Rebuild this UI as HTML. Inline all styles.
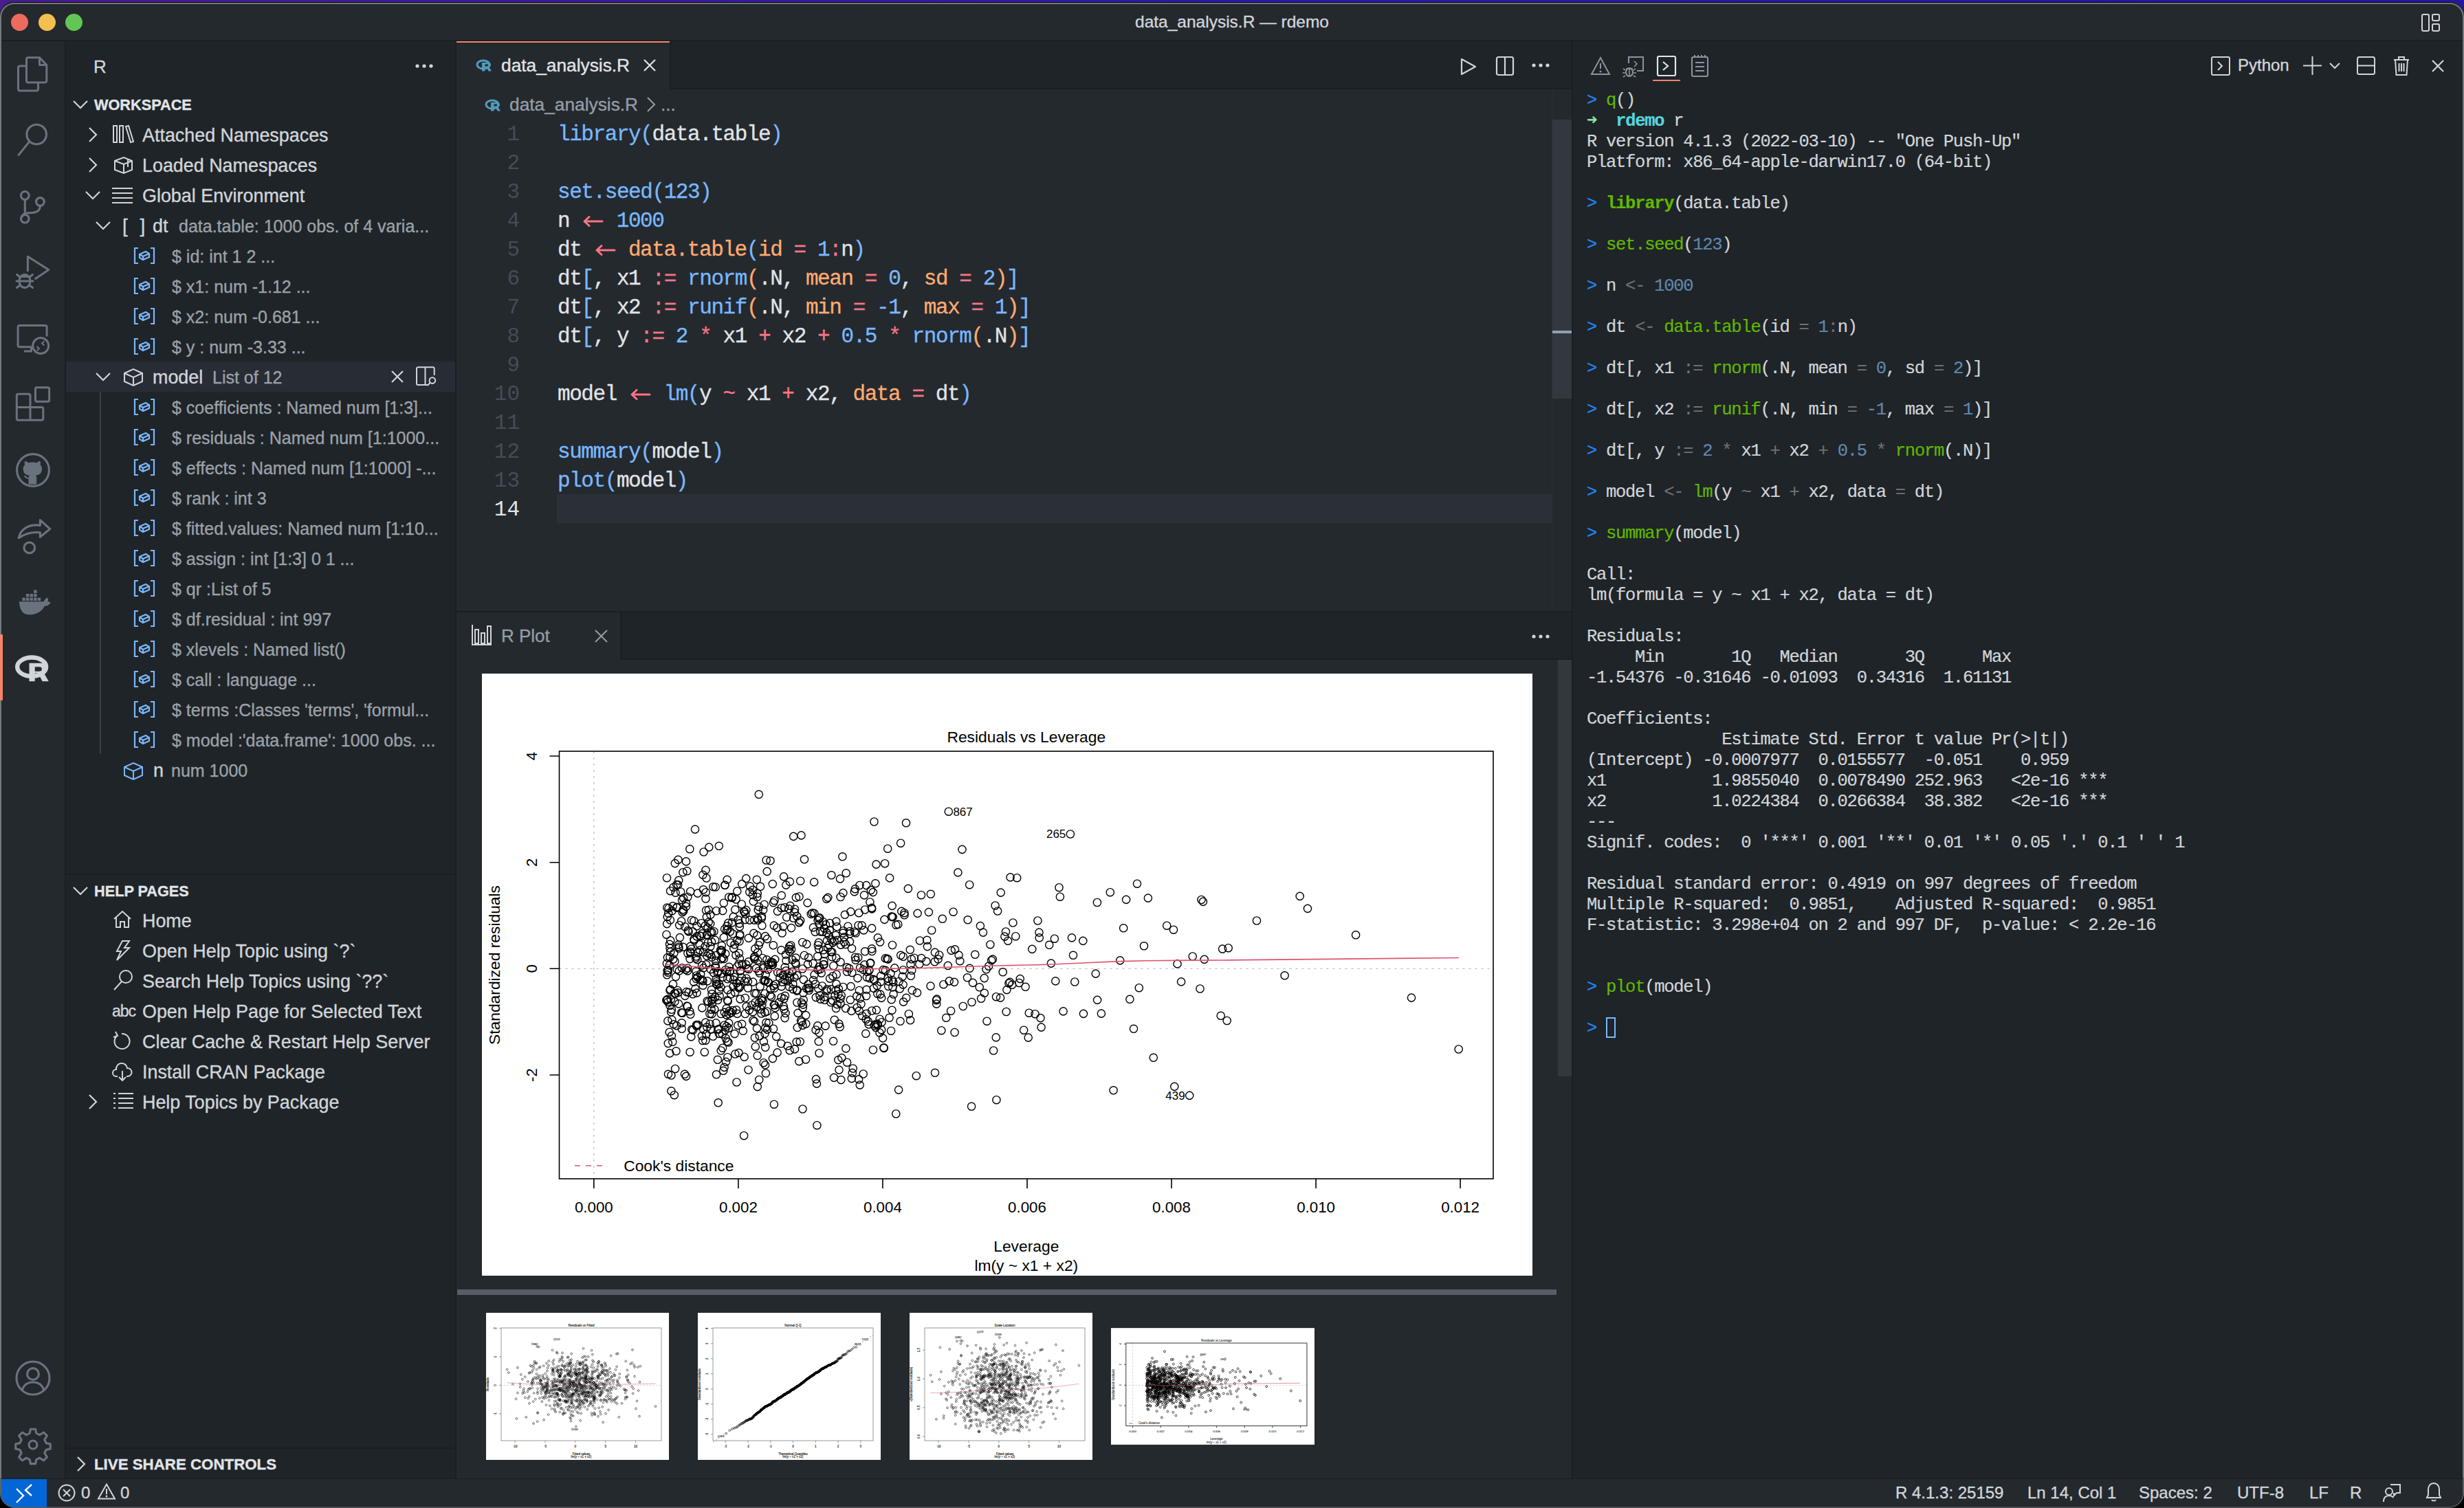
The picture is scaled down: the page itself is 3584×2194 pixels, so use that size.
<!DOCTYPE html>
<html><head><meta charset="utf-8">
<style>
html,body{margin:0;padding:0;width:3584px;height:2194px;overflow:hidden;background:#2e18ab;}
*{box-sizing:border-box;}
.a{position:absolute;-webkit-text-stroke:0.35px currentColor;}
body{font-family:"Liberation Sans",sans-serif;}
.mono{font-family:"Liberation Mono",monospace;}
#win{position:absolute;left:0;top:0;width:3584px;height:2194px;background:#24292e;}
.title{left:0;top:0;width:3584px;height:56px;background:#24292e;}
.ui{color:#d1d5da;font-size:26px;white-space:pre;}
.row{position:absolute;height:44px;line-height:44px;white-space:pre;font-size:26px;color:#d1d5da;}
.code{position:absolute;font-family:"Liberation Mono",monospace;font-size:31px;letter-spacing:-1.42px;-webkit-text-stroke:0.3px currentColor;white-space:pre;color:#e1e4e8;height:42px;line-height:42px;}
.ln{position:absolute;font-family:"Liberation Mono",monospace;font-size:31px;letter-spacing:0;color:#444d56;text-align:right;width:80px;height:42px;line-height:42px;}
.t{position:absolute;left:2308px;font-family:"Liberation Mono",monospace;font-size:25.5px;letter-spacing:-1.28px;-webkit-text-stroke:0.2px currentColor;white-space:pre;color:#d1d5da;height:30px;line-height:30px;}
.kf{color:#79b8ff}.ko{color:#f97583}.kv{color:#ffab70}
.tp{color:#2188ff}.tg{color:#5fb800}.tn{color:#5f87af}.to{color:#707070}
svg{position:absolute;overflow:visible;}
</style></head><body>
<div id="win">
<!-- title bar -->
<div class="a" style="left:0;top:0;width:3584px;height:58px;background:#24292e;"></div>
<div class="a" style="left:0;top:58px;width:3584px;height:2px;background:#1b1f23;"></div>
<div class="a" style="left:16px;top:20px;width:25px;height:25px;border-radius:50%;background:#ee6a5f;"></div>
<div class="a" style="left:56px;top:20px;width:25px;height:25px;border-radius:50%;background:#f5bf4f;"></div>
<div class="a" style="left:95px;top:20px;width:25px;height:25px;border-radius:50%;background:#62c655;"></div>
<div class="a ui" style="left:0;top:16px;width:3584px;text-align:center;font-size:24.5px;color:#d1d5da;line-height:32px;">data_analysis.R — rdemo</div>
<svg style="left:3522px;top:20px" width="28" height="26" viewBox="0 0 28 26"><g fill="none" stroke="#d1d5da" stroke-width="2"><rect x="1" y="1" width="10" height="24" rx="2"/><rect x="16" y="1" width="10" height="9" rx="2"/><rect x="16" y="15" width="10" height="10" rx="2"/></g></svg>

<!-- activity bar -->
<div class="a" style="left:0;top:60px;width:94px;height:2091px;background:#24292e;"></div>
<div class="a" style="left:94px;top:60px;width:2px;height:2091px;background:#1b1f23;"></div>
<div class="a" style="left:0;top:923px;width:4px;height:96px;background:#f9826c;"></div>
<!-- sidebar -->
<div class="a" style="left:96px;top:60px;width:566px;height:2091px;background:#1f2428;"></div>
<div class="a" style="left:662px;top:60px;width:2px;height:2091px;background:#1b1f23;"></div>
<!-- editor group 1 -->
<div class="a" style="left:664px;top:60px;width:1622px;height:70px;background:#1f2428;"></div>
<div class="a" style="left:664px;top:60px;width:310px;height:70px;background:#24292e;border-top:2px solid #f9826c;"></div>
<div class="a" style="left:664px;top:130px;width:1622px;height:760px;background:#24292e;"></div>
<div class="a" style="left:974px;top:60px;width:2px;height:70px;background:#1b1f23;"></div>
<div class="a" style="left:974px;top:128px;width:1312px;height:2px;background:#1b1f23;"></div>
<div class="a" style="left:664px;top:889px;width:1622px;height:2px;background:#1b1f23;"></div>
<!-- editor group 2 (plot) -->
<div class="a" style="left:664px;top:891px;width:1622px;height:68px;background:#1f2428;"></div>
<div class="a" style="left:664px;top:891px;width:238px;height:68px;background:#24292e;"></div>
<div class="a" style="left:664px;top:959px;width:1622px;height:1192px;background:#24292e;"></div>
<div class="a" style="left:902px;top:891px;width:2px;height:69px;background:#1b1f23;"></div>
<div class="a" style="left:902px;top:958px;width:1384px;height:2px;background:#1b1f23;"></div>
<!-- panel (terminal) -->
<div class="a" style="left:2286px;top:60px;width:2px;height:2091px;background:#1b1f23;"></div>
<div class="a" style="left:2288px;top:60px;width:1296px;height:2091px;background:#1f2428;"></div>
<!-- status bar -->
<div class="a" style="left:0;top:2151px;width:3584px;height:2px;background:#1b1f23;"></div>
<div class="a" style="left:0;top:2152px;width:3584px;height:42px;background:#24292e;"></div>
<div class="a" style="left:0;top:2152px;width:68px;height:42px;background:#0366d6;"></div>
<svg style="left:14px;top:74px" width="68" height="68" viewBox="0 0 68 68"><g fill="none" stroke="#6a737d" stroke-width="3" stroke-linejoin="round"><path d="M24.4,22 H15 a2.5,2.5 0 0 0 -2.5,2.5 V55.5 a2.5,2.5 0 0 0 2.5,2.5 H39 a2.5,2.5 0 0 0 2.5,-2.5 V46"/><path d="M27,9.8 H43.5 L53.8,20.5 V43.5 a2.5,2.5 0 0 1 -2.5,2.5 H27 a2.5,2.5 0 0 1 -2.5,-2.5 V12.3 a2.5,2.5 0 0 1 2.5,-2.5 z"/><path d="M43.5,9.8 V20.5 H53.8"/></g></svg>
<svg style="left:14px;top:168px" width="68" height="68" viewBox="0 0 68 68"><g transform="translate(34,34) scale(1.3) translate(-24,-24)"><g fill="none" stroke="#6a737d" stroke-width="2.4" stroke-linejoin="round" stroke-linecap="round"><circle cx="28" cy="19" r="11"/><path d="M20,27 L8,42"/></g></g></svg>
<svg style="left:14px;top:266px" width="68" height="68" viewBox="0 0 68 68"><g transform="translate(34,34) scale(1.3) translate(-24,-24)"><g fill="none" stroke="#6a737d" stroke-width="2.4" stroke-linejoin="round" stroke-linecap="round"><circle cx="15" cy="12" r="4.5"/><circle cx="15" cy="38" r="4.5"/><circle cx="32" cy="19" r="4.5"/><path d="M15,16.5 v17 M32,23.5 c0,7 -6,8 -11,8 c-5,0 -9,1 -9,4"/></g></g></svg>
<svg style="left:14px;top:360px" width="68" height="68" viewBox="0 0 68 68"><g fill="none" stroke="#6a737d" stroke-width="3" stroke-linejoin="round" stroke-linecap="round"><path d="M26.4,33.8 V13.3 L56.8,32.4 L37.5,45.5"/><ellipse cx="22" cy="49" rx="8" ry="9.5"/><path d="M10,49 H34 M14,42.5 H30 M10.5,39.5 L15,43 M33.5,39.5 L29,43 M10.5,58.5 L15,55 M33.5,58.5 L29,55"/></g></svg>
<svg style="left:14px;top:458px" width="68" height="68" viewBox="0 0 68 68"><g fill="none" stroke="#6a737d" stroke-width="3" stroke-linejoin="round"><path d="M32,46.7 H14.6 a2.5,2.5 0 0 1 -2.5,-2.5 V17.9 a2.5,2.5 0 0 1 2.5,-2.5 H51.6 a2.5,2.5 0 0 1 2.5,2.5 V31.5"/><path d="M21,53 H31.5 V47"/><circle cx="45.2" cy="45" r="11.5"/><path d="M39.5,46 l3.5,3 l-3.5,3 M50.5,38.5 l-3.5,3 l3.5,3" stroke-width="2.2"/></g></svg>
<svg style="left:14px;top:554px" width="68" height="68" viewBox="0 0 68 68"><g fill="none" stroke="#6a737d" stroke-width="3" stroke-linejoin="round"><path d="M30,38.4 V21.5 a2.2,2.2 0 0 0 -2.2,-2.2 H12.5 a2.2,2.2 0 0 0 -2.2,2.2 V55 a2.2,2.2 0 0 0 2.2,2.2 H46.6 a2.2,2.2 0 0 0 2.2,-2.2 V40.6 a2.2,2.2 0 0 0 -2.2,-2.2 H10.3 M30,38.4 V57.2"/><rect x="37.5" y="9.8" width="20.2" height="20.5" rx="2.2"/></g></svg>
<svg style="left:14px;top:650px" width="68" height="68" viewBox="0 0 68 68"><g transform="translate(34,34) scale(1.3) translate(-24,-24)"><g fill="none" stroke="#6a737d" stroke-width="2.4" stroke-linejoin="round" stroke-linecap="round"><circle cx="24" cy="24" r="18"/></g><path fill="#6a737d" d="M19,40 v-6 c-3,-1 -5,-2 -5,-4 c2,0 3,2 5,3 c0,-1 0,-2 1,-3 c-5,-1 -7,-3 -7,-8 c0,-2 1,-3 2,-4 c-1,-2 0,-4 0,-4 c2,0 3,1 4,2 c2,-1 7,-1 9,0 c1,-1 2,-2 4,-2 c0,0 1,2 0,4 c1,1 2,2 2,4 c0,5 -2,7 -7,8 c1,1 1,2 1,4 v6 z"/></g></svg>
<svg style="left:14px;top:746px" width="68" height="68" viewBox="0 0 68 68"><g transform="translate(34,34) scale(1.3) translate(-24,-24)"><g fill="none" stroke="#6a737d" stroke-width="2.4" stroke-linejoin="round" stroke-linecap="round"><path d="M8,26 c2,-10 12,-16 24,-14 v-6 l11,10 l-11,9 v-5 c-10,-1 -18,2 -24,6 z"/><circle cx="20" cy="37" r="6"/></g></g></svg>
<svg style="left:14px;top:842px" width="68" height="68" viewBox="0 0 68 68"><g transform="translate(34,31) scale(1.12) translate(-24,-24)"><g fill="#6a737d"><path d="M6,26 h32 c1,-3 3,-5 5,-5 c1,2 1,3 0,5 c2,0 3,1 4,1 c-2,4 -5,5 -8,5 c-4,8 -12,11 -20,11 c-8,0 -12,-5 -13,-17 z"/><rect x="10" y="21" width="4" height="4"/><rect x="15" y="21" width="4" height="4"/><rect x="20" y="21" width="4" height="4"/><rect x="25" y="21" width="4" height="4"/><rect x="30" y="21" width="4" height="4"/><rect x="15" y="16" width="4" height="4"/><rect x="20" y="16" width="4" height="4"/><rect x="25" y="16" width="4" height="4"/><rect x="25" y="11" width="4" height="4"/></g></g></svg>
<svg style="left:24px;top:952px" width="48" height="42" viewBox="0 0 52 46"><ellipse cx="24" cy="20" rx="23" ry="15" fill="none" stroke="#d1d5da" stroke-width="7"/><path fill="#d1d5da" d="M20,14 h18 c8,0 11,3 11,8 c0,4 -3,6 -6,7 l8,14 h-10 l-7,-13 h-5 v13 h-9 z M29,20 v7 h7 c3,0 4,-1 4,-3.5 c0,-2.5 -1,-3.5 -4,-3.5 z"/></svg>
<svg style="left:14px;top:1971px" width="68" height="68" viewBox="0 0 68 68"><g transform="translate(34,34) scale(1.2) translate(-24,-24)"><g fill="none" stroke="#6a737d" stroke-width="2.6" stroke-linejoin="round" stroke-linecap="round"><circle cx="24" cy="24" r="20"/><circle cx="24" cy="19" r="7"/><path d="M11,38 c2,-6 7,-9 13,-9 c6,0 11,3 13,9"/></g></g></svg>
<svg style="left:14px;top:2068px" width="68" height="68" viewBox="0 0 68 68"><g transform="translate(34,34) scale(1.2) translate(-24,-24)"><g fill="none" stroke="#6a737d" stroke-width="2.6" stroke-linejoin="round" stroke-linecap="round"><path d="M21,5 h6 l1,5 l4,2 l5,-3 l4,4 l-3,5 l2,4 l5,1 v6 l-5,1 l-2,4 l3,5 l-4,4 l-5,-3 l-4,2 l-1,5 h-6 l-1,-5 l-4,-2 l-5,3 l-4,-4 l3,-5 l-2,-4 l-5,-1 v-6 l5,-1 l2,-4 l-3,-5 l4,-4 l5,3 l4,-2 z"/><circle cx="24" cy="24" r="5"/></g></g></svg>
<div class="a" style="left:136px;top:75px;height:44px;line-height:44px;font-size:26px;font-weight:400;color:#d1d5da;white-space:pre;">R</div>
<svg style="left:604px;top:93px" width="26" height="6" viewBox="0 0 26 6"><g fill="#d1d5da"><circle cx="3" cy="3" r="2.6"/><circle cx="13" cy="3" r="2.6"/><circle cx="23" cy="3" r="2.6"/></g></svg>
<svg style="left:106px;top:145px" width="22" height="14" viewBox="0 0 22 14"><path d="M1,2 L11,12 L21,2" fill="none" stroke="#d1d5da" stroke-width="2.2"/></svg>
<div class="a" style="left:137px;top:131px;height:44px;line-height:44px;font-size:21.7px;font-weight:700;color:#d1d5da;white-space:pre;color:#e1e4e8">WORKSPACE</div>
<svg style="left:128px;top:185px" width="14" height="22" viewBox="0 0 14 22"><path d="M2,1 L12,11 L2,21" fill="none" stroke="#d1d5da" stroke-width="2.2"/></svg>
<svg style="left:164px;top:181px" width="30" height="30" viewBox="0 0 30 30"><g fill="none" stroke="#d1d5da" stroke-width="2"><rect x="1" y="2" width="5" height="24"/><rect x="10" y="2" width="5" height="24"/><path d="M19,3 l4,-1 l7,23 l-4,1 z"/></g></svg>
<div class="a" style="left:207px;top:175px;height:44px;line-height:44px;font-size:26.9px;font-weight:400;color:#d1d5da;white-space:pre;">Attached Namespaces</div>
<svg style="left:128px;top:229px" width="14" height="22" viewBox="0 0 14 22"><path d="M2,1 L12,11 L2,21" fill="none" stroke="#d1d5da" stroke-width="2.2"/></svg>
<svg style="left:165px;top:226px" width="29" height="28" viewBox="0 0 29 28"><g fill="none" stroke="#d1d5da" stroke-width="2"><path d="M2,8 L15,3 L27,8 V21 L15,26 L2,21 Z M2,8 L15,13 L27,8 M15,13 V26 M21,5.5 V11 l0,6"/></g></svg>
<div class="a" style="left:207px;top:219px;height:44px;line-height:44px;font-size:26.9px;font-weight:400;color:#d1d5da;white-space:pre;">Loaded Namespaces</div>
<svg style="left:124px;top:277px" width="22" height="14" viewBox="0 0 22 14"><path d="M1,2 L11,12 L21,2" fill="none" stroke="#d1d5da" stroke-width="2.2"/></svg>
<svg style="left:162px;top:272px" width="32" height="24" viewBox="0 0 32 24"><g fill="none" stroke="#d1d5da" stroke-width="2"><path d="M1,2 H31 M1,9 H31 M1,16 H31 M1,23 H31"/></g></svg>
<div class="a" style="left:207px;top:263px;height:44px;line-height:44px;font-size:26.9px;font-weight:400;color:#d1d5da;white-space:pre;">Global Environment</div>
<svg style="left:139px;top:321px" width="22" height="14" viewBox="0 0 22 14"><path d="M1,2 L11,12 L21,2" fill="none" stroke="#d1d5da" stroke-width="2.2"/></svg>
<div class="a" style="left:178px;top:307px;height:44px;line-height:44px;font-size:28px;font-weight:400;color:#d1d5da;white-space:pre;letter-spacing:5px">[ ]</div>
<div class="a" style="left:222px;top:307px;height:44px;line-height:44px;font-size:26.9px;font-weight:400;color:#d1d5da;white-space:pre;">dt</div>
<div class="a" style="left:260px;top:307px;height:44px;line-height:44px;font-size:25px;font-weight:400;color:#9ba1a8;white-space:pre;">data.table: 1000 obs. of 4 varia...</div>
<svg style="left:195px;top:360px" width="30" height="24" viewBox="0 0 30 24"><g fill="none" stroke="#79b8ff" stroke-width="2.2"><path d="M6,1 H1 V23 H6 M24,1 H29 V23 H24"/><path d="M8,10 l9,-4 l5,3 v5 l-9,4 l-5,-3 z M8,10 l5,3 l9,-4 M13,13 v5"/></g></svg>
<div class="a" style="left:250px;top:351px;height:44px;line-height:44px;font-size:25px;font-weight:400;color:#9ba1a8;white-space:pre;">$ id: int 1 2 ...</div>
<svg style="left:195px;top:404px" width="30" height="24" viewBox="0 0 30 24"><g fill="none" stroke="#79b8ff" stroke-width="2.2"><path d="M6,1 H1 V23 H6 M24,1 H29 V23 H24"/><path d="M8,10 l9,-4 l5,3 v5 l-9,4 l-5,-3 z M8,10 l5,3 l9,-4 M13,13 v5"/></g></svg>
<div class="a" style="left:250px;top:395px;height:44px;line-height:44px;font-size:25px;font-weight:400;color:#9ba1a8;white-space:pre;">$ x1: num -1.12 ...</div>
<svg style="left:195px;top:448px" width="30" height="24" viewBox="0 0 30 24"><g fill="none" stroke="#79b8ff" stroke-width="2.2"><path d="M6,1 H1 V23 H6 M24,1 H29 V23 H24"/><path d="M8,10 l9,-4 l5,3 v5 l-9,4 l-5,-3 z M8,10 l5,3 l9,-4 M13,13 v5"/></g></svg>
<div class="a" style="left:250px;top:439px;height:44px;line-height:44px;font-size:25px;font-weight:400;color:#9ba1a8;white-space:pre;">$ x2: num -0.681 ...</div>
<svg style="left:195px;top:492px" width="30" height="24" viewBox="0 0 30 24"><g fill="none" stroke="#79b8ff" stroke-width="2.2"><path d="M6,1 H1 V23 H6 M24,1 H29 V23 H24"/><path d="M8,10 l9,-4 l5,3 v5 l-9,4 l-5,-3 z M8,10 l5,3 l9,-4 M13,13 v5"/></g></svg>
<div class="a" style="left:250px;top:483px;height:44px;line-height:44px;font-size:25px;font-weight:400;color:#9ba1a8;white-space:pre;">$ y : num -3.33 ...</div>
<div class="a" style="left:96px;top:526px;width:566px;height:44px;background:#282c35;"></div>
<svg style="left:139px;top:541px" width="22" height="14" viewBox="0 0 22 14"><path d="M1,2 L11,12 L21,2" fill="none" stroke="#d1d5da" stroke-width="2.2"/></svg>
<svg style="left:179px;top:534px" width="30" height="30" viewBox="0 0 30 30"><g fill="none" stroke="#d1d5da" stroke-width="2"><path d="M2,9 L15,3 L28,9 V21 L15,27 L2,21 Z M2,9 L15,15 L28,9 M15,15 V27"/></g></svg>
<div class="a" style="left:222px;top:527px;height:44px;line-height:44px;font-size:26.9px;font-weight:400;color:#d1d5da;white-space:pre;">model</div>
<div class="a" style="left:309px;top:527px;height:44px;line-height:44px;font-size:25px;font-weight:400;color:#9ba1a8;white-space:pre;">List of 12</div>
<svg style="left:569px;top:539px" width="18" height="18" viewBox="0 0 18 18"><path d="M1,1 L17,17 M17,1 L1,17" stroke="#d1d5da" stroke-width="2.2"/></svg>
<svg style="left:605px;top:533px" width="30" height="30" viewBox="0 0 30 30"><g fill="none" stroke="#d1d5da" stroke-width="2"><path d="M17,26.9 H3 a2,2 0 0 1 -2,-2 V3.3 a2,2 0 0 1 2,-2 H24.7 a2,2 0 0 1 2,2 V13"/><path d="M13.5,1.3 V26.9"/><circle cx="23.9" cy="20.6" r="4.3"/><path d="M20.8,23.7 L16.5,28"/></g></svg>
<div class="a" style="left:145px;top:570px;width:2px;height:527px;background:#3b4048;"></div>
<svg style="left:195px;top:580px" width="30" height="24" viewBox="0 0 30 24"><g fill="none" stroke="#79b8ff" stroke-width="2.2"><path d="M6,1 H1 V23 H6 M24,1 H29 V23 H24"/><path d="M8,10 l9,-4 l5,3 v5 l-9,4 l-5,-3 z M8,10 l5,3 l9,-4 M13,13 v5"/></g></svg>
<div class="a" style="left:250px;top:571px;height:44px;line-height:44px;font-size:25px;font-weight:400;color:#9ba1a8;white-space:pre;">$ coefficients : Named num [1:3]...</div>
<svg style="left:195px;top:624px" width="30" height="24" viewBox="0 0 30 24"><g fill="none" stroke="#79b8ff" stroke-width="2.2"><path d="M6,1 H1 V23 H6 M24,1 H29 V23 H24"/><path d="M8,10 l9,-4 l5,3 v5 l-9,4 l-5,-3 z M8,10 l5,3 l9,-4 M13,13 v5"/></g></svg>
<div class="a" style="left:250px;top:615px;height:44px;line-height:44px;font-size:25px;font-weight:400;color:#9ba1a8;white-space:pre;">$ residuals : Named num [1:1000...</div>
<svg style="left:195px;top:668px" width="30" height="24" viewBox="0 0 30 24"><g fill="none" stroke="#79b8ff" stroke-width="2.2"><path d="M6,1 H1 V23 H6 M24,1 H29 V23 H24"/><path d="M8,10 l9,-4 l5,3 v5 l-9,4 l-5,-3 z M8,10 l5,3 l9,-4 M13,13 v5"/></g></svg>
<div class="a" style="left:250px;top:659px;height:44px;line-height:44px;font-size:25px;font-weight:400;color:#9ba1a8;white-space:pre;">$ effects : Named num [1:1000] -...</div>
<svg style="left:195px;top:712px" width="30" height="24" viewBox="0 0 30 24"><g fill="none" stroke="#79b8ff" stroke-width="2.2"><path d="M6,1 H1 V23 H6 M24,1 H29 V23 H24"/><path d="M8,10 l9,-4 l5,3 v5 l-9,4 l-5,-3 z M8,10 l5,3 l9,-4 M13,13 v5"/></g></svg>
<div class="a" style="left:250px;top:703px;height:44px;line-height:44px;font-size:25px;font-weight:400;color:#9ba1a8;white-space:pre;">$ rank : int 3</div>
<svg style="left:195px;top:756px" width="30" height="24" viewBox="0 0 30 24"><g fill="none" stroke="#79b8ff" stroke-width="2.2"><path d="M6,1 H1 V23 H6 M24,1 H29 V23 H24"/><path d="M8,10 l9,-4 l5,3 v5 l-9,4 l-5,-3 z M8,10 l5,3 l9,-4 M13,13 v5"/></g></svg>
<div class="a" style="left:250px;top:747px;height:44px;line-height:44px;font-size:25px;font-weight:400;color:#9ba1a8;white-space:pre;">$ fitted.values: Named num [1:10...</div>
<svg style="left:195px;top:800px" width="30" height="24" viewBox="0 0 30 24"><g fill="none" stroke="#79b8ff" stroke-width="2.2"><path d="M6,1 H1 V23 H6 M24,1 H29 V23 H24"/><path d="M8,10 l9,-4 l5,3 v5 l-9,4 l-5,-3 z M8,10 l5,3 l9,-4 M13,13 v5"/></g></svg>
<div class="a" style="left:250px;top:791px;height:44px;line-height:44px;font-size:25px;font-weight:400;color:#9ba1a8;white-space:pre;">$ assign : int [1:3] 0 1 ...</div>
<svg style="left:195px;top:844px" width="30" height="24" viewBox="0 0 30 24"><g fill="none" stroke="#79b8ff" stroke-width="2.2"><path d="M6,1 H1 V23 H6 M24,1 H29 V23 H24"/><path d="M8,10 l9,-4 l5,3 v5 l-9,4 l-5,-3 z M8,10 l5,3 l9,-4 M13,13 v5"/></g></svg>
<div class="a" style="left:250px;top:835px;height:44px;line-height:44px;font-size:25px;font-weight:400;color:#9ba1a8;white-space:pre;">$ qr :List of 5</div>
<svg style="left:195px;top:888px" width="30" height="24" viewBox="0 0 30 24"><g fill="none" stroke="#79b8ff" stroke-width="2.2"><path d="M6,1 H1 V23 H6 M24,1 H29 V23 H24"/><path d="M8,10 l9,-4 l5,3 v5 l-9,4 l-5,-3 z M8,10 l5,3 l9,-4 M13,13 v5"/></g></svg>
<div class="a" style="left:250px;top:879px;height:44px;line-height:44px;font-size:25px;font-weight:400;color:#9ba1a8;white-space:pre;">$ df.residual : int 997</div>
<svg style="left:195px;top:932px" width="30" height="24" viewBox="0 0 30 24"><g fill="none" stroke="#79b8ff" stroke-width="2.2"><path d="M6,1 H1 V23 H6 M24,1 H29 V23 H24"/><path d="M8,10 l9,-4 l5,3 v5 l-9,4 l-5,-3 z M8,10 l5,3 l9,-4 M13,13 v5"/></g></svg>
<div class="a" style="left:250px;top:923px;height:44px;line-height:44px;font-size:25px;font-weight:400;color:#9ba1a8;white-space:pre;">$ xlevels : Named list()</div>
<svg style="left:195px;top:976px" width="30" height="24" viewBox="0 0 30 24"><g fill="none" stroke="#79b8ff" stroke-width="2.2"><path d="M6,1 H1 V23 H6 M24,1 H29 V23 H24"/><path d="M8,10 l9,-4 l5,3 v5 l-9,4 l-5,-3 z M8,10 l5,3 l9,-4 M13,13 v5"/></g></svg>
<div class="a" style="left:250px;top:967px;height:44px;line-height:44px;font-size:25px;font-weight:400;color:#9ba1a8;white-space:pre;">$ call : language ...</div>
<svg style="left:195px;top:1020px" width="30" height="24" viewBox="0 0 30 24"><g fill="none" stroke="#79b8ff" stroke-width="2.2"><path d="M6,1 H1 V23 H6 M24,1 H29 V23 H24"/><path d="M8,10 l9,-4 l5,3 v5 l-9,4 l-5,-3 z M8,10 l5,3 l9,-4 M13,13 v5"/></g></svg>
<div class="a" style="left:250px;top:1011px;height:44px;line-height:44px;font-size:25px;font-weight:400;color:#9ba1a8;white-space:pre;">$ terms :Classes 'terms', 'formul...</div>
<svg style="left:195px;top:1064px" width="30" height="24" viewBox="0 0 30 24"><g fill="none" stroke="#79b8ff" stroke-width="2.2"><path d="M6,1 H1 V23 H6 M24,1 H29 V23 H24"/><path d="M8,10 l9,-4 l5,3 v5 l-9,4 l-5,-3 z M8,10 l5,3 l9,-4 M13,13 v5"/></g></svg>
<div class="a" style="left:250px;top:1055px;height:44px;line-height:44px;font-size:25px;font-weight:400;color:#9ba1a8;white-space:pre;">$ model :'data.frame': 1000 obs. ...</div>
<svg style="left:179px;top:1107px" width="30" height="30" viewBox="0 0 30 30"><g fill="none" stroke="#79b8ff" stroke-width="2"><path d="M2,9 L15,3 L28,9 V21 L15,27 L2,21 Z M2,9 L15,15 L28,9 M15,15 V27"/></g></svg>
<div class="a" style="left:223px;top:1099px;height:44px;line-height:44px;font-size:26.9px;font-weight:400;color:#d1d5da;white-space:pre;">n</div>
<div class="a" style="left:249px;top:1099px;height:44px;line-height:44px;font-size:25px;font-weight:400;color:#9ba1a8;white-space:pre;">num 1000</div>
<div class="a" style="left:96px;top:1271px;width:566px;height:2px;background:#1b1f23;"></div>
<svg style="left:106px;top:1289px" width="22" height="14" viewBox="0 0 22 14"><path d="M1,2 L11,12 L21,2" fill="none" stroke="#d1d5da" stroke-width="2.2"/></svg>
<div class="a" style="left:137px;top:1275px;height:44px;line-height:44px;font-size:21.7px;font-weight:700;color:#d1d5da;white-space:pre;color:#e1e4e8">HELP PAGES</div>
<div class="a" style="left:207px;top:1318px;height:44px;line-height:44px;font-size:26.9px;font-weight:400;color:#d1d5da;white-space:pre;">Home</div>
<div class="a" style="left:207px;top:1362px;height:44px;line-height:44px;font-size:26.9px;font-weight:400;color:#d1d5da;white-space:pre;">Open Help Topic using `?`</div>
<div class="a" style="left:207px;top:1406px;height:44px;line-height:44px;font-size:26.9px;font-weight:400;color:#d1d5da;white-space:pre;">Search Help Topics using `??`</div>
<div class="a" style="left:207px;top:1450px;height:44px;line-height:44px;font-size:26.9px;font-weight:400;color:#d1d5da;white-space:pre;">Open Help Page for Selected Text</div>
<div class="a" style="left:207px;top:1494px;height:44px;line-height:44px;font-size:26.9px;font-weight:400;color:#d1d5da;white-space:pre;">Clear Cache &amp; Restart Help Server</div>
<div class="a" style="left:207px;top:1538px;height:44px;line-height:44px;font-size:26.9px;font-weight:400;color:#d1d5da;white-space:pre;">Install CRAN Package</div>
<div class="a" style="left:207px;top:1582px;height:44px;line-height:44px;font-size:26.9px;font-weight:400;color:#d1d5da;white-space:pre;">Help Topics by Package</div>
<svg style="left:164px;top:1324px" width="28" height="28" viewBox="0 0 28 28"><g fill="none" stroke="#d1d5da" stroke-width="2"><path d="M2,13 L14,2 L26,13 M5,10 V25 H11 V17 H17 V25 H23 V10"/></g></svg>
<svg style="left:166px;top:1368px" width="26" height="30" viewBox="0 0 26 30"><g fill="none" stroke="#d1d5da" stroke-width="2"><path d="M12,1 H22 L15,11 H22 L4,29 L10,16 H4 Z"/></g></svg>
<svg style="left:164px;top:1410px" width="30" height="32" viewBox="0 0 30 32"><g fill="none" stroke="#d1d5da" stroke-width="2"><circle cx="19" cy="11" r="9"/><path d="M13,18 L2,30"/></g></svg>
<div class="a" style="left:163px;top:1449px;height:44px;line-height:44px;font-size:23px;color:#d1d5da;letter-spacing:-1px">abc</div>
<svg style="left:164px;top:1500px" width="30" height="30" viewBox="0 0 30 30"><g fill="none" stroke="#d1d5da" stroke-width="2"><path d="M6,7 A11,11 0 1 0 13,4"/><path d="M4,1 L7,7 L1,9"/></g></svg>
<svg style="left:163px;top:1545px" width="30" height="28" viewBox="0 0 30 28"><g fill="none" stroke="#d1d5da" stroke-width="2"><path d="M8,21 H6 A5,5 0 0 1 6,11 A8,8 0 0 1 22,9 A6,6 0 0 1 23,21 H21"/><path d="M15,13 V27 M10,22 L15,27 L20,22"/></g></svg>
<svg style="left:128px;top:1592px" width="14" height="22" viewBox="0 0 14 22"><path d="M2,1 L12,11 L2,21" fill="none" stroke="#d1d5da" stroke-width="2.2"/></svg>
<svg style="left:164px;top:1589px" width="30" height="28" viewBox="0 0 30 28"><g fill="none" stroke="#d1d5da" stroke-width="2"><path d="M8,2 H30 M8,9 H30 M8,16 H30 M8,23 H30 M1,2 H4 M1,9 H4 M1,16 H4 M1,23 H4"/></g></svg>
<div class="a" style="left:96px;top:2106px;width:566px;height:2px;background:#1b1f23;"></div>
<svg style="left:111px;top:2119px" width="14" height="22" viewBox="0 0 14 22"><path d="M2,1 L12,11 L2,21" fill="none" stroke="#d1d5da" stroke-width="2.2"/></svg>
<div class="a" style="left:137px;top:2109px;height:44px;line-height:44px;font-size:22.3px;font-weight:700;color:#d1d5da;white-space:pre;color:#e1e4e8">LIVE SHARE CONTROLS</div><svg style="left:693px;top:85.5px" width="24" height="19" viewBox="0 0 24 19"><ellipse cx="10" cy="8" rx="9" ry="6" fill="none" stroke="#519aba" stroke-width="3"/><path fill="#519aba" d="M8,5 h8 c3,0 5,1.5 5,3.5 c0,1.7 -1,2.6 -2.5,3 l3.5,6 h-4.5 l-3,-5.5 h-2 v5.5 h-4.5 z M12.5,7.5 v3 h3 c1.2,0 1.7,-0.5 1.7,-1.5 c0,-1 -0.5,-1.5 -1.7,-1.5 z"/></svg>
<div class="a" style="left:729px;top:73.0px;height:44px;line-height:44px;font-size:26.3px;font-weight:400;color:#e1e4e8;white-space:pre;">data_analysis.R</div>
<svg style="left:936px;top:86px" width="18" height="18" viewBox="0 0 18 18"><path d="M1,1 L17,17 M17,1 L1,17" stroke="#e1e4e8" stroke-width="2.2"/></svg>
<svg style="left:2124px;top:84px" width="24" height="26" viewBox="0 0 24 26"><path d="M2,2 L22,13 L2,24 Z" fill="none" stroke="#d1d5da" stroke-width="2.2" stroke-linejoin="round"/></svg>
<svg style="left:2176px;top:82px" width="26" height="28" viewBox="0 0 26 28"><g fill="none" stroke="#d1d5da" stroke-width="2.2"><rect x="1" y="1" width="24" height="26" rx="2.5"/><path d="M13,1 V27"/></g></svg>
<svg style="left:2228px;top:92px" width="26" height="6" viewBox="0 0 26 6"><g fill="#d1d5da"><circle cx="3" cy="3" r="2.6"/><circle cx="13" cy="3" r="2.6"/><circle cx="23" cy="3" r="2.6"/></g></svg>
<svg style="left:706px;top:143.5px" width="24" height="19" viewBox="0 0 24 19"><ellipse cx="10" cy="8" rx="9" ry="6" fill="none" stroke="#519aba" stroke-width="3"/><path fill="#519aba" d="M8,5 h8 c3,0 5,1.5 5,3.5 c0,1.7 -1,2.6 -2.5,3 l3.5,6 h-4.5 l-3,-5.5 h-2 v5.5 h-4.5 z M12.5,7.5 v3 h3 c1.2,0 1.7,-0.5 1.7,-1.5 c0,-1 -0.5,-1.5 -1.7,-1.5 z"/></svg>
<div class="a" style="left:741px;top:130.0px;height:44px;line-height:44px;font-size:26.3px;font-weight:400;color:#959da5;white-space:pre;">data_analysis.R</div>
<svg style="left:941px;top:141px" width="12" height="22" viewBox="0 0 12 22"><path d="M1,1 L11,11 L1,21" fill="none" stroke="#959da5" stroke-width="2"/></svg>
<div class="a" style="left:961px;top:130.0px;height:44px;line-height:44px;font-size:26px;font-weight:400;color:#959da5;white-space:pre;">...</div>
<div class="a" style="left:810px;top:719px;width:1448px;height:42px;background:#2b3036;"></div>
<div class="a" style="left:2257px;top:130px;width:1px;height:759px;background:#2b3036;"></div>
<div class="a" style="left:2258px;top:174px;width:28px;height:406px;background:#33383f;"></div>
<div class="a" style="left:2258px;top:481px;width:28px;height:4px;background:#8fa0b5;"></div>
<div class="ln" style="left:676px;top:175px;color:#444d56">1</div>
<div class="code" style="left:811px;top:175px"><span class="kf">library(</span>data.table<span class="kf">)</span></div>
<div class="ln" style="left:676px;top:217px;color:#444d56">2</div>
<div class="ln" style="left:676px;top:259px;color:#444d56">3</div>
<div class="code" style="left:811px;top:259px"><span class="kf">set.seed(123)</span></div>
<div class="ln" style="left:676px;top:301px;color:#444d56">4</div>
<div class="code" style="left:811px;top:301px">n <span style="display:inline-block;width:34.2px;height:20px;position:relative;vertical-align:middle"><svg style="left:3px;top:2px" width="30" height="16" viewBox="0 0 30 16"><path d="M9,1.5 L2,8 L9,14.5 M2.5,8 H28" fill="none" stroke="#f97583" stroke-width="3" stroke-linecap="round" stroke-linejoin="round"/></svg></span> <span class="kf">1000</span></div>
<div class="ln" style="left:676px;top:343px;color:#444d56">5</div>
<div class="code" style="left:811px;top:343px">dt <span style="display:inline-block;width:34.2px;height:20px;position:relative;vertical-align:middle"><svg style="left:3px;top:2px" width="30" height="16" viewBox="0 0 30 16"><path d="M9,1.5 L2,8 L9,14.5 M2.5,8 H28" fill="none" stroke="#f97583" stroke-width="3" stroke-linecap="round" stroke-linejoin="round"/></svg></span> <span class="kv">data.table</span><span class="kf">(</span><span class="kv">id</span> <span class="ko">=</span> <span class="kf">1</span><span class="ko">:</span>n<span class="kf">)</span></div>
<div class="ln" style="left:676px;top:385px;color:#444d56">6</div>
<div class="code" style="left:811px;top:385px">dt<span class="kf">[</span>, x1 <span class="ko">:=</span> <span class="kf">rnorm</span><span class="kv">(</span>.N, <span class="kv">mean</span> <span class="ko">=</span> <span class="kf">0</span>, <span class="kv">sd</span> <span class="ko">=</span> <span class="kf">2</span><span class="kv">)</span><span class="kf">]</span></div>
<div class="ln" style="left:676px;top:427px;color:#444d56">7</div>
<div class="code" style="left:811px;top:427px">dt<span class="kf">[</span>, x2 <span class="ko">:=</span> <span class="kf">runif</span><span class="kv">(</span>.N, <span class="kv">min</span> <span class="ko">=</span> <span class="kf">-1</span>, <span class="kv">max</span> <span class="ko">=</span> <span class="kf">1</span><span class="kv">)</span><span class="kf">]</span></div>
<div class="ln" style="left:676px;top:469px;color:#444d56">8</div>
<div class="code" style="left:811px;top:469px">dt<span class="kf">[</span>, y <span class="ko">:=</span> <span class="kf">2</span> <span class="ko">*</span> x1 <span class="ko">+</span> x2 <span class="ko">+</span> <span class="kf">0.5</span> <span class="ko">*</span> <span class="kf">rnorm</span><span class="kv">(</span>.N<span class="kv">)</span><span class="kf">]</span></div>
<div class="ln" style="left:676px;top:511px;color:#444d56">9</div>
<div class="ln" style="left:676px;top:553px;color:#444d56">10</div>
<div class="code" style="left:811px;top:553px">model <span style="display:inline-block;width:34.2px;height:20px;position:relative;vertical-align:middle"><svg style="left:3px;top:2px" width="30" height="16" viewBox="0 0 30 16"><path d="M9,1.5 L2,8 L9,14.5 M2.5,8 H28" fill="none" stroke="#f97583" stroke-width="3" stroke-linecap="round" stroke-linejoin="round"/></svg></span> <span class="kf">lm(</span>y <span class="ko">~</span> x1 <span class="ko">+</span> x2, <span class="kv">data</span> <span class="ko">=</span> dt<span class="kf">)</span></div>
<div class="ln" style="left:676px;top:595px;color:#444d56">11</div>
<div class="ln" style="left:676px;top:637px;color:#444d56">12</div>
<div class="code" style="left:811px;top:637px"><span class="kf">summary(</span>model<span class="kf">)</span></div>
<div class="ln" style="left:676px;top:679px;color:#444d56">13</div>
<div class="code" style="left:811px;top:679px"><span class="kf">plot(</span>model<span class="kf">)</span></div>
<div class="ln" style="left:676px;top:721px;color:#e1e4e8">14</div>
<svg style="left:686px;top:909px" width="30" height="30" viewBox="0 0 30 30"><g fill="none" stroke="#d1d5da" stroke-width="2"><path d="M1,0 V29 H29"/><rect x="5" y="7" width="5" height="20"/><rect x="14" y="12" width="5" height="15"/><rect x="23" y="2" width="5" height="25"/></g></svg>
<div class="a" style="left:729px;top:903.0px;height:44px;line-height:44px;font-size:26px;font-weight:400;color:#959da5;white-space:pre;">R Plot</div>
<svg style="left:865px;top:916px" width="19" height="19" viewBox="0 0 19 19"><path d="M1,1 L18,18 M18,1 L1,18" stroke="#959da5" stroke-width="2"/></svg>
<svg style="left:2228px;top:923px" width="26" height="6" viewBox="0 0 26 6"><g fill="#d1d5da"><circle cx="3" cy="3" r="2.6"/><circle cx="13" cy="3" r="2.6"/><circle cx="23" cy="3" r="2.6"/></g></svg><svg style="left:0;top:0" width="3584" height="2194" viewBox="0 0 3584 2194"><rect x="701" y="980" width="1528" height="876" fill="#fff"/><path d="M863.8,1093V1715M813.5,1409.3H2172" stroke="#bebebe" stroke-width="1.3" stroke-dasharray="3 6" fill="none"/><g fill="none" stroke="#000" stroke-width="1.4"><circle cx="1142.5" cy="1474" r="5.6"/><circle cx="1128.3" cy="1431.9" r="5.6"/><circle cx="1383.1" cy="1470.7" r="5.6"/><circle cx="969.4" cy="1359.7" r="5.6"/><circle cx="970.3" cy="1320.5" r="5.6"/><circle cx="1291.2" cy="1234.7" r="5.6"/><circle cx="993.6" cy="1377.9" r="5.6"/><circle cx="1376.3" cy="1480.8" r="5.6"/><circle cx="1315.4" cy="1328.2" r="5.6"/><circle cx="1083.8" cy="1338.1" r="5.6"/><circle cx="1270.5" cy="1424.9" r="5.6"/><circle cx="1048.7" cy="1528.5" r="5.6"/><circle cx="996.3" cy="1348.2" r="5.6"/><circle cx="984.5" cy="1320.7" r="5.6"/><circle cx="1308.8" cy="1438.5" r="5.6"/><circle cx="1430" cy="1356.6" r="5.6"/><circle cx="1071.5" cy="1430.4" r="5.6"/><circle cx="1461.4" cy="1362.6" r="5.6"/><circle cx="1057.2" cy="1414" r="5.6"/><circle cx="1292.2" cy="1435" r="5.6"/><circle cx="1410.4" cy="1408.8" r="5.6"/><circle cx="979" cy="1432" r="5.6"/><circle cx="1400.8" cy="1464" r="5.6"/><circle cx="1136.6" cy="1435.2" r="5.6"/><circle cx="1193.2" cy="1410" r="5.6"/><circle cx="1347.4" cy="1398.8" r="5.6"/><circle cx="1079.2" cy="1286.1" r="5.6"/><circle cx="978.3" cy="1515.8" r="5.6"/><circle cx="1118" cy="1429.5" r="5.6"/><circle cx="1193.3" cy="1355.4" r="5.6"/><circle cx="993.4" cy="1269.2" r="5.6"/><circle cx="987.3" cy="1377.6" r="5.6"/><circle cx="1060.4" cy="1406.8" r="5.6"/><circle cx="1146" cy="1427.4" r="5.6"/><circle cx="1236" cy="1370" r="5.6"/><circle cx="1084.2" cy="1329.9" r="5.6"/><circle cx="1014.7" cy="1421.9" r="5.6"/><circle cx="1222.5" cy="1399.8" r="5.6"/><circle cx="1244.6" cy="1396.8" r="5.6"/><circle cx="1062" cy="1355.3" r="5.6"/><circle cx="1027.1" cy="1324.5" r="5.6"/><circle cx="1102.1" cy="1385.9" r="5.6"/><circle cx="1148" cy="1420.5" r="5.6"/><circle cx="1540.5" cy="1291.2" r="5.6"/><circle cx="1329.9" cy="1393.7" r="5.6"/><circle cx="1320.9" cy="1292.9" r="5.6"/><circle cx="1113.6" cy="1418.1" r="5.6"/><circle cx="1101.3" cy="1360.9" r="5.6"/><circle cx="1285.5" cy="1524.2" r="5.6"/><circle cx="970.3" cy="1418.3" r="5.6"/><circle cx="984.9" cy="1410.4" r="5.6"/><circle cx="1167.8" cy="1466.2" r="5.6"/><circle cx="1221.7" cy="1494.1" r="5.6"/><circle cx="1311.3" cy="1325.9" r="5.6"/><circle cx="1197.2" cy="1341.2" r="5.6"/><circle cx="1388.6" cy="1502" r="5.6"/><circle cx="1268.4" cy="1384" r="5.6"/><circle cx="1101" cy="1496.1" r="5.6"/><circle cx="1056.8" cy="1493.2" r="5.6"/><circle cx="1009.8" cy="1368.1" r="5.6"/><circle cx="1166" cy="1458.8" r="5.6"/><circle cx="1154" cy="1335.8" r="5.6"/><circle cx="1000.2" cy="1408.5" r="5.6"/><circle cx="1230" cy="1374" r="5.6"/><circle cx="1222.3" cy="1453" r="5.6"/><circle cx="1273.9" cy="1495" r="5.6"/><circle cx="1027.9" cy="1334" r="5.6"/><circle cx="1033.7" cy="1388.6" r="5.6"/><circle cx="1183" cy="1426.1" r="5.6"/><circle cx="1629.2" cy="1397.4" r="5.6"/><circle cx="1162.5" cy="1304.5" r="5.6"/><circle cx="1775.7" cy="1477.8" r="5.6"/><circle cx="1085.8" cy="1464.3" r="5.6"/><circle cx="1035.8" cy="1460.5" r="5.6"/><circle cx="1058.3" cy="1538.2" r="5.6"/><circle cx="1162.3" cy="1341.9" r="5.6"/><circle cx="979.3" cy="1395.5" r="5.6"/><circle cx="1143.6" cy="1397.7" r="5.6"/><circle cx="1239.3" cy="1415.1" r="5.6"/><circle cx="1219.3" cy="1446.8" r="5.6"/><circle cx="1115.7" cy="1471.5" r="5.6"/><circle cx="1030.6" cy="1341.8" r="5.6"/><circle cx="1051.1" cy="1524.7" r="5.6"/><circle cx="1202.9" cy="1368.8" r="5.6"/><circle cx="976.1" cy="1472.3" r="5.6"/><circle cx="1004.1" cy="1386.5" r="5.6"/><circle cx="1108.3" cy="1461.8" r="5.6"/><circle cx="1282.1" cy="1451.9" r="5.6"/><circle cx="1022.4" cy="1272.8" r="5.6"/><circle cx="1151" cy="1350.1" r="5.6"/><circle cx="1223.3" cy="1571.1" r="5.6"/><circle cx="1048.9" cy="1395.4" r="5.6"/><circle cx="1176.9" cy="1440.8" r="5.6"/><circle cx="1282.1" cy="1498.2" r="5.6"/><circle cx="1210.2" cy="1385.1" r="5.6"/><circle cx="1085.3" cy="1403.4" r="5.6"/><circle cx="1718.1" cy="1428.4" r="5.6"/><circle cx="1225.4" cy="1246.3" r="5.6"/><circle cx="976.4" cy="1587.3" r="5.6"/><circle cx="1306.3" cy="1344.8" r="5.6"/><circle cx="1048.2" cy="1436.1" r="5.6"/><circle cx="1001.6" cy="1355.4" r="5.6"/><circle cx="982.6" cy="1445.5" r="5.6"/><circle cx="1252.5" cy="1460.8" r="5.6"/><circle cx="1113" cy="1549.4" r="5.6"/><circle cx="1029" cy="1427.4" r="5.6"/><circle cx="1165.5" cy="1215.4" r="5.6"/><circle cx="1370.8" cy="1336.8" r="5.6"/><circle cx="1164.2" cy="1281.7" r="5.6"/><circle cx="1192.3" cy="1335.4" r="5.6"/><circle cx="1069.3" cy="1323.4" r="5.6"/><circle cx="1066.8" cy="1333.9" r="5.6"/><circle cx="1348.9" cy="1377.1" r="5.6"/><circle cx="969.4" cy="1455.2" r="5.6"/><circle cx="996.4" cy="1448.9" r="5.6"/><circle cx="1074.6" cy="1531.8" r="5.6"/><circle cx="1055.5" cy="1411" r="5.6"/><circle cx="1286.5" cy="1337.9" r="5.6"/><circle cx="1108" cy="1333.4" r="5.6"/><circle cx="1235.1" cy="1408.8" r="5.6"/><circle cx="1199.3" cy="1454.8" r="5.6"/><circle cx="1103.8" cy="1155.8" r="5.6"/><circle cx="1058.7" cy="1351.9" r="5.6"/><circle cx="1072.3" cy="1296.6" r="5.6"/><circle cx="1482.4" cy="1430" r="5.6"/><circle cx="1287.9" cy="1411.8" r="5.6"/><circle cx="1124.8" cy="1375.3" r="5.6"/><circle cx="970" cy="1277.2" r="5.6"/><circle cx="1075" cy="1437.6" r="5.6"/><circle cx="1201" cy="1345.4" r="5.6"/><circle cx="1332.8" cy="1565.2" r="5.6"/><circle cx="1007.7" cy="1446.2" r="5.6"/><circle cx="1129.2" cy="1508.1" r="5.6"/><circle cx="1136.7" cy="1321" r="5.6"/><circle cx="1472.2" cy="1432.8" r="5.6"/><circle cx="1105.6" cy="1435.2" r="5.6"/><circle cx="1202.3" cy="1307.9" r="5.6"/><circle cx="1141.3" cy="1320.2" r="5.6"/><circle cx="1601.9" cy="1474.6" r="5.6"/><circle cx="1197.6" cy="1382.2" r="5.6"/><circle cx="1068.5" cy="1504.1" r="5.6"/><circle cx="1100" cy="1445.6" r="5.6"/><circle cx="1260.1" cy="1288.1" r="5.6"/><circle cx="1455.7" cy="1298.6" r="5.6"/><circle cx="1386.6" cy="1326.7" r="5.6"/><circle cx="1193.5" cy="1453.7" r="5.6"/><circle cx="1255.7" cy="1562.5" r="5.6"/><circle cx="1033.6" cy="1497.7" r="5.6"/><circle cx="1451.1" cy="1325.5" r="5.6"/><circle cx="1208.7" cy="1439.4" r="5.6"/><circle cx="1071.5" cy="1574.5" r="5.6"/><circle cx="1291.6" cy="1423.2" r="5.6"/><circle cx="1026.7" cy="1298.2" r="5.6"/><circle cx="1215.5" cy="1360.8" r="5.6"/><circle cx="991.2" cy="1473.4" r="5.6"/><circle cx="1024.8" cy="1530.7" r="5.6"/><circle cx="1003.2" cy="1471.3" r="5.6"/><circle cx="1117" cy="1410.5" r="5.6"/><circle cx="1159.2" cy="1333" r="5.6"/><circle cx="995.9" cy="1562.8" r="5.6"/><circle cx="1350.9" cy="1327.1" r="5.6"/><circle cx="1255.8" cy="1410.9" r="5.6"/><circle cx="1167.3" cy="1371" r="5.6"/><circle cx="2121.7" cy="1526.5" r="5.6"/><circle cx="1000.1" cy="1464.2" r="5.6"/><circle cx="1280.4" cy="1446.6" r="5.6"/><circle cx="1268" cy="1320.9" r="5.6"/><circle cx="1297.4" cy="1333.9" r="5.6"/><circle cx="1068.5" cy="1374.3" r="5.6"/><circle cx="987.2" cy="1280.9" r="5.6"/><circle cx="1120.3" cy="1448.3" r="5.6"/><circle cx="972.2" cy="1328.9" r="5.6"/><circle cx="1089" cy="1410" r="5.6"/><circle cx="1455.1" cy="1451.6" r="5.6"/><circle cx="1162.3" cy="1342.2" r="5.6"/><circle cx="1340" cy="1302.2" r="5.6"/><circle cx="1005.9" cy="1338.7" r="5.6"/><circle cx="1122" cy="1450.3" r="5.6"/><circle cx="1249.9" cy="1441" r="5.6"/><circle cx="1101.3" cy="1305" r="5.6"/><circle cx="1366.2" cy="1389.5" r="5.6"/><circle cx="1164.1" cy="1339.3" r="5.6"/><circle cx="1275.7" cy="1434" r="5.6"/><circle cx="1052.8" cy="1313.7" r="5.6"/><circle cx="1035.2" cy="1475.4" r="5.6"/><circle cx="1244.6" cy="1357.5" r="5.6"/><circle cx="1238.5" cy="1470.9" r="5.6"/><circle cx="1044.7" cy="1604.3" r="5.6"/><circle cx="1097.9" cy="1509.8" r="5.6"/><circle cx="1074.8" cy="1402.5" r="5.6"/><circle cx="1009.3" cy="1340" r="5.6"/><circle cx="1110.7" cy="1546.2" r="5.6"/><circle cx="1005.3" cy="1508.4" r="5.6"/><circle cx="1294.1" cy="1277.4" r="5.6"/><circle cx="1318.2" cy="1451.8" r="5.6"/><circle cx="1477.3" cy="1362.2" r="5.6"/><circle cx="1046.7" cy="1449.2" r="5.6"/><circle cx="1153.3" cy="1439.1" r="5.6"/><circle cx="1021.1" cy="1404.4" r="5.6"/><circle cx="1284.5" cy="1411.1" r="5.6"/><circle cx="1593.7" cy="1416.6" r="5.6"/><circle cx="1202.3" cy="1441.7" r="5.6"/><circle cx="1082.1" cy="1652.2" r="5.6"/><circle cx="1287.1" cy="1256.2" r="5.6"/><circle cx="1115.7" cy="1267.9" r="5.6"/><circle cx="1007.9" cy="1498.7" r="5.6"/><circle cx="1247.5" cy="1423.1" r="5.6"/><circle cx="1064.6" cy="1305.2" r="5.6"/><circle cx="1258.1" cy="1323.5" r="5.6"/><circle cx="1026.5" cy="1307.5" r="5.6"/><circle cx="984.2" cy="1492.2" r="5.6"/><circle cx="1011" cy="1206.6" r="5.6"/><circle cx="1273.6" cy="1490.4" r="5.6"/><circle cx="1183" cy="1349.4" r="5.6"/><circle cx="1079.8" cy="1402.9" r="5.6"/><circle cx="1467.4" cy="1430.6" r="5.6"/><circle cx="1190.3" cy="1438.2" r="5.6"/><circle cx="1053.7" cy="1491.5" r="5.6"/><circle cx="1143.3" cy="1287.6" r="5.6"/><circle cx="1191.4" cy="1406.6" r="5.6"/><circle cx="1070.4" cy="1389.8" r="5.6"/><circle cx="1028.3" cy="1390.8" r="5.6"/><circle cx="1226.4" cy="1436" r="5.6"/><circle cx="1271.7" cy="1492.1" r="5.6"/><circle cx="1287.8" cy="1394.4" r="5.6"/><circle cx="1249.1" cy="1570.4" r="5.6"/><circle cx="1145.6" cy="1521.8" r="5.6"/><circle cx="1059.8" cy="1495.9" r="5.6"/><circle cx="1200.6" cy="1492.6" r="5.6"/><circle cx="1198.7" cy="1403.2" r="5.6"/><circle cx="1469.6" cy="1276.4" r="5.6"/><circle cx="1130.6" cy="1531.4" r="5.6"/><circle cx="974" cy="1373.9" r="5.6"/><circle cx="1059.3" cy="1342.9" r="5.6"/><circle cx="1041.5" cy="1488.4" r="5.6"/><circle cx="1159.5" cy="1419.1" r="5.6"/><circle cx="1217.3" cy="1348.3" r="5.6"/><circle cx="1066.9" cy="1425.6" r="5.6"/><circle cx="1260.8" cy="1421.7" r="5.6"/><circle cx="1313.7" cy="1391.8" r="5.6"/><circle cx="1104.9" cy="1415.8" r="5.6"/><circle cx="1028.8" cy="1456.3" r="5.6"/><circle cx="1434.6" cy="1410.3" r="5.6"/><circle cx="1393.4" cy="1269.4" r="5.6"/><circle cx="1191.6" cy="1344.2" r="5.6"/><circle cx="1505.6" cy="1475.2" r="5.6"/><circle cx="976.9" cy="1507" r="5.6"/><circle cx="1276.3" cy="1445.7" r="5.6"/><circle cx="1064.7" cy="1306.3" r="5.6"/><circle cx="1048" cy="1382.5" r="5.6"/><circle cx="1297.5" cy="1469.7" r="5.6"/><circle cx="1303.4" cy="1345.7" r="5.6"/><circle cx="983" cy="1421.1" r="5.6"/><circle cx="1054.7" cy="1498.8" r="5.6"/><circle cx="1276.9" cy="1364.4" r="5.6"/><circle cx="1054.3" cy="1287.8" r="5.6"/><circle cx="1105.4" cy="1370.9" r="5.6"/><circle cx="1041.7" cy="1390.1" r="5.6"/><circle cx="1208.4" cy="1458.3" r="5.6"/><circle cx="1526.2" cy="1374.8" r="5.6"/><circle cx="1045.7" cy="1497.1" r="5.6"/><circle cx="1162.3" cy="1544.1" r="5.6"/><circle cx="970.6" cy="1412.1" r="5.6"/><circle cx="1324.5" cy="1403.3" r="5.6"/><circle cx="1556.9" cy="1213.5" r="5.6"/><circle cx="1514.6" cy="1494.6" r="5.6"/><circle cx="1109.1" cy="1394" r="5.6"/><circle cx="1511.5" cy="1356.6" r="5.6"/><circle cx="1131" cy="1325.9" r="5.6"/><circle cx="1040.7" cy="1407.9" r="5.6"/><circle cx="1125.8" cy="1462" r="5.6"/><circle cx="1110.6" cy="1408.7" r="5.6"/><circle cx="1114.6" cy="1251.5" r="5.6"/><circle cx="1440.4" cy="1374.2" r="5.6"/><circle cx="1238.8" cy="1569.1" r="5.6"/><circle cx="1257" cy="1302.4" r="5.6"/><circle cx="1213.5" cy="1369" r="5.6"/><circle cx="971.8" cy="1411.2" r="5.6"/><circle cx="992" cy="1408.2" r="5.6"/><circle cx="1216.7" cy="1417.7" r="5.6"/><circle cx="1291.7" cy="1395.6" r="5.6"/><circle cx="1214.6" cy="1448.3" r="5.6"/><circle cx="1004.3" cy="1384.7" r="5.6"/><circle cx="977.4" cy="1483.7" r="5.6"/><circle cx="970.9" cy="1393.1" r="5.6"/><circle cx="1103.8" cy="1319.2" r="5.6"/><circle cx="975.2" cy="1368.4" r="5.6"/><circle cx="1447.6" cy="1317.5" r="5.6"/><circle cx="991.7" cy="1496.8" r="5.6"/><circle cx="973.8" cy="1404.4" r="5.6"/><circle cx="1206.7" cy="1353.4" r="5.6"/><circle cx="1276.9" cy="1491.3" r="5.6"/><circle cx="1222" cy="1278.6" r="5.6"/><circle cx="1013" cy="1492.7" r="5.6"/><circle cx="1561" cy="1389.8" r="5.6"/><circle cx="1052.9" cy="1395.1" r="5.6"/><circle cx="1394.6" cy="1389.6" r="5.6"/><circle cx="1353.5" cy="1434.6" r="5.6"/><circle cx="986.7" cy="1374.6" r="5.6"/><circle cx="1282.5" cy="1487.2" r="5.6"/><circle cx="1026.3" cy="1513.7" r="5.6"/><circle cx="1230.1" cy="1467" r="5.6"/><circle cx="1194.7" cy="1415.7" r="5.6"/><circle cx="1111.7" cy="1316" r="5.6"/><circle cx="1054.5" cy="1287.9" r="5.6"/><circle cx="1098.3" cy="1380.4" r="5.6"/><circle cx="1418.3" cy="1388.8" r="5.6"/><circle cx="1009.2" cy="1428.6" r="5.6"/><circle cx="1337.3" cy="1402.7" r="5.6"/><circle cx="1448.8" cy="1509.4" r="5.6"/><circle cx="1147.3" cy="1380.8" r="5.6"/><circle cx="1334" cy="1444.4" r="5.6"/><circle cx="1310.2" cy="1389.8" r="5.6"/><circle cx="1034.9" cy="1440.1" r="5.6"/><circle cx="999.2" cy="1463.6" r="5.6"/><circle cx="1141.5" cy="1425.5" r="5.6"/><circle cx="1148.2" cy="1435.9" r="5.6"/><circle cx="1179.7" cy="1329.9" r="5.6"/><circle cx="1383.7" cy="1382.9" r="5.6"/><circle cx="1062.8" cy="1371.6" r="5.6"/><circle cx="1020.9" cy="1507.1" r="5.6"/><circle cx="1123.8" cy="1286.1" r="5.6"/><circle cx="1182.7" cy="1401.8" r="5.6"/><circle cx="1060.3" cy="1475" r="5.6"/><circle cx="1000.4" cy="1387.1" r="5.6"/><circle cx="1107.9" cy="1335.7" r="5.6"/><circle cx="971.8" cy="1518" r="5.6"/><circle cx="1230.7" cy="1270.3" r="5.6"/><circle cx="1232" cy="1413.8" r="5.6"/><circle cx="972.6" cy="1321.4" r="5.6"/><circle cx="1364.5" cy="1395.5" r="5.6"/><circle cx="1219.9" cy="1438.8" r="5.6"/><circle cx="1052.2" cy="1557.8" r="5.6"/><circle cx="1263.6" cy="1490.4" r="5.6"/><circle cx="1076.5" cy="1412.7" r="5.6"/><circle cx="1634.2" cy="1350.3" r="5.6"/><circle cx="1360" cy="1560.8" r="5.6"/><circle cx="1222.6" cy="1305" r="5.6"/><circle cx="1269.9" cy="1298.1" r="5.6"/><circle cx="1191.5" cy="1502.6" r="5.6"/><circle cx="1035" cy="1370.3" r="5.6"/><circle cx="1213.8" cy="1483.8" r="5.6"/><circle cx="1458.7" cy="1414.3" r="5.6"/><circle cx="1189.6" cy="1338.8" r="5.6"/><circle cx="1102.6" cy="1338.8" r="5.6"/><circle cx="1513.5" cy="1481.1" r="5.6"/><circle cx="975.1" cy="1439.6" r="5.6"/><circle cx="1026.3" cy="1487.6" r="5.6"/><circle cx="1074.9" cy="1386.7" r="5.6"/><circle cx="974.2" cy="1532.4" r="5.6"/><circle cx="1167.5" cy="1613.5" r="5.6"/><circle cx="1541.9" cy="1304.7" r="5.6"/><circle cx="1045.8" cy="1230.8" r="5.6"/><circle cx="1035.5" cy="1446.1" r="5.6"/><circle cx="1057.2" cy="1353.4" r="5.6"/><circle cx="1212.3" cy="1405.2" r="5.6"/><circle cx="1250.5" cy="1288" r="5.6"/><circle cx="1052.8" cy="1363.9" r="5.6"/><circle cx="1712.5" cy="1402.4" r="5.6"/><circle cx="1677.8" cy="1538.8" r="5.6"/><circle cx="977.5" cy="1325.3" r="5.6"/><circle cx="1066.6" cy="1435.3" r="5.6"/><circle cx="1059.5" cy="1516.5" r="5.6"/><circle cx="1265" cy="1423.2" r="5.6"/><circle cx="1038.1" cy="1415.3" r="5.6"/><circle cx="1041.9" cy="1325.2" r="5.6"/><circle cx="1023.3" cy="1498" r="5.6"/><circle cx="1104.3" cy="1458.6" r="5.6"/><circle cx="1106" cy="1289.8" r="5.6"/><circle cx="1000.3" cy="1305" r="5.6"/><circle cx="1747.5" cy="1309" r="5.6"/><circle cx="1273.4" cy="1285.3" r="5.6"/><circle cx="1097" cy="1393.2" r="5.6"/><circle cx="1040.2" cy="1451" r="5.6"/><circle cx="1013.5" cy="1362.4" r="5.6"/><circle cx="1083.1" cy="1326.8" r="5.6"/><circle cx="1310.1" cy="1226.7" r="5.6"/><circle cx="972" cy="1562.8" r="5.6"/><circle cx="1258.1" cy="1384.3" r="5.6"/><circle cx="1575.3" cy="1368.9" r="5.6"/><circle cx="987.9" cy="1412.5" r="5.6"/><circle cx="1270" cy="1527.5" r="5.6"/><circle cx="1256.3" cy="1353.4" r="5.6"/><circle cx="1107.4" cy="1474.5" r="5.6"/><circle cx="1280.1" cy="1370.6" r="5.6"/><circle cx="1334.6" cy="1328.9" r="5.6"/><circle cx="994.1" cy="1306.6" r="5.6"/><circle cx="1224.4" cy="1539.1" r="5.6"/><circle cx="1102.7" cy="1323.9" r="5.6"/><circle cx="1034.7" cy="1468.7" r="5.6"/><circle cx="1022.2" cy="1514" r="5.6"/><circle cx="1749.9" cy="1311.9" r="5.6"/><circle cx="1125" cy="1313.2" r="5.6"/><circle cx="1045.9" cy="1431.9" r="5.6"/><circle cx="1236.3" cy="1355" r="5.6"/><circle cx="1496.8" cy="1473.7" r="5.6"/><circle cx="1134.3" cy="1422.6" r="5.6"/><circle cx="1044.5" cy="1413" r="5.6"/><circle cx="1173" cy="1438.1" r="5.6"/><circle cx="1185.7" cy="1355.9" r="5.6"/><circle cx="1037.4" cy="1290.3" r="5.6"/><circle cx="1136.5" cy="1451.2" r="5.6"/><circle cx="1103.7" cy="1412.7" r="5.6"/><circle cx="1184.2" cy="1283.4" r="5.6"/><circle cx="1125.2" cy="1434.2" r="5.6"/><circle cx="1303.3" cy="1620.5" r="5.6"/><circle cx="1072.2" cy="1368.4" r="5.6"/><circle cx="1056.6" cy="1476.6" r="5.6"/><circle cx="1073.3" cy="1491.9" r="5.6"/><circle cx="975.1" cy="1296.2" r="5.6"/><circle cx="1154.2" cy="1216.9" r="5.6"/><circle cx="1013.2" cy="1491" r="5.6"/><circle cx="1156" cy="1322.7" r="5.6"/><circle cx="1261.3" cy="1413.7" r="5.6"/><circle cx="1157.7" cy="1402.5" r="5.6"/><circle cx="1902" cy="1321.9" r="5.6"/><circle cx="1012.6" cy="1391.5" r="5.6"/><circle cx="992.7" cy="1473.7" r="5.6"/><circle cx="1013.5" cy="1444.6" r="5.6"/><circle cx="1033.5" cy="1356.6" r="5.6"/><circle cx="1307.1" cy="1585.6" r="5.6"/><circle cx="1110.1" cy="1324" r="5.6"/><circle cx="1003.6" cy="1530.7" r="5.6"/><circle cx="1156.9" cy="1400.8" r="5.6"/><circle cx="1042" cy="1428.2" r="5.6"/><circle cx="992.1" cy="1309.5" r="5.6"/><circle cx="1778.1" cy="1380.6" r="5.6"/><circle cx="1117.5" cy="1403.6" r="5.6"/><circle cx="1253.6" cy="1346.4" r="5.6"/><circle cx="1279.6" cy="1482.7" r="5.6"/><circle cx="1083.1" cy="1427.6" r="5.6"/><circle cx="997.9" cy="1314.1" r="5.6"/><circle cx="1268.1" cy="1350.6" r="5.6"/><circle cx="1158.7" cy="1515.9" r="5.6"/><circle cx="1196.9" cy="1355.8" r="5.6"/><circle cx="1098.8" cy="1522.7" r="5.6"/><circle cx="1199.4" cy="1450.4" r="5.6"/><circle cx="1126.4" cy="1310.2" r="5.6"/><circle cx="1730.2" cy="1593.9" r="5.6"/><circle cx="1232.1" cy="1545.7" r="5.6"/><circle cx="1174.6" cy="1313.6" r="5.6"/><circle cx="1071.1" cy="1469.4" r="5.6"/><circle cx="1157.9" cy="1305.9" r="5.6"/><circle cx="1211.4" cy="1420.2" r="5.6"/><circle cx="1298" cy="1375" r="5.6"/><circle cx="1108.4" cy="1346.8" r="5.6"/><circle cx="1058.7" cy="1456.7" r="5.6"/><circle cx="1297.9" cy="1426" r="5.6"/><circle cx="1449" cy="1450.2" r="5.6"/><circle cx="1271.5" cy="1195.5" r="5.6"/><circle cx="1290.4" cy="1394.9" r="5.6"/><circle cx="1116.1" cy="1366.1" r="5.6"/><circle cx="1153.3" cy="1431.5" r="5.6"/><circle cx="1111" cy="1426.9" r="5.6"/><circle cx="1226.4" cy="1299.1" r="5.6"/><circle cx="2053" cy="1451.6" r="5.6"/><circle cx="1124" cy="1403.6" r="5.6"/><circle cx="1067.3" cy="1380" r="5.6"/><circle cx="998.4" cy="1443.1" r="5.6"/><circle cx="981.8" cy="1256.1" r="5.6"/><circle cx="1163.7" cy="1515.5" r="5.6"/><circle cx="998" cy="1253.4" r="5.6"/><circle cx="1270.9" cy="1437.9" r="5.6"/><circle cx="1094.9" cy="1302.1" r="5.6"/><circle cx="1104.2" cy="1571" r="5.6"/><circle cx="1155.7" cy="1327.3" r="5.6"/><circle cx="1296.8" cy="1333.5" r="5.6"/><circle cx="1489.2" cy="1498.7" r="5.6"/><circle cx="976.9" cy="1468.8" r="5.6"/><circle cx="1359.9" cy="1385.6" r="5.6"/><circle cx="1669.9" cy="1306.6" r="5.6"/><circle cx="1106.8" cy="1468.5" r="5.6"/><circle cx="1175.7" cy="1432" r="5.6"/><circle cx="986.1" cy="1287.3" r="5.6"/><circle cx="1006.3" cy="1497.7" r="5.6"/><circle cx="970.8" cy="1333.9" r="5.6"/><circle cx="1348.4" cy="1367.8" r="5.6"/><circle cx="1113.2" cy="1495.4" r="5.6"/><circle cx="1127" cy="1462.5" r="5.6"/><circle cx="1013.6" cy="1347.4" r="5.6"/><circle cx="1055.2" cy="1387.6" r="5.6"/><circle cx="1023.1" cy="1294.3" r="5.6"/><circle cx="1250.9" cy="1452.6" r="5.6"/><circle cx="1043.9" cy="1541.8" r="5.6"/><circle cx="1237.4" cy="1326.4" r="5.6"/><circle cx="1186.8" cy="1451.1" r="5.6"/><circle cx="1157.6" cy="1393.6" r="5.6"/><circle cx="1027.5" cy="1277.5" r="5.6"/><circle cx="1324.9" cy="1419.8" r="5.6"/><circle cx="1040.7" cy="1290.5" r="5.6"/><circle cx="1044.2" cy="1497.7" r="5.6"/><circle cx="1249.3" cy="1328.2" r="5.6"/><circle cx="1148.6" cy="1384.4" r="5.6"/><circle cx="1321.9" cy="1475.2" r="5.6"/><circle cx="1110.9" cy="1515.4" r="5.6"/><circle cx="1326.3" cy="1411.8" r="5.6"/><circle cx="1189.3" cy="1391.3" r="5.6"/><circle cx="1023" cy="1385.2" r="5.6"/><circle cx="1009.4" cy="1366.4" r="5.6"/><circle cx="1159.7" cy="1440.4" r="5.6"/><circle cx="1168.7" cy="1454.7" r="5.6"/><circle cx="1115.4" cy="1396.3" r="5.6"/><circle cx="1141.9" cy="1448.8" r="5.6"/><circle cx="1070.6" cy="1308.5" r="5.6"/><circle cx="1257.4" cy="1403.6" r="5.6"/><circle cx="971.6" cy="1457.8" r="5.6"/><circle cx="1088.5" cy="1556.5" r="5.6"/><circle cx="1546.6" cy="1471.4" r="5.6"/><circle cx="1170" cy="1250.3" r="5.6"/><circle cx="970.9" cy="1453.9" r="5.6"/><circle cx="1112.4" cy="1473" r="5.6"/><circle cx="1038.5" cy="1355.2" r="5.6"/><circle cx="1217.8" cy="1367.8" r="5.6"/><circle cx="1057.5" cy="1347.3" r="5.6"/><circle cx="1076.2" cy="1435.5" r="5.6"/><circle cx="1051.2" cy="1325.1" r="5.6"/><circle cx="973.7" cy="1501.7" r="5.6"/><circle cx="1000.1" cy="1412.6" r="5.6"/><circle cx="1089.8" cy="1469.6" r="5.6"/><circle cx="1007.5" cy="1355.3" r="5.6"/><circle cx="1152.4" cy="1396.5" r="5.6"/><circle cx="993.7" cy="1323.4" r="5.6"/><circle cx="1120.5" cy="1252.3" r="5.6"/><circle cx="1102.3" cy="1397.1" r="5.6"/><circle cx="1112.7" cy="1445.5" r="5.6"/><circle cx="1260.4" cy="1474.8" r="5.6"/><circle cx="1148.9" cy="1423.4" r="5.6"/><circle cx="1189.8" cy="1411.1" r="5.6"/><circle cx="986.4" cy="1250.9" r="5.6"/><circle cx="1259.3" cy="1503.8" r="5.6"/><circle cx="1159.8" cy="1495" r="5.6"/><circle cx="1001.7" cy="1443.9" r="5.6"/><circle cx="1227.8" cy="1370.6" r="5.6"/><circle cx="970.2" cy="1344.1" r="5.6"/><circle cx="1576" cy="1474.9" r="5.6"/><circle cx="1244" cy="1392.7" r="5.6"/><circle cx="1110.1" cy="1407.2" r="5.6"/><circle cx="1078.8" cy="1315.5" r="5.6"/><circle cx="1184.4" cy="1328.9" r="5.6"/><circle cx="1175.5" cy="1437.5" r="5.6"/><circle cx="1099.9" cy="1409" r="5.6"/><circle cx="1137.6" cy="1357.5" r="5.6"/><circle cx="1082.6" cy="1537.7" r="5.6"/><circle cx="1215.7" cy="1440.9" r="5.6"/><circle cx="1076.2" cy="1361.2" r="5.6"/><circle cx="1246.3" cy="1449.3" r="5.6"/><circle cx="1139" cy="1418.6" r="5.6"/><circle cx="1264.3" cy="1411.2" r="5.6"/><circle cx="1596.1" cy="1454.9" r="5.6"/><circle cx="1114.5" cy="1487.8" r="5.6"/><circle cx="1051.4" cy="1421.7" r="5.6"/><circle cx="1177.4" cy="1437.7" r="5.6"/><circle cx="1097.1" cy="1338.6" r="5.6"/><circle cx="984.1" cy="1287.1" r="5.6"/><circle cx="1378.8" cy="1404.9" r="5.6"/><circle cx="1208.3" cy="1384.9" r="5.6"/><circle cx="971.5" cy="1414.7" r="5.6"/><circle cx="1113.1" cy="1362.1" r="5.6"/><circle cx="974.5" cy="1392.7" r="5.6"/><circle cx="1097.7" cy="1391.6" r="5.6"/><circle cx="1085.4" cy="1324.1" r="5.6"/><circle cx="1166.2" cy="1486.9" r="5.6"/><circle cx="1101.7" cy="1299.9" r="5.6"/><circle cx="1206.1" cy="1374.5" r="5.6"/><circle cx="1123.8" cy="1400.2" r="5.6"/><circle cx="1107.2" cy="1455.2" r="5.6"/><circle cx="1295.5" cy="1416.2" r="5.6"/><circle cx="1049.8" cy="1375.8" r="5.6"/><circle cx="1187" cy="1570.1" r="5.6"/><circle cx="1098.6" cy="1458.5" r="5.6"/><circle cx="1065.8" cy="1358.5" r="5.6"/><circle cx="1203" cy="1439.3" r="5.6"/><circle cx="1048.6" cy="1475" r="5.6"/><circle cx="981.4" cy="1457.4" r="5.6"/><circle cx="1169.9" cy="1390" r="5.6"/><circle cx="1445.1" cy="1528.5" r="5.6"/><circle cx="1298.8" cy="1334.1" r="5.6"/><circle cx="1188" cy="1576.6" r="5.6"/><circle cx="1236.8" cy="1454.7" r="5.6"/><circle cx="1053.9" cy="1472.9" r="5.6"/><circle cx="1055.8" cy="1510.6" r="5.6"/><circle cx="1167.5" cy="1491.7" r="5.6"/><circle cx="1396.3" cy="1398.2" r="5.6"/><circle cx="1152.3" cy="1413.8" r="5.6"/><circle cx="1087.9" cy="1437.5" r="5.6"/><circle cx="980.8" cy="1593.2" r="5.6"/><circle cx="1212.1" cy="1514.8" r="5.6"/><circle cx="1168.9" cy="1425.4" r="5.6"/><circle cx="1004.3" cy="1475.8" r="5.6"/><circle cx="1172.2" cy="1477.1" r="5.6"/><circle cx="1828" cy="1339.5" r="5.6"/><circle cx="1097.6" cy="1395.4" r="5.6"/><circle cx="1060.1" cy="1488.4" r="5.6"/><circle cx="1168.4" cy="1444.6" r="5.6"/><circle cx="1112.7" cy="1427.1" r="5.6"/><circle cx="1268.1" cy="1470.5" r="5.6"/><circle cx="971.4" cy="1485.4" r="5.6"/><circle cx="1483.8" cy="1424.1" r="5.6"/><circle cx="1233.4" cy="1347.7" r="5.6"/><circle cx="1389" cy="1381.4" r="5.6"/><circle cx="1184.6" cy="1418.1" r="5.6"/><circle cx="987.4" cy="1379.7" r="5.6"/><circle cx="988.2" cy="1346" r="5.6"/><circle cx="1415" cy="1429.9" r="5.6"/><circle cx="1209.4" cy="1367.1" r="5.6"/><circle cx="1115.9" cy="1497.9" r="5.6"/><circle cx="1043" cy="1432.8" r="5.6"/><circle cx="1299.6" cy="1446.5" r="5.6"/><circle cx="1014.3" cy="1396.3" r="5.6"/><circle cx="1049.3" cy="1385.1" r="5.6"/><circle cx="1061.6" cy="1422.4" r="5.6"/><circle cx="1160.6" cy="1473.9" r="5.6"/><circle cx="1463.7" cy="1472" r="5.6"/><circle cx="980.3" cy="1386.7" r="5.6"/><circle cx="1090.3" cy="1297.8" r="5.6"/><circle cx="1784.7" cy="1485" r="5.6"/><circle cx="1120.7" cy="1439.2" r="5.6"/><circle cx="1030.6" cy="1386.9" r="5.6"/><circle cx="1133.1" cy="1458.4" r="5.6"/><circle cx="1443.9" cy="1395.6" r="5.6"/><circle cx="1407" cy="1422.3" r="5.6"/><circle cx="1127.6" cy="1466.4" r="5.6"/><circle cx="1090.4" cy="1338.6" r="5.6"/><circle cx="1020.2" cy="1343.2" r="5.6"/><circle cx="1144.2" cy="1334.5" r="5.6"/><circle cx="1060.3" cy="1305.2" r="5.6"/><circle cx="1063.2" cy="1446.3" r="5.6"/><circle cx="1223.7" cy="1448.3" r="5.6"/><circle cx="1216.3" cy="1393.7" r="5.6"/><circle cx="1697.2" cy="1346.7" r="5.6"/><circle cx="1058.5" cy="1440.2" r="5.6"/><circle cx="1427.1" cy="1452.8" r="5.6"/><circle cx="1076.7" cy="1453.6" r="5.6"/><circle cx="979.5" cy="1291" r="5.6"/><circle cx="1413.1" cy="1609.8" r="5.6"/><circle cx="1563.3" cy="1428.5" r="5.6"/><circle cx="1167.3" cy="1409.5" r="5.6"/><circle cx="1118.3" cy="1488.2" r="5.6"/><circle cx="1033.3" cy="1377" r="5.6"/><circle cx="998" cy="1565.9" r="5.6"/><circle cx="1102" cy="1336.3" r="5.6"/><circle cx="1219.3" cy="1542.1" r="5.6"/><circle cx="1250.7" cy="1578.6" r="5.6"/><circle cx="1139.7" cy="1464.1" r="5.6"/><circle cx="1265.8" cy="1401.6" r="5.6"/><circle cx="1159.4" cy="1458.5" r="5.6"/><circle cx="1362.2" cy="1460.6" r="5.6"/><circle cx="1050" cy="1382.8" r="5.6"/><circle cx="1032.6" cy="1489.7" r="5.6"/><circle cx="1301.3" cy="1408.4" r="5.6"/><circle cx="1501.3" cy="1380.9" r="5.6"/><circle cx="1148.9" cy="1282.8" r="5.6"/><circle cx="1190.8" cy="1371.4" r="5.6"/><circle cx="1479.2" cy="1277.2" r="5.6"/><circle cx="1075.5" cy="1369.5" r="5.6"/><circle cx="1061.2" cy="1414" r="5.6"/><circle cx="1101.8" cy="1581.1" r="5.6"/><circle cx="1050.8" cy="1504.6" r="5.6"/><circle cx="1292.2" cy="1427.6" r="5.6"/><circle cx="1000.7" cy="1353.7" r="5.6"/><circle cx="1138" cy="1428.7" r="5.6"/><circle cx="1236" cy="1358.5" r="5.6"/><circle cx="1435.5" cy="1485.7" r="5.6"/><circle cx="1095.2" cy="1428.6" r="5.6"/><circle cx="1528.9" cy="1401.6" r="5.6"/><circle cx="1011.3" cy="1438.6" r="5.6"/><circle cx="981.5" cy="1398.8" r="5.6"/><circle cx="974.4" cy="1463" r="5.6"/><circle cx="1004.2" cy="1376.9" r="5.6"/><circle cx="1251.1" cy="1408.3" r="5.6"/><circle cx="1264.2" cy="1412" r="5.6"/><circle cx="1113.9" cy="1561.5" r="5.6"/><circle cx="1093.5" cy="1462.5" r="5.6"/><circle cx="1156" cy="1526.4" r="5.6"/><circle cx="1191.6" cy="1532.2" r="5.6"/><circle cx="1643.4" cy="1453.8" r="5.6"/><circle cx="1113.4" cy="1426.4" r="5.6"/><circle cx="1325.9" cy="1395.4" r="5.6"/><circle cx="1082" cy="1326" r="5.6"/><circle cx="1025.6" cy="1377" r="5.6"/><circle cx="992.6" cy="1327.3" r="5.6"/><circle cx="1097.7" cy="1445.1" r="5.6"/><circle cx="1260.5" cy="1439.8" r="5.6"/><circle cx="1315.5" cy="1331.3" r="5.6"/><circle cx="1143.3" cy="1412.3" r="5.6"/><circle cx="1056" cy="1544.9" r="5.6"/><circle cx="1072.4" cy="1474.9" r="5.6"/><circle cx="1228.9" cy="1330.8" r="5.6"/><circle cx="1210.9" cy="1455.7" r="5.6"/><circle cx="1751.7" cy="1395.9" r="5.6"/><circle cx="1072" cy="1406.5" r="5.6"/><circle cx="1159.1" cy="1441.6" r="5.6"/><circle cx="1299.2" cy="1428.7" r="5.6"/><circle cx="1048.4" cy="1382.6" r="5.6"/><circle cx="1266.2" cy="1400.9" r="5.6"/><circle cx="1890.7" cy="1303.9" r="5.6"/><circle cx="1085.6" cy="1423.5" r="5.6"/><circle cx="1095.3" cy="1484.5" r="5.6"/><circle cx="1003.5" cy="1395.1" r="5.6"/><circle cx="1559" cy="1364.4" r="5.6"/><circle cx="1031.3" cy="1232.6" r="5.6"/><circle cx="1296.7" cy="1454.3" r="5.6"/><circle cx="1237.6" cy="1435.1" r="5.6"/><circle cx="991.1" cy="1340.2" r="5.6"/><circle cx="1265.4" cy="1312.5" r="5.6"/><circle cx="1217.8" cy="1461.3" r="5.6"/><circle cx="1096.3" cy="1357.8" r="5.6"/><circle cx="1222.6" cy="1460.3" r="5.6"/><circle cx="1097.1" cy="1486.1" r="5.6"/><circle cx="1035.4" cy="1356.2" r="5.6"/><circle cx="1359.6" cy="1399.3" r="5.6"/><circle cx="974.5" cy="1379.6" r="5.6"/><circle cx="970.1" cy="1455.3" r="5.6"/><circle cx="999.3" cy="1267.3" r="5.6"/><circle cx="1425.9" cy="1347.1" r="5.6"/><circle cx="1298.4" cy="1436.4" r="5.6"/><circle cx="1139.2" cy="1348.1" r="5.6"/><circle cx="1027.4" cy="1504.6" r="5.6"/><circle cx="1013" cy="1419.5" r="5.6"/><circle cx="990.1" cy="1297.5" r="5.6"/><circle cx="1372.4" cy="1432.2" r="5.6"/><circle cx="1473.4" cy="1342.5" r="5.6"/><circle cx="1012.7" cy="1424" r="5.6"/><circle cx="1449.4" cy="1600.2" r="5.6"/><circle cx="1141.6" cy="1481.1" r="5.6"/><circle cx="1176.1" cy="1393.4" r="5.6"/><circle cx="1095" cy="1294.8" r="5.6"/><circle cx="1108.4" cy="1452.7" r="5.6"/><circle cx="1199.3" cy="1388.1" r="5.6"/><circle cx="1254.1" cy="1478" r="5.6"/><circle cx="1293.6" cy="1480.8" r="5.6"/><circle cx="1140.5" cy="1468.3" r="5.6"/><circle cx="1595.9" cy="1313" r="5.6"/><circle cx="1181.7" cy="1328.3" r="5.6"/><circle cx="1088.9" cy="1364.9" r="5.6"/><circle cx="997.9" cy="1318.9" r="5.6"/><circle cx="1046.1" cy="1441" r="5.6"/><circle cx="1054.1" cy="1351.7" r="5.6"/><circle cx="1012.1" cy="1394.4" r="5.6"/><circle cx="1220.4" cy="1489.6" r="5.6"/><circle cx="1065.9" cy="1470" r="5.6"/><circle cx="1198.5" cy="1398.5" r="5.6"/><circle cx="1786.7" cy="1379.2" r="5.6"/><circle cx="1307.6" cy="1428" r="5.6"/><circle cx="1172.3" cy="1489.5" r="5.6"/><circle cx="1619.6" cy="1586.3" r="5.6"/><circle cx="1972.1" cy="1360.3" r="5.6"/><circle cx="1186.1" cy="1431.8" r="5.6"/><circle cx="1707" cy="1352.7" r="5.6"/><circle cx="983.5" cy="1529.3" r="5.6"/><circle cx="1279.5" cy="1502.5" r="5.6"/><circle cx="1148" cy="1415.8" r="5.6"/><circle cx="1190.8" cy="1515.3" r="5.6"/><circle cx="976.4" cy="1564.5" r="5.6"/><circle cx="1025.8" cy="1346.9" r="5.6"/><circle cx="974.9" cy="1338.5" r="5.6"/><circle cx="1259.7" cy="1483" r="5.6"/><circle cx="1195.9" cy="1434.5" r="5.6"/><circle cx="1495.7" cy="1509.6" r="5.6"/><circle cx="975.2" cy="1384.9" r="5.6"/><circle cx="1033.8" cy="1410.3" r="5.6"/><circle cx="1063.9" cy="1473.3" r="5.6"/><circle cx="1039.2" cy="1468.4" r="5.6"/><circle cx="1296.1" cy="1499.7" r="5.6"/><circle cx="1017.7" cy="1374.4" r="5.6"/><circle cx="1076.2" cy="1359.2" r="5.6"/><circle cx="1189.9" cy="1375.2" r="5.6"/><circle cx="1032.4" cy="1475" r="5.6"/><circle cx="1053.5" cy="1552.9" r="5.6"/><circle cx="1205.7" cy="1361.1" r="5.6"/><circle cx="1535.3" cy="1427.4" r="5.6"/><circle cx="1012.5" cy="1413.3" r="5.6"/><circle cx="994.2" cy="1325.5" r="5.6"/><circle cx="1262.9" cy="1486.3" r="5.6"/><circle cx="978.7" cy="1318.3" r="5.6"/><circle cx="1491.6" cy="1435.8" r="5.6"/><circle cx="1056.8" cy="1467.2" r="5.6"/><circle cx="1207.1" cy="1423.6" r="5.6"/><circle cx="1173.3" cy="1373.6" r="5.6"/><circle cx="1021.1" cy="1425.4" r="5.6"/><circle cx="1083.9" cy="1475" r="5.6"/><circle cx="1117" cy="1428.9" r="5.6"/><circle cx="1125.9" cy="1606.7" r="5.6"/><circle cx="1413.5" cy="1458" r="5.6"/><circle cx="1323.8" cy="1381.8" r="5.6"/><circle cx="1018.4" cy="1425.8" r="5.6"/><circle cx="1226.8" cy="1354.2" r="5.6"/><circle cx="1664" cy="1376.3" r="5.6"/><circle cx="1466.1" cy="1368.9" r="5.6"/><circle cx="1227.9" cy="1363.4" r="5.6"/><circle cx="1172" cy="1541.5" r="5.6"/><circle cx="1062.1" cy="1412.8" r="5.6"/><circle cx="1085.3" cy="1278.1" r="5.6"/><circle cx="981.1" cy="1445.2" r="5.6"/><circle cx="1148.3" cy="1377" r="5.6"/><circle cx="1050.8" cy="1393.5" r="5.6"/><circle cx="988.9" cy="1364.1" r="5.6"/><circle cx="1022.5" cy="1433.7" r="5.6"/><circle cx="1030.4" cy="1457.6" r="5.6"/><circle cx="1197.8" cy="1403.4" r="5.6"/><circle cx="1142.9" cy="1388.7" r="5.6"/><circle cx="1022.4" cy="1427.2" r="5.6"/><circle cx="1122.1" cy="1401.1" r="5.6"/><circle cx="1337.9" cy="1368.5" r="5.6"/><circle cx="1060.8" cy="1470.9" r="5.6"/><circle cx="984.7" cy="1319.7" r="5.6"/><circle cx="1003.3" cy="1235.3" r="5.6"/><circle cx="1654" cy="1285.7" r="5.6"/><circle cx="986" cy="1444.3" r="5.6"/><circle cx="1220.5" cy="1556.6" r="5.6"/><circle cx="1868.6" cy="1419.3" r="5.6"/><circle cx="1248.6" cy="1346.2" r="5.6"/><circle cx="1029.7" cy="1349.9" r="5.6"/><circle cx="1104.8" cy="1507.3" r="5.6"/><circle cx="1186.6" cy="1498.5" r="5.6"/><circle cx="1210.2" cy="1392.3" r="5.6"/><circle cx="1226.1" cy="1357.6" r="5.6"/><circle cx="1407.7" cy="1338.3" r="5.6"/><circle cx="1075.8" cy="1348.4" r="5.6"/><circle cx="1189.3" cy="1492.4" r="5.6"/><circle cx="1136.2" cy="1518.3" r="5.6"/><circle cx="1042" cy="1563.3" r="5.6"/><circle cx="1029.9" cy="1371.4" r="5.6"/><circle cx="1207.1" cy="1343.1" r="5.6"/><circle cx="1151.1" cy="1381.3" r="5.6"/><circle cx="1028.3" cy="1494.3" r="5.6"/><circle cx="1091.1" cy="1289.6" r="5.6"/><circle cx="1431.9" cy="1444.8" r="5.6"/><circle cx="1140.1" cy="1275.4" r="5.6"/><circle cx="1211.2" cy="1371.5" r="5.6"/><circle cx="1095.9" cy="1311.5" r="5.6"/><circle cx="1015.1" cy="1386.4" r="5.6"/><circle cx="1077.4" cy="1412.1" r="5.6"/><circle cx="1324.1" cy="1484.3" r="5.6"/><circle cx="975.8" cy="1453.7" r="5.6"/><circle cx="997.5" cy="1410.7" r="5.6"/><circle cx="1442.1" cy="1397.3" r="5.6"/><circle cx="1043.8" cy="1415.6" r="5.6"/><circle cx="1041.6" cy="1424.7" r="5.6"/><circle cx="1127.2" cy="1395.9" r="5.6"/><circle cx="1036.6" cy="1453.5" r="5.6"/><circle cx="1745.5" cy="1438.5" r="5.6"/><circle cx="1148.7" cy="1528.3" r="5.6"/><circle cx="1033.2" cy="1343.9" r="5.6"/><circle cx="1027.2" cy="1403.4" r="5.6"/><circle cx="1019.1" cy="1417.3" r="5.6"/><circle cx="1095" cy="1472.2" r="5.6"/><circle cx="1155.4" cy="1422.3" r="5.6"/><circle cx="1309.5" cy="1485.8" r="5.6"/><circle cx="1079.1" cy="1489.8" r="5.6"/><circle cx="1239.8" cy="1560.9" r="5.6"/><circle cx="1033.5" cy="1330.8" r="5.6"/><circle cx="1075.9" cy="1394.6" r="5.6"/><circle cx="1369.3" cy="1499.2" r="5.6"/><circle cx="1638.1" cy="1308.9" r="5.6"/><circle cx="1019.7" cy="1362.2" r="5.6"/><circle cx="1202.4" cy="1357.1" r="5.6"/><circle cx="1216.5" cy="1431.6" r="5.6"/><circle cx="985.5" cy="1441" r="5.6"/><circle cx="1313.7" cy="1411.2" r="5.6"/><circle cx="1150.2" cy="1375.2" r="5.6"/><circle cx="1075.6" cy="1343.6" r="5.6"/><circle cx="1410.2" cy="1287.2" r="5.6"/><circle cx="1083.9" cy="1452" r="5.6"/><circle cx="1015.1" cy="1491.1" r="5.6"/><circle cx="1734.7" cy="1391.5" r="5.6"/><circle cx="1379.8" cy="1180.7" r="5.6"/><circle cx="1326.8" cy="1440.9" r="5.6"/><circle cx="1297.7" cy="1317.9" r="5.6"/><circle cx="1281.2" cy="1419.9" r="5.6"/><circle cx="1140.4" cy="1453.1" r="5.6"/><circle cx="1168.1" cy="1461.6" r="5.6"/><circle cx="1380.7" cy="1427.4" r="5.6"/><circle cx="1209.4" cy="1273.3" r="5.6"/><circle cx="1268" cy="1380.4" r="5.6"/><circle cx="1511.8" cy="1364.4" r="5.6"/><circle cx="1073.7" cy="1338.3" r="5.6"/><circle cx="1399.5" cy="1235.9" r="5.6"/><circle cx="1216.3" cy="1340.6" r="5.6"/><circle cx="1230.4" cy="1525.4" r="5.6"/><circle cx="991.6" cy="1488.3" r="5.6"/><circle cx="1123.9" cy="1540.1" r="5.6"/><circle cx="1188.4" cy="1637.2" r="5.6"/><circle cx="1136.8" cy="1302.8" r="5.6"/><circle cx="1069.1" cy="1443.9" r="5.6"/><circle cx="1204.1" cy="1379" r="5.6"/><circle cx="1147.5" cy="1322.4" r="5.6"/><circle cx="1260" cy="1449" r="5.6"/><circle cx="1058.3" cy="1424.3" r="5.6"/><circle cx="1136.4" cy="1382.3" r="5.6"/><circle cx="1248.1" cy="1393.2" r="5.6"/><circle cx="1249.7" cy="1470.8" r="5.6"/><circle cx="1355.2" cy="1353.5" r="5.6"/><circle cx="1463" cy="1355.5" r="5.6"/><circle cx="1272.1" cy="1426.4" r="5.6"/><circle cx="1037.1" cy="1507.8" r="5.6"/><circle cx="1028.1" cy="1359.8" r="5.6"/><circle cx="1014.8" cy="1299.6" r="5.6"/><circle cx="982.6" cy="1298.8" r="5.6"/><circle cx="1191.1" cy="1336.4" r="5.6"/><circle cx="1362" cy="1455.2" r="5.6"/><circle cx="1044.1" cy="1455" r="5.6"/><circle cx="1035.1" cy="1455.6" r="5.6"/><circle cx="1313.6" cy="1432.6" r="5.6"/><circle cx="1198.9" cy="1350.6" r="5.6"/><circle cx="1035.2" cy="1392.8" r="5.6"/><circle cx="1240.7" cy="1554.5" r="5.6"/><circle cx="982.1" cy="1555" r="5.6"/><circle cx="1023.1" cy="1408.3" r="5.6"/><circle cx="1041.2" cy="1397.9" r="5.6"/><circle cx="1708.3" cy="1580.9" r="5.6"/><circle cx="1126.8" cy="1478.4" r="5.6"/><circle cx="1086.7" cy="1408.7" r="5.6"/><circle cx="1353.8" cy="1300.8" r="5.6"/><circle cx="1213.1" cy="1567.9" r="5.6"/><circle cx="1112.5" cy="1503.9" r="5.6"/><circle cx="1276.1" cy="1489.6" r="5.6"/><circle cx="1438.1" cy="1405.7" r="5.6"/><circle cx="1017.9" cy="1382.5" r="5.6"/><circle cx="1280.9" cy="1428.6" r="5.6"/><circle cx="1101.7" cy="1535.8" r="5.6"/><circle cx="987" cy="1460.4" r="5.6"/><circle cx="1058.2" cy="1455.3" r="5.6"/><circle cx="1068.2" cy="1421.6" r="5.6"/><circle cx="1057.6" cy="1279.9" r="5.6"/><circle cx="1362.6" cy="1453.6" r="5.6"/><circle cx="1040.7" cy="1405.3" r="5.6"/><circle cx="1216.1" cy="1467" r="5.6"/><circle cx="1649" cy="1496.8" r="5.6"/><circle cx="1021.2" cy="1358.4" r="5.6"/><circle cx="979.9" cy="1490.4" r="5.6"/><circle cx="1318" cy="1197.3" r="5.6"/><circle cx="969.9" cy="1401.7" r="5.6"/><circle cx="1175.1" cy="1402.6" r="5.6"/><circle cx="1049.4" cy="1416.3" r="5.6"/><circle cx="1026.5" cy="1265.9" r="5.6"/><circle cx="1028.5" cy="1360.6" r="5.6"/><circle cx="1041.9" cy="1431.4" r="5.6"/><circle cx="1080.8" cy="1499.8" r="5.6"/><circle cx="1165.1" cy="1485" r="5.6"/><circle cx="1100.6" cy="1465.4" r="5.6"/><circle cx="1149.3" cy="1317.8" r="5.6"/><circle cx="1468.9" cy="1428.9" r="5.6"/><circle cx="1274.9" cy="1469.6" r="5.6"/><circle cx="1125.8" cy="1346.6" r="5.6"/><circle cx="1204.3" cy="1305.9" r="5.6"/><circle cx="1021.3" cy="1466.4" r="5.6"/><circle cx="1424.7" cy="1436.3" r="5.6"/><circle cx="1239" cy="1380" r="5.6"/><circle cx="1131.2" cy="1414.9" r="5.6"/><circle cx="1223" cy="1374.6" r="5.6"/><circle cx="1100.8" cy="1279.8" r="5.6"/><circle cx="1135.3" cy="1415.8" r="5.6"/><circle cx="1087.9" cy="1428.1" r="5.6"/><circle cx="1040.2" cy="1367.9" r="5.6"/><circle cx="1431.7" cy="1423.1" r="5.6"/><circle cx="1243.1" cy="1355.5" r="5.6"/><circle cx="1075.9" cy="1427.4" r="5.6"/><circle cx="1191" cy="1380.5" r="5.6"/><circle cx="1285.7" cy="1525" r="5.6"/><circle cx="1231.8" cy="1407.4" r="5.6"/><circle cx="1656.8" cy="1437.2" r="5.6"/><circle cx="1045.8" cy="1503.9" r="5.6"/><circle cx="974.5" cy="1441" r="5.6"/><circle cx="1005.7" cy="1380.7" r="5.6"/><circle cx="1088.7" cy="1399.4" r="5.6"/><circle cx="1533.9" cy="1365.7" r="5.6"/><circle cx="1509.4" cy="1339.5" r="5.6"/><circle cx="1064.8" cy="1342.4" r="5.6"/><circle cx="1073.6" cy="1435.7" r="5.6"/><circle cx="1057.7" cy="1515.3" r="5.6"/><circle cx="1464.4" cy="1440.1" r="5.6"/><circle cx="1268.2" cy="1322.4" r="5.6"/><circle cx="1312.7" cy="1420.8" r="5.6"/><circle cx="1069.4" cy="1533.5" r="5.6"/><circle cx="1103.6" cy="1375.2" r="5.6"/><circle cx="1340.2" cy="1394.1" r="5.6"/><circle cx="1126.2" cy="1437.8" r="5.6"/><circle cx="1121.5" cy="1399.4" r="5.6"/><circle cx="1242.8" cy="1297.4" r="5.6"/><circle cx="1614.8" cy="1298.2" r="5.6"/><circle cx="1192.5" cy="1448.3" r="5.6"/><circle cx="1141.8" cy="1407.2" r="5.6"/><circle cx="1113.2" cy="1523.8" r="5.6"/><circle cx="1314.1" cy="1457.6" r="5.6"/><circle cx="1274.5" cy="1257.6" r="5.6"/><circle cx="1266.8" cy="1295.1" r="5.6"/><circle cx="1078.7" cy="1422.3" r="5.6"/><circle cx="1246.6" cy="1466" r="5.6"/><circle cx="1284.1" cy="1510.4" r="5.6"/><circle cx="1023.6" cy="1239.5" r="5.6"/><circle cx="1122.5" cy="1404" r="5.6"/><circle cx="1109.5" cy="1456.1" r="5.6"/><circle cx="1030.8" cy="1323.8" r="5.6"/><circle cx="1125" cy="1496.7" r="5.6"/><circle cx="1130.5" cy="1349.9" r="5.6"/><circle cx="1243.8" cy="1293.4" r="5.6"/><circle cx="1388" cy="1428.9" r="5.6"/><circle cx="1004.2" cy="1297" r="5.6"/><circle cx="1017.8" cy="1361.2" r="5.6"/></g><path d="M969.4,1403.1 L970.6,1403.2 L971.8,1403.3 L974.4,1403.5 L975.2,1403.6 L977.5,1403.8 L980.8,1404 L983,1404.2 L986,1404.5 L987.9,1404.6 L992,1405 L994.2,1405.1 L998,1405.4 L1000.4,1405.6 L1004.1,1405.9 L1006.3,1406.1 L1011,1406.4 L1013.2,1406.6 L1015.1,1406.7 L1020.9,1407.1 L1022.5,1407.3 L1025.8,1407.5 L1027.4,1407.6 L1029,1407.7 L1032.4,1407.9 L1033.8,1408 L1035.5,1408.1 L1040.2,1408.4 L1041.7,1408.6 L1044.1,1408.7 L1046.1,1408.8 L1049.3,1409.1 L1051.4,1409.2 L1054.1,1409.4 L1056.6,1409.5 L1058.2,1409.6 L1059.8,1409.7 L1062,1409.9 L1065.8,1410.2 L1068.5,1410.4 L1071.5,1410.6 L1074.6,1410.8 L1075.9,1410.9 L1078.8,1411.2 L1083.1,1411.5 L1085.4,1411.7 L1088.9,1411.9 L1095,1412.3 L1097.1,1412.3 L1099.9,1412.3 L1101.7,1412.2 L1103.7,1412.2 L1105.6,1412.2 L1108.4,1412.2 L1110.9,1412.1 L1113.1,1412.1 L1115.4,1412.1 L1118,1412 L1122.5,1411.9 L1125.2,1411.9 L1127.2,1411.8 L1133.1,1411.7 L1136.8,1411.6 L1140.5,1411.5 L1143.3,1411.4 L1148,1411.3 L1149.3,1411.2 L1154,1411.1 L1157.7,1411.1 L1159.8,1411 L1164.2,1411 L1167.5,1411.1 L1172,1411.1 L1175.7,1411.1 L1183,1411.2 L1187,1411.3 L1190.3,1411.3 L1191.6,1411.3 L1196.9,1411.3 L1199.3,1411.3 L1203,1411.2 L1208.3,1411.2 L1211.2,1411.1 L1215.5,1411 L1217.8,1411 L1222,1410.9 L1224.4,1410.8 L1228.9,1410.7 L1233.4,1410.6 L1238.5,1410.4 L1243.8,1410.3 L1248.6,1410.1 L1251.1,1410.1 L1257.4,1409.9 L1260.5,1409.8 L1265.4,1409.7 L1268.2,1409.6 L1272.1,1409.6 L1276.3,1409.5 L1281.2,1409.4 L1286.5,1409.3 L1292.2,1409.2 L1297.4,1409.1 L1299.6,1409.1 L1309.5,1409 L1314.1,1409 L1324.1,1408.9 L1334,1408.7 L1348.9,1408.3 L1362,1407.9 L1376.3,1407.4 L1388.6,1407 L1407.7,1406.3 L1425.9,1405.7 L1440.4,1405.3 L1451.1,1405 L1466.1,1404.6 L1482.4,1404.3 L1509.4,1403.7 L1535.3,1402.8 L1575.3,1401 L1629.2,1398.6 L1669.9,1397.7 L1734.7,1397.1 L1786.7,1396.9 L2121.7,1393.5" fill="none" stroke="#df536b" stroke-width="1.6" opacity="1"/><rect x="813.5" y="1093" width="1358.5" height="622" fill="none" stroke="#000" stroke-width="1.6"/><path d="M863.8,1715V1729M1073.9,1715V1729M1283.9,1715V1729M1494,1715V1729M1704,1715V1729M1914.1,1715V1729M2124.1,1715V1729M813.5,1564H799.5M813.5,1409.3H799.5M813.5,1254.7H799.5M813.5,1100H799.5" stroke="#000" stroke-width="1.6"/><text x="863.8" y="1764" font-family="Liberation Sans" fill="#000" font-size="22.3" text-anchor="middle">0.000</text><text x="1073.9" y="1764" font-family="Liberation Sans" fill="#000" font-size="22.3" text-anchor="middle">0.002</text><text x="1283.9" y="1764" font-family="Liberation Sans" fill="#000" font-size="22.3" text-anchor="middle">0.004</text><text x="1494" y="1764" font-family="Liberation Sans" fill="#000" font-size="22.3" text-anchor="middle">0.006</text><text x="1704" y="1764" font-family="Liberation Sans" fill="#000" font-size="22.3" text-anchor="middle">0.008</text><text x="1914.1" y="1764" font-family="Liberation Sans" fill="#000" font-size="22.3" text-anchor="middle">0.010</text><text x="2124.1" y="1764" font-family="Liberation Sans" fill="#000" font-size="22.3" text-anchor="middle">0.012</text><text transform="translate(781,1564) rotate(-90)" font-family="Liberation Sans" fill="#000" font-size="22.3" text-anchor="middle">-2</text><text transform="translate(781,1409.3) rotate(-90)" font-family="Liberation Sans" fill="#000" font-size="22.3" text-anchor="middle">0</text><text transform="translate(781,1254.7) rotate(-90)" font-family="Liberation Sans" fill="#000" font-size="22.3" text-anchor="middle">2</text><text transform="translate(781,1100) rotate(-90)" font-family="Liberation Sans" fill="#000" font-size="22.3" text-anchor="middle">4</text><text x="1492.8" y="1080" font-family="Liberation Sans" fill="#000" font-size="22.8" text-anchor="middle">Residuals vs Leverage</text><text x="1492.8" y="1820.5" font-family="Liberation Sans" fill="#000" font-size="22.8" text-anchor="middle">Leverage</text><text x="1492.8" y="1848.5" font-family="Liberation Sans" fill="#000" font-size="22.8" text-anchor="middle">lm(y ~ x1 + x2)</text><text transform="translate(726.5,1404) rotate(-90)" font-family="Liberation Sans" fill="#000" font-size="22.8" text-anchor="middle">Standardized residuals</text><text x="1723.6" y="1599.8" font-family="Liberation Sans" fill="#000" font-size="17" text-anchor="end">439</text><text x="1386.4" y="1186.6" font-family="Liberation Sans" fill="#000" font-size="17">867</text><text x="1550.3" y="1219.4" font-family="Liberation Sans" fill="#000" font-size="17" text-anchor="end">265</text><path d="M835.9,1696H884.1" stroke="#df536b" stroke-width="1.6" stroke-dasharray="8 8"/><text x="907.2" y="1704" font-family="Liberation Sans" fill="#000" font-size="22.8">Cook's distance</text></svg>
<svg style="left:1616px;top:1932px" width="296" height="170" viewBox="701 980 1528 876"><rect x="701" y="980" width="1528" height="876" fill="#fff"/><path d="M863.8,1093V1715M813.5,1409.3H2172" stroke="#bebebe" stroke-width="4" stroke-dasharray="10 14" fill="none"/><g fill="none" stroke="#000" stroke-width="3.6"><circle cx="1142.5" cy="1474" r="7.5"/><circle cx="1128.3" cy="1431.9" r="7.5"/><circle cx="1383.1" cy="1470.7" r="7.5"/><circle cx="969.4" cy="1359.7" r="7.5"/><circle cx="970.3" cy="1320.5" r="7.5"/><circle cx="1291.2" cy="1234.7" r="7.5"/><circle cx="993.6" cy="1377.9" r="7.5"/><circle cx="1376.3" cy="1480.8" r="7.5"/><circle cx="1315.4" cy="1328.2" r="7.5"/><circle cx="1083.8" cy="1338.1" r="7.5"/><circle cx="1270.5" cy="1424.9" r="7.5"/><circle cx="1048.7" cy="1528.5" r="7.5"/><circle cx="996.3" cy="1348.2" r="7.5"/><circle cx="984.5" cy="1320.7" r="7.5"/><circle cx="1308.8" cy="1438.5" r="7.5"/><circle cx="1430" cy="1356.6" r="7.5"/><circle cx="1071.5" cy="1430.4" r="7.5"/><circle cx="1461.4" cy="1362.6" r="7.5"/><circle cx="1057.2" cy="1414" r="7.5"/><circle cx="1292.2" cy="1435" r="7.5"/><circle cx="1410.4" cy="1408.8" r="7.5"/><circle cx="979" cy="1432" r="7.5"/><circle cx="1400.8" cy="1464" r="7.5"/><circle cx="1136.6" cy="1435.2" r="7.5"/><circle cx="1193.2" cy="1410" r="7.5"/><circle cx="1347.4" cy="1398.8" r="7.5"/><circle cx="1079.2" cy="1286.1" r="7.5"/><circle cx="978.3" cy="1515.8" r="7.5"/><circle cx="1118" cy="1429.5" r="7.5"/><circle cx="1193.3" cy="1355.4" r="7.5"/><circle cx="993.4" cy="1269.2" r="7.5"/><circle cx="987.3" cy="1377.6" r="7.5"/><circle cx="1060.4" cy="1406.8" r="7.5"/><circle cx="1146" cy="1427.4" r="7.5"/><circle cx="1236" cy="1370" r="7.5"/><circle cx="1084.2" cy="1329.9" r="7.5"/><circle cx="1014.7" cy="1421.9" r="7.5"/><circle cx="1222.5" cy="1399.8" r="7.5"/><circle cx="1244.6" cy="1396.8" r="7.5"/><circle cx="1062" cy="1355.3" r="7.5"/><circle cx="1027.1" cy="1324.5" r="7.5"/><circle cx="1102.1" cy="1385.9" r="7.5"/><circle cx="1148" cy="1420.5" r="7.5"/><circle cx="1540.5" cy="1291.2" r="7.5"/><circle cx="1329.9" cy="1393.7" r="7.5"/><circle cx="1320.9" cy="1292.9" r="7.5"/><circle cx="1113.6" cy="1418.1" r="7.5"/><circle cx="1101.3" cy="1360.9" r="7.5"/><circle cx="1285.5" cy="1524.2" r="7.5"/><circle cx="970.3" cy="1418.3" r="7.5"/><circle cx="984.9" cy="1410.4" r="7.5"/><circle cx="1167.8" cy="1466.2" r="7.5"/><circle cx="1221.7" cy="1494.1" r="7.5"/><circle cx="1311.3" cy="1325.9" r="7.5"/><circle cx="1197.2" cy="1341.2" r="7.5"/><circle cx="1388.6" cy="1502" r="7.5"/><circle cx="1268.4" cy="1384" r="7.5"/><circle cx="1101" cy="1496.1" r="7.5"/><circle cx="1056.8" cy="1493.2" r="7.5"/><circle cx="1009.8" cy="1368.1" r="7.5"/><circle cx="1166" cy="1458.8" r="7.5"/><circle cx="1154" cy="1335.8" r="7.5"/><circle cx="1000.2" cy="1408.5" r="7.5"/><circle cx="1230" cy="1374" r="7.5"/><circle cx="1222.3" cy="1453" r="7.5"/><circle cx="1273.9" cy="1495" r="7.5"/><circle cx="1027.9" cy="1334" r="7.5"/><circle cx="1033.7" cy="1388.6" r="7.5"/><circle cx="1183" cy="1426.1" r="7.5"/><circle cx="1629.2" cy="1397.4" r="7.5"/><circle cx="1162.5" cy="1304.5" r="7.5"/><circle cx="1775.7" cy="1477.8" r="7.5"/><circle cx="1085.8" cy="1464.3" r="7.5"/><circle cx="1035.8" cy="1460.5" r="7.5"/><circle cx="1058.3" cy="1538.2" r="7.5"/><circle cx="1162.3" cy="1341.9" r="7.5"/><circle cx="979.3" cy="1395.5" r="7.5"/><circle cx="1143.6" cy="1397.7" r="7.5"/><circle cx="1239.3" cy="1415.1" r="7.5"/><circle cx="1219.3" cy="1446.8" r="7.5"/><circle cx="1115.7" cy="1471.5" r="7.5"/><circle cx="1030.6" cy="1341.8" r="7.5"/><circle cx="1051.1" cy="1524.7" r="7.5"/><circle cx="1202.9" cy="1368.8" r="7.5"/><circle cx="976.1" cy="1472.3" r="7.5"/><circle cx="1004.1" cy="1386.5" r="7.5"/><circle cx="1108.3" cy="1461.8" r="7.5"/><circle cx="1282.1" cy="1451.9" r="7.5"/><circle cx="1022.4" cy="1272.8" r="7.5"/><circle cx="1151" cy="1350.1" r="7.5"/><circle cx="1223.3" cy="1571.1" r="7.5"/><circle cx="1048.9" cy="1395.4" r="7.5"/><circle cx="1176.9" cy="1440.8" r="7.5"/><circle cx="1282.1" cy="1498.2" r="7.5"/><circle cx="1210.2" cy="1385.1" r="7.5"/><circle cx="1085.3" cy="1403.4" r="7.5"/><circle cx="1718.1" cy="1428.4" r="7.5"/><circle cx="1225.4" cy="1246.3" r="7.5"/><circle cx="976.4" cy="1587.3" r="7.5"/><circle cx="1306.3" cy="1344.8" r="7.5"/><circle cx="1048.2" cy="1436.1" r="7.5"/><circle cx="1001.6" cy="1355.4" r="7.5"/><circle cx="982.6" cy="1445.5" r="7.5"/><circle cx="1252.5" cy="1460.8" r="7.5"/><circle cx="1113" cy="1549.4" r="7.5"/><circle cx="1029" cy="1427.4" r="7.5"/><circle cx="1165.5" cy="1215.4" r="7.5"/><circle cx="1370.8" cy="1336.8" r="7.5"/><circle cx="1164.2" cy="1281.7" r="7.5"/><circle cx="1192.3" cy="1335.4" r="7.5"/><circle cx="1069.3" cy="1323.4" r="7.5"/><circle cx="1066.8" cy="1333.9" r="7.5"/><circle cx="1348.9" cy="1377.1" r="7.5"/><circle cx="969.4" cy="1455.2" r="7.5"/><circle cx="996.4" cy="1448.9" r="7.5"/><circle cx="1074.6" cy="1531.8" r="7.5"/><circle cx="1055.5" cy="1411" r="7.5"/><circle cx="1286.5" cy="1337.9" r="7.5"/><circle cx="1108" cy="1333.4" r="7.5"/><circle cx="1235.1" cy="1408.8" r="7.5"/><circle cx="1199.3" cy="1454.8" r="7.5"/><circle cx="1103.8" cy="1155.8" r="7.5"/><circle cx="1058.7" cy="1351.9" r="7.5"/><circle cx="1072.3" cy="1296.6" r="7.5"/><circle cx="1482.4" cy="1430" r="7.5"/><circle cx="1287.9" cy="1411.8" r="7.5"/><circle cx="1124.8" cy="1375.3" r="7.5"/><circle cx="970" cy="1277.2" r="7.5"/><circle cx="1075" cy="1437.6" r="7.5"/><circle cx="1201" cy="1345.4" r="7.5"/><circle cx="1332.8" cy="1565.2" r="7.5"/><circle cx="1007.7" cy="1446.2" r="7.5"/><circle cx="1129.2" cy="1508.1" r="7.5"/><circle cx="1136.7" cy="1321" r="7.5"/><circle cx="1472.2" cy="1432.8" r="7.5"/><circle cx="1105.6" cy="1435.2" r="7.5"/><circle cx="1202.3" cy="1307.9" r="7.5"/><circle cx="1141.3" cy="1320.2" r="7.5"/><circle cx="1601.9" cy="1474.6" r="7.5"/><circle cx="1197.6" cy="1382.2" r="7.5"/><circle cx="1068.5" cy="1504.1" r="7.5"/><circle cx="1100" cy="1445.6" r="7.5"/><circle cx="1260.1" cy="1288.1" r="7.5"/><circle cx="1455.7" cy="1298.6" r="7.5"/><circle cx="1386.6" cy="1326.7" r="7.5"/><circle cx="1193.5" cy="1453.7" r="7.5"/><circle cx="1255.7" cy="1562.5" r="7.5"/><circle cx="1033.6" cy="1497.7" r="7.5"/><circle cx="1451.1" cy="1325.5" r="7.5"/><circle cx="1208.7" cy="1439.4" r="7.5"/><circle cx="1071.5" cy="1574.5" r="7.5"/><circle cx="1291.6" cy="1423.2" r="7.5"/><circle cx="1026.7" cy="1298.2" r="7.5"/><circle cx="1215.5" cy="1360.8" r="7.5"/><circle cx="991.2" cy="1473.4" r="7.5"/><circle cx="1024.8" cy="1530.7" r="7.5"/><circle cx="1003.2" cy="1471.3" r="7.5"/><circle cx="1117" cy="1410.5" r="7.5"/><circle cx="1159.2" cy="1333" r="7.5"/><circle cx="995.9" cy="1562.8" r="7.5"/><circle cx="1350.9" cy="1327.1" r="7.5"/><circle cx="1255.8" cy="1410.9" r="7.5"/><circle cx="1167.3" cy="1371" r="7.5"/><circle cx="2121.7" cy="1526.5" r="7.5"/><circle cx="1000.1" cy="1464.2" r="7.5"/><circle cx="1280.4" cy="1446.6" r="7.5"/><circle cx="1268" cy="1320.9" r="7.5"/><circle cx="1297.4" cy="1333.9" r="7.5"/><circle cx="1068.5" cy="1374.3" r="7.5"/><circle cx="987.2" cy="1280.9" r="7.5"/><circle cx="1120.3" cy="1448.3" r="7.5"/><circle cx="972.2" cy="1328.9" r="7.5"/><circle cx="1089" cy="1410" r="7.5"/><circle cx="1455.1" cy="1451.6" r="7.5"/><circle cx="1162.3" cy="1342.2" r="7.5"/><circle cx="1340" cy="1302.2" r="7.5"/><circle cx="1005.9" cy="1338.7" r="7.5"/><circle cx="1122" cy="1450.3" r="7.5"/><circle cx="1249.9" cy="1441" r="7.5"/><circle cx="1101.3" cy="1305" r="7.5"/><circle cx="1366.2" cy="1389.5" r="7.5"/><circle cx="1164.1" cy="1339.3" r="7.5"/><circle cx="1275.7" cy="1434" r="7.5"/><circle cx="1052.8" cy="1313.7" r="7.5"/><circle cx="1035.2" cy="1475.4" r="7.5"/><circle cx="1244.6" cy="1357.5" r="7.5"/><circle cx="1238.5" cy="1470.9" r="7.5"/><circle cx="1044.7" cy="1604.3" r="7.5"/><circle cx="1097.9" cy="1509.8" r="7.5"/><circle cx="1074.8" cy="1402.5" r="7.5"/><circle cx="1009.3" cy="1340" r="7.5"/><circle cx="1110.7" cy="1546.2" r="7.5"/><circle cx="1005.3" cy="1508.4" r="7.5"/><circle cx="1294.1" cy="1277.4" r="7.5"/><circle cx="1318.2" cy="1451.8" r="7.5"/><circle cx="1477.3" cy="1362.2" r="7.5"/><circle cx="1046.7" cy="1449.2" r="7.5"/><circle cx="1153.3" cy="1439.1" r="7.5"/><circle cx="1021.1" cy="1404.4" r="7.5"/><circle cx="1284.5" cy="1411.1" r="7.5"/><circle cx="1593.7" cy="1416.6" r="7.5"/><circle cx="1202.3" cy="1441.7" r="7.5"/><circle cx="1082.1" cy="1652.2" r="7.5"/><circle cx="1287.1" cy="1256.2" r="7.5"/><circle cx="1115.7" cy="1267.9" r="7.5"/><circle cx="1007.9" cy="1498.7" r="7.5"/><circle cx="1247.5" cy="1423.1" r="7.5"/><circle cx="1064.6" cy="1305.2" r="7.5"/><circle cx="1258.1" cy="1323.5" r="7.5"/><circle cx="1026.5" cy="1307.5" r="7.5"/><circle cx="984.2" cy="1492.2" r="7.5"/><circle cx="1011" cy="1206.6" r="7.5"/><circle cx="1273.6" cy="1490.4" r="7.5"/><circle cx="1183" cy="1349.4" r="7.5"/><circle cx="1079.8" cy="1402.9" r="7.5"/><circle cx="1467.4" cy="1430.6" r="7.5"/><circle cx="1190.3" cy="1438.2" r="7.5"/><circle cx="1053.7" cy="1491.5" r="7.5"/><circle cx="1143.3" cy="1287.6" r="7.5"/><circle cx="1191.4" cy="1406.6" r="7.5"/><circle cx="1070.4" cy="1389.8" r="7.5"/><circle cx="1028.3" cy="1390.8" r="7.5"/><circle cx="1226.4" cy="1436" r="7.5"/><circle cx="1271.7" cy="1492.1" r="7.5"/><circle cx="1287.8" cy="1394.4" r="7.5"/><circle cx="1249.1" cy="1570.4" r="7.5"/><circle cx="1145.6" cy="1521.8" r="7.5"/><circle cx="1059.8" cy="1495.9" r="7.5"/><circle cx="1200.6" cy="1492.6" r="7.5"/><circle cx="1198.7" cy="1403.2" r="7.5"/><circle cx="1469.6" cy="1276.4" r="7.5"/><circle cx="1130.6" cy="1531.4" r="7.5"/><circle cx="974" cy="1373.9" r="7.5"/><circle cx="1059.3" cy="1342.9" r="7.5"/><circle cx="1041.5" cy="1488.4" r="7.5"/><circle cx="1159.5" cy="1419.1" r="7.5"/><circle cx="1217.3" cy="1348.3" r="7.5"/><circle cx="1066.9" cy="1425.6" r="7.5"/><circle cx="1260.8" cy="1421.7" r="7.5"/><circle cx="1313.7" cy="1391.8" r="7.5"/><circle cx="1104.9" cy="1415.8" r="7.5"/><circle cx="1028.8" cy="1456.3" r="7.5"/><circle cx="1434.6" cy="1410.3" r="7.5"/><circle cx="1393.4" cy="1269.4" r="7.5"/><circle cx="1191.6" cy="1344.2" r="7.5"/><circle cx="1505.6" cy="1475.2" r="7.5"/><circle cx="976.9" cy="1507" r="7.5"/><circle cx="1276.3" cy="1445.7" r="7.5"/><circle cx="1064.7" cy="1306.3" r="7.5"/><circle cx="1048" cy="1382.5" r="7.5"/><circle cx="1297.5" cy="1469.7" r="7.5"/><circle cx="1303.4" cy="1345.7" r="7.5"/><circle cx="983" cy="1421.1" r="7.5"/><circle cx="1054.7" cy="1498.8" r="7.5"/><circle cx="1276.9" cy="1364.4" r="7.5"/><circle cx="1054.3" cy="1287.8" r="7.5"/><circle cx="1105.4" cy="1370.9" r="7.5"/><circle cx="1041.7" cy="1390.1" r="7.5"/><circle cx="1208.4" cy="1458.3" r="7.5"/><circle cx="1526.2" cy="1374.8" r="7.5"/><circle cx="1045.7" cy="1497.1" r="7.5"/><circle cx="1162.3" cy="1544.1" r="7.5"/><circle cx="970.6" cy="1412.1" r="7.5"/><circle cx="1324.5" cy="1403.3" r="7.5"/><circle cx="1556.9" cy="1213.5" r="7.5"/><circle cx="1514.6" cy="1494.6" r="7.5"/><circle cx="1109.1" cy="1394" r="7.5"/><circle cx="1511.5" cy="1356.6" r="7.5"/><circle cx="1131" cy="1325.9" r="7.5"/><circle cx="1040.7" cy="1407.9" r="7.5"/><circle cx="1125.8" cy="1462" r="7.5"/><circle cx="1110.6" cy="1408.7" r="7.5"/><circle cx="1114.6" cy="1251.5" r="7.5"/><circle cx="1440.4" cy="1374.2" r="7.5"/><circle cx="1238.8" cy="1569.1" r="7.5"/><circle cx="1257" cy="1302.4" r="7.5"/><circle cx="1213.5" cy="1369" r="7.5"/><circle cx="971.8" cy="1411.2" r="7.5"/><circle cx="992" cy="1408.2" r="7.5"/><circle cx="1216.7" cy="1417.7" r="7.5"/><circle cx="1291.7" cy="1395.6" r="7.5"/><circle cx="1214.6" cy="1448.3" r="7.5"/><circle cx="1004.3" cy="1384.7" r="7.5"/><circle cx="977.4" cy="1483.7" r="7.5"/><circle cx="970.9" cy="1393.1" r="7.5"/><circle cx="1103.8" cy="1319.2" r="7.5"/><circle cx="975.2" cy="1368.4" r="7.5"/><circle cx="1447.6" cy="1317.5" r="7.5"/><circle cx="991.7" cy="1496.8" r="7.5"/><circle cx="973.8" cy="1404.4" r="7.5"/><circle cx="1206.7" cy="1353.4" r="7.5"/><circle cx="1276.9" cy="1491.3" r="7.5"/><circle cx="1222" cy="1278.6" r="7.5"/><circle cx="1013" cy="1492.7" r="7.5"/><circle cx="1561" cy="1389.8" r="7.5"/><circle cx="1052.9" cy="1395.1" r="7.5"/><circle cx="1394.6" cy="1389.6" r="7.5"/><circle cx="1353.5" cy="1434.6" r="7.5"/><circle cx="986.7" cy="1374.6" r="7.5"/><circle cx="1282.5" cy="1487.2" r="7.5"/><circle cx="1026.3" cy="1513.7" r="7.5"/><circle cx="1230.1" cy="1467" r="7.5"/><circle cx="1194.7" cy="1415.7" r="7.5"/><circle cx="1111.7" cy="1316" r="7.5"/><circle cx="1054.5" cy="1287.9" r="7.5"/><circle cx="1098.3" cy="1380.4" r="7.5"/><circle cx="1418.3" cy="1388.8" r="7.5"/><circle cx="1009.2" cy="1428.6" r="7.5"/><circle cx="1337.3" cy="1402.7" r="7.5"/><circle cx="1448.8" cy="1509.4" r="7.5"/><circle cx="1147.3" cy="1380.8" r="7.5"/><circle cx="1334" cy="1444.4" r="7.5"/><circle cx="1310.2" cy="1389.8" r="7.5"/><circle cx="1034.9" cy="1440.1" r="7.5"/><circle cx="999.2" cy="1463.6" r="7.5"/><circle cx="1141.5" cy="1425.5" r="7.5"/><circle cx="1148.2" cy="1435.9" r="7.5"/><circle cx="1179.7" cy="1329.9" r="7.5"/><circle cx="1383.7" cy="1382.9" r="7.5"/><circle cx="1062.8" cy="1371.6" r="7.5"/><circle cx="1020.9" cy="1507.1" r="7.5"/><circle cx="1123.8" cy="1286.1" r="7.5"/><circle cx="1182.7" cy="1401.8" r="7.5"/><circle cx="1060.3" cy="1475" r="7.5"/><circle cx="1000.4" cy="1387.1" r="7.5"/><circle cx="1107.9" cy="1335.7" r="7.5"/><circle cx="971.8" cy="1518" r="7.5"/><circle cx="1230.7" cy="1270.3" r="7.5"/><circle cx="1232" cy="1413.8" r="7.5"/><circle cx="972.6" cy="1321.4" r="7.5"/><circle cx="1364.5" cy="1395.5" r="7.5"/><circle cx="1219.9" cy="1438.8" r="7.5"/><circle cx="1052.2" cy="1557.8" r="7.5"/><circle cx="1263.6" cy="1490.4" r="7.5"/><circle cx="1076.5" cy="1412.7" r="7.5"/><circle cx="1634.2" cy="1350.3" r="7.5"/><circle cx="1360" cy="1560.8" r="7.5"/><circle cx="1222.6" cy="1305" r="7.5"/><circle cx="1269.9" cy="1298.1" r="7.5"/><circle cx="1191.5" cy="1502.6" r="7.5"/><circle cx="1035" cy="1370.3" r="7.5"/><circle cx="1213.8" cy="1483.8" r="7.5"/><circle cx="1458.7" cy="1414.3" r="7.5"/><circle cx="1189.6" cy="1338.8" r="7.5"/><circle cx="1102.6" cy="1338.8" r="7.5"/><circle cx="1513.5" cy="1481.1" r="7.5"/><circle cx="975.1" cy="1439.6" r="7.5"/><circle cx="1026.3" cy="1487.6" r="7.5"/><circle cx="1074.9" cy="1386.7" r="7.5"/><circle cx="974.2" cy="1532.4" r="7.5"/><circle cx="1167.5" cy="1613.5" r="7.5"/><circle cx="1541.9" cy="1304.7" r="7.5"/><circle cx="1045.8" cy="1230.8" r="7.5"/><circle cx="1035.5" cy="1446.1" r="7.5"/><circle cx="1057.2" cy="1353.4" r="7.5"/><circle cx="1212.3" cy="1405.2" r="7.5"/><circle cx="1250.5" cy="1288" r="7.5"/><circle cx="1052.8" cy="1363.9" r="7.5"/><circle cx="1712.5" cy="1402.4" r="7.5"/><circle cx="1677.8" cy="1538.8" r="7.5"/><circle cx="977.5" cy="1325.3" r="7.5"/><circle cx="1066.6" cy="1435.3" r="7.5"/><circle cx="1059.5" cy="1516.5" r="7.5"/><circle cx="1265" cy="1423.2" r="7.5"/><circle cx="1038.1" cy="1415.3" r="7.5"/><circle cx="1041.9" cy="1325.2" r="7.5"/><circle cx="1023.3" cy="1498" r="7.5"/><circle cx="1104.3" cy="1458.6" r="7.5"/><circle cx="1106" cy="1289.8" r="7.5"/><circle cx="1000.3" cy="1305" r="7.5"/><circle cx="1747.5" cy="1309" r="7.5"/><circle cx="1273.4" cy="1285.3" r="7.5"/><circle cx="1097" cy="1393.2" r="7.5"/><circle cx="1040.2" cy="1451" r="7.5"/><circle cx="1013.5" cy="1362.4" r="7.5"/><circle cx="1083.1" cy="1326.8" r="7.5"/><circle cx="1310.1" cy="1226.7" r="7.5"/><circle cx="972" cy="1562.8" r="7.5"/><circle cx="1258.1" cy="1384.3" r="7.5"/><circle cx="1575.3" cy="1368.9" r="7.5"/><circle cx="987.9" cy="1412.5" r="7.5"/><circle cx="1270" cy="1527.5" r="7.5"/><circle cx="1256.3" cy="1353.4" r="7.5"/><circle cx="1107.4" cy="1474.5" r="7.5"/><circle cx="1280.1" cy="1370.6" r="7.5"/><circle cx="1334.6" cy="1328.9" r="7.5"/><circle cx="994.1" cy="1306.6" r="7.5"/><circle cx="1224.4" cy="1539.1" r="7.5"/><circle cx="1102.7" cy="1323.9" r="7.5"/><circle cx="1034.7" cy="1468.7" r="7.5"/><circle cx="1022.2" cy="1514" r="7.5"/><circle cx="1749.9" cy="1311.9" r="7.5"/><circle cx="1125" cy="1313.2" r="7.5"/><circle cx="1045.9" cy="1431.9" r="7.5"/><circle cx="1236.3" cy="1355" r="7.5"/><circle cx="1496.8" cy="1473.7" r="7.5"/><circle cx="1134.3" cy="1422.6" r="7.5"/><circle cx="1044.5" cy="1413" r="7.5"/><circle cx="1173" cy="1438.1" r="7.5"/><circle cx="1185.7" cy="1355.9" r="7.5"/><circle cx="1037.4" cy="1290.3" r="7.5"/><circle cx="1136.5" cy="1451.2" r="7.5"/><circle cx="1103.7" cy="1412.7" r="7.5"/><circle cx="1184.2" cy="1283.4" r="7.5"/><circle cx="1125.2" cy="1434.2" r="7.5"/><circle cx="1303.3" cy="1620.5" r="7.5"/><circle cx="1072.2" cy="1368.4" r="7.5"/><circle cx="1056.6" cy="1476.6" r="7.5"/><circle cx="1073.3" cy="1491.9" r="7.5"/><circle cx="975.1" cy="1296.2" r="7.5"/><circle cx="1154.2" cy="1216.9" r="7.5"/><circle cx="1013.2" cy="1491" r="7.5"/><circle cx="1156" cy="1322.7" r="7.5"/><circle cx="1261.3" cy="1413.7" r="7.5"/><circle cx="1157.7" cy="1402.5" r="7.5"/><circle cx="1902" cy="1321.9" r="7.5"/><circle cx="1012.6" cy="1391.5" r="7.5"/><circle cx="992.7" cy="1473.7" r="7.5"/><circle cx="1013.5" cy="1444.6" r="7.5"/><circle cx="1033.5" cy="1356.6" r="7.5"/><circle cx="1307.1" cy="1585.6" r="7.5"/><circle cx="1110.1" cy="1324" r="7.5"/><circle cx="1003.6" cy="1530.7" r="7.5"/><circle cx="1156.9" cy="1400.8" r="7.5"/><circle cx="1042" cy="1428.2" r="7.5"/><circle cx="992.1" cy="1309.5" r="7.5"/><circle cx="1778.1" cy="1380.6" r="7.5"/><circle cx="1117.5" cy="1403.6" r="7.5"/><circle cx="1253.6" cy="1346.4" r="7.5"/><circle cx="1279.6" cy="1482.7" r="7.5"/><circle cx="1083.1" cy="1427.6" r="7.5"/><circle cx="997.9" cy="1314.1" r="7.5"/><circle cx="1268.1" cy="1350.6" r="7.5"/><circle cx="1158.7" cy="1515.9" r="7.5"/><circle cx="1196.9" cy="1355.8" r="7.5"/><circle cx="1098.8" cy="1522.7" r="7.5"/><circle cx="1199.4" cy="1450.4" r="7.5"/><circle cx="1126.4" cy="1310.2" r="7.5"/><circle cx="1730.2" cy="1593.9" r="7.5"/><circle cx="1232.1" cy="1545.7" r="7.5"/><circle cx="1174.6" cy="1313.6" r="7.5"/><circle cx="1071.1" cy="1469.4" r="7.5"/><circle cx="1157.9" cy="1305.9" r="7.5"/><circle cx="1211.4" cy="1420.2" r="7.5"/><circle cx="1298" cy="1375" r="7.5"/><circle cx="1108.4" cy="1346.8" r="7.5"/><circle cx="1058.7" cy="1456.7" r="7.5"/><circle cx="1297.9" cy="1426" r="7.5"/><circle cx="1449" cy="1450.2" r="7.5"/><circle cx="1271.5" cy="1195.5" r="7.5"/><circle cx="1290.4" cy="1394.9" r="7.5"/><circle cx="1116.1" cy="1366.1" r="7.5"/><circle cx="1153.3" cy="1431.5" r="7.5"/><circle cx="1111" cy="1426.9" r="7.5"/><circle cx="1226.4" cy="1299.1" r="7.5"/><circle cx="2053" cy="1451.6" r="7.5"/><circle cx="1124" cy="1403.6" r="7.5"/><circle cx="1067.3" cy="1380" r="7.5"/><circle cx="998.4" cy="1443.1" r="7.5"/><circle cx="981.8" cy="1256.1" r="7.5"/><circle cx="1163.7" cy="1515.5" r="7.5"/><circle cx="998" cy="1253.4" r="7.5"/><circle cx="1270.9" cy="1437.9" r="7.5"/><circle cx="1094.9" cy="1302.1" r="7.5"/><circle cx="1104.2" cy="1571" r="7.5"/><circle cx="1155.7" cy="1327.3" r="7.5"/><circle cx="1296.8" cy="1333.5" r="7.5"/><circle cx="1489.2" cy="1498.7" r="7.5"/><circle cx="976.9" cy="1468.8" r="7.5"/><circle cx="1359.9" cy="1385.6" r="7.5"/><circle cx="1669.9" cy="1306.6" r="7.5"/><circle cx="1106.8" cy="1468.5" r="7.5"/><circle cx="1175.7" cy="1432" r="7.5"/><circle cx="986.1" cy="1287.3" r="7.5"/><circle cx="1006.3" cy="1497.7" r="7.5"/><circle cx="970.8" cy="1333.9" r="7.5"/><circle cx="1348.4" cy="1367.8" r="7.5"/><circle cx="1113.2" cy="1495.4" r="7.5"/><circle cx="1127" cy="1462.5" r="7.5"/><circle cx="1013.6" cy="1347.4" r="7.5"/><circle cx="1055.2" cy="1387.6" r="7.5"/><circle cx="1023.1" cy="1294.3" r="7.5"/><circle cx="1250.9" cy="1452.6" r="7.5"/><circle cx="1043.9" cy="1541.8" r="7.5"/><circle cx="1237.4" cy="1326.4" r="7.5"/><circle cx="1186.8" cy="1451.1" r="7.5"/><circle cx="1157.6" cy="1393.6" r="7.5"/><circle cx="1027.5" cy="1277.5" r="7.5"/><circle cx="1324.9" cy="1419.8" r="7.5"/><circle cx="1040.7" cy="1290.5" r="7.5"/><circle cx="1044.2" cy="1497.7" r="7.5"/><circle cx="1249.3" cy="1328.2" r="7.5"/><circle cx="1148.6" cy="1384.4" r="7.5"/><circle cx="1321.9" cy="1475.2" r="7.5"/><circle cx="1110.9" cy="1515.4" r="7.5"/><circle cx="1326.3" cy="1411.8" r="7.5"/><circle cx="1189.3" cy="1391.3" r="7.5"/><circle cx="1023" cy="1385.2" r="7.5"/><circle cx="1009.4" cy="1366.4" r="7.5"/><circle cx="1159.7" cy="1440.4" r="7.5"/><circle cx="1168.7" cy="1454.7" r="7.5"/><circle cx="1115.4" cy="1396.3" r="7.5"/><circle cx="1141.9" cy="1448.8" r="7.5"/><circle cx="1070.6" cy="1308.5" r="7.5"/><circle cx="1257.4" cy="1403.6" r="7.5"/><circle cx="971.6" cy="1457.8" r="7.5"/><circle cx="1088.5" cy="1556.5" r="7.5"/><circle cx="1546.6" cy="1471.4" r="7.5"/><circle cx="1170" cy="1250.3" r="7.5"/><circle cx="970.9" cy="1453.9" r="7.5"/><circle cx="1112.4" cy="1473" r="7.5"/><circle cx="1038.5" cy="1355.2" r="7.5"/><circle cx="1217.8" cy="1367.8" r="7.5"/><circle cx="1057.5" cy="1347.3" r="7.5"/><circle cx="1076.2" cy="1435.5" r="7.5"/><circle cx="1051.2" cy="1325.1" r="7.5"/><circle cx="973.7" cy="1501.7" r="7.5"/><circle cx="1000.1" cy="1412.6" r="7.5"/><circle cx="1089.8" cy="1469.6" r="7.5"/><circle cx="1007.5" cy="1355.3" r="7.5"/><circle cx="1152.4" cy="1396.5" r="7.5"/><circle cx="993.7" cy="1323.4" r="7.5"/><circle cx="1120.5" cy="1252.3" r="7.5"/><circle cx="1102.3" cy="1397.1" r="7.5"/><circle cx="1112.7" cy="1445.5" r="7.5"/><circle cx="1260.4" cy="1474.8" r="7.5"/><circle cx="1148.9" cy="1423.4" r="7.5"/><circle cx="1189.8" cy="1411.1" r="7.5"/><circle cx="986.4" cy="1250.9" r="7.5"/><circle cx="1259.3" cy="1503.8" r="7.5"/><circle cx="1159.8" cy="1495" r="7.5"/><circle cx="1001.7" cy="1443.9" r="7.5"/><circle cx="1227.8" cy="1370.6" r="7.5"/><circle cx="970.2" cy="1344.1" r="7.5"/><circle cx="1576" cy="1474.9" r="7.5"/><circle cx="1244" cy="1392.7" r="7.5"/><circle cx="1110.1" cy="1407.2" r="7.5"/><circle cx="1078.8" cy="1315.5" r="7.5"/><circle cx="1184.4" cy="1328.9" r="7.5"/><circle cx="1175.5" cy="1437.5" r="7.5"/><circle cx="1099.9" cy="1409" r="7.5"/><circle cx="1137.6" cy="1357.5" r="7.5"/><circle cx="1082.6" cy="1537.7" r="7.5"/><circle cx="1215.7" cy="1440.9" r="7.5"/><circle cx="1076.2" cy="1361.2" r="7.5"/><circle cx="1246.3" cy="1449.3" r="7.5"/><circle cx="1139" cy="1418.6" r="7.5"/><circle cx="1264.3" cy="1411.2" r="7.5"/><circle cx="1596.1" cy="1454.9" r="7.5"/><circle cx="1114.5" cy="1487.8" r="7.5"/><circle cx="1051.4" cy="1421.7" r="7.5"/><circle cx="1177.4" cy="1437.7" r="7.5"/><circle cx="1097.1" cy="1338.6" r="7.5"/><circle cx="984.1" cy="1287.1" r="7.5"/><circle cx="1378.8" cy="1404.9" r="7.5"/><circle cx="1208.3" cy="1384.9" r="7.5"/><circle cx="971.5" cy="1414.7" r="7.5"/><circle cx="1113.1" cy="1362.1" r="7.5"/><circle cx="974.5" cy="1392.7" r="7.5"/><circle cx="1097.7" cy="1391.6" r="7.5"/><circle cx="1085.4" cy="1324.1" r="7.5"/><circle cx="1166.2" cy="1486.9" r="7.5"/><circle cx="1101.7" cy="1299.9" r="7.5"/><circle cx="1206.1" cy="1374.5" r="7.5"/><circle cx="1123.8" cy="1400.2" r="7.5"/><circle cx="1107.2" cy="1455.2" r="7.5"/><circle cx="1295.5" cy="1416.2" r="7.5"/><circle cx="1049.8" cy="1375.8" r="7.5"/><circle cx="1187" cy="1570.1" r="7.5"/><circle cx="1098.6" cy="1458.5" r="7.5"/><circle cx="1065.8" cy="1358.5" r="7.5"/><circle cx="1203" cy="1439.3" r="7.5"/><circle cx="1048.6" cy="1475" r="7.5"/><circle cx="981.4" cy="1457.4" r="7.5"/><circle cx="1169.9" cy="1390" r="7.5"/><circle cx="1445.1" cy="1528.5" r="7.5"/><circle cx="1298.8" cy="1334.1" r="7.5"/><circle cx="1188" cy="1576.6" r="7.5"/><circle cx="1236.8" cy="1454.7" r="7.5"/><circle cx="1053.9" cy="1472.9" r="7.5"/><circle cx="1055.8" cy="1510.6" r="7.5"/><circle cx="1167.5" cy="1491.7" r="7.5"/><circle cx="1396.3" cy="1398.2" r="7.5"/><circle cx="1152.3" cy="1413.8" r="7.5"/><circle cx="1087.9" cy="1437.5" r="7.5"/><circle cx="980.8" cy="1593.2" r="7.5"/><circle cx="1212.1" cy="1514.8" r="7.5"/><circle cx="1168.9" cy="1425.4" r="7.5"/><circle cx="1004.3" cy="1475.8" r="7.5"/><circle cx="1172.2" cy="1477.1" r="7.5"/><circle cx="1828" cy="1339.5" r="7.5"/><circle cx="1097.6" cy="1395.4" r="7.5"/><circle cx="1060.1" cy="1488.4" r="7.5"/><circle cx="1168.4" cy="1444.6" r="7.5"/><circle cx="1112.7" cy="1427.1" r="7.5"/><circle cx="1268.1" cy="1470.5" r="7.5"/><circle cx="971.4" cy="1485.4" r="7.5"/><circle cx="1483.8" cy="1424.1" r="7.5"/><circle cx="1233.4" cy="1347.7" r="7.5"/><circle cx="1389" cy="1381.4" r="7.5"/><circle cx="1184.6" cy="1418.1" r="7.5"/><circle cx="987.4" cy="1379.7" r="7.5"/><circle cx="988.2" cy="1346" r="7.5"/><circle cx="1415" cy="1429.9" r="7.5"/><circle cx="1209.4" cy="1367.1" r="7.5"/><circle cx="1115.9" cy="1497.9" r="7.5"/><circle cx="1043" cy="1432.8" r="7.5"/><circle cx="1299.6" cy="1446.5" r="7.5"/><circle cx="1014.3" cy="1396.3" r="7.5"/><circle cx="1049.3" cy="1385.1" r="7.5"/><circle cx="1061.6" cy="1422.4" r="7.5"/><circle cx="1160.6" cy="1473.9" r="7.5"/><circle cx="1463.7" cy="1472" r="7.5"/><circle cx="980.3" cy="1386.7" r="7.5"/><circle cx="1090.3" cy="1297.8" r="7.5"/><circle cx="1784.7" cy="1485" r="7.5"/><circle cx="1120.7" cy="1439.2" r="7.5"/><circle cx="1030.6" cy="1386.9" r="7.5"/><circle cx="1133.1" cy="1458.4" r="7.5"/><circle cx="1443.9" cy="1395.6" r="7.5"/><circle cx="1407" cy="1422.3" r="7.5"/><circle cx="1127.6" cy="1466.4" r="7.5"/><circle cx="1090.4" cy="1338.6" r="7.5"/><circle cx="1020.2" cy="1343.2" r="7.5"/><circle cx="1144.2" cy="1334.5" r="7.5"/><circle cx="1060.3" cy="1305.2" r="7.5"/><circle cx="1063.2" cy="1446.3" r="7.5"/><circle cx="1223.7" cy="1448.3" r="7.5"/><circle cx="1216.3" cy="1393.7" r="7.5"/><circle cx="1697.2" cy="1346.7" r="7.5"/><circle cx="1058.5" cy="1440.2" r="7.5"/><circle cx="1427.1" cy="1452.8" r="7.5"/><circle cx="1076.7" cy="1453.6" r="7.5"/><circle cx="979.5" cy="1291" r="7.5"/><circle cx="1413.1" cy="1609.8" r="7.5"/><circle cx="1563.3" cy="1428.5" r="7.5"/><circle cx="1167.3" cy="1409.5" r="7.5"/><circle cx="1118.3" cy="1488.2" r="7.5"/><circle cx="1033.3" cy="1377" r="7.5"/><circle cx="998" cy="1565.9" r="7.5"/><circle cx="1102" cy="1336.3" r="7.5"/><circle cx="1219.3" cy="1542.1" r="7.5"/><circle cx="1250.7" cy="1578.6" r="7.5"/><circle cx="1139.7" cy="1464.1" r="7.5"/><circle cx="1265.8" cy="1401.6" r="7.5"/><circle cx="1159.4" cy="1458.5" r="7.5"/><circle cx="1362.2" cy="1460.6" r="7.5"/><circle cx="1050" cy="1382.8" r="7.5"/><circle cx="1032.6" cy="1489.7" r="7.5"/><circle cx="1301.3" cy="1408.4" r="7.5"/><circle cx="1501.3" cy="1380.9" r="7.5"/><circle cx="1148.9" cy="1282.8" r="7.5"/><circle cx="1190.8" cy="1371.4" r="7.5"/><circle cx="1479.2" cy="1277.2" r="7.5"/><circle cx="1075.5" cy="1369.5" r="7.5"/><circle cx="1061.2" cy="1414" r="7.5"/><circle cx="1101.8" cy="1581.1" r="7.5"/><circle cx="1050.8" cy="1504.6" r="7.5"/><circle cx="1292.2" cy="1427.6" r="7.5"/><circle cx="1000.7" cy="1353.7" r="7.5"/><circle cx="1138" cy="1428.7" r="7.5"/><circle cx="1236" cy="1358.5" r="7.5"/><circle cx="1435.5" cy="1485.7" r="7.5"/><circle cx="1095.2" cy="1428.6" r="7.5"/><circle cx="1528.9" cy="1401.6" r="7.5"/><circle cx="1011.3" cy="1438.6" r="7.5"/><circle cx="981.5" cy="1398.8" r="7.5"/><circle cx="974.4" cy="1463" r="7.5"/><circle cx="1004.2" cy="1376.9" r="7.5"/><circle cx="1251.1" cy="1408.3" r="7.5"/><circle cx="1264.2" cy="1412" r="7.5"/><circle cx="1113.9" cy="1561.5" r="7.5"/><circle cx="1093.5" cy="1462.5" r="7.5"/><circle cx="1156" cy="1526.4" r="7.5"/><circle cx="1191.6" cy="1532.2" r="7.5"/><circle cx="1643.4" cy="1453.8" r="7.5"/><circle cx="1113.4" cy="1426.4" r="7.5"/><circle cx="1325.9" cy="1395.4" r="7.5"/><circle cx="1082" cy="1326" r="7.5"/><circle cx="1025.6" cy="1377" r="7.5"/><circle cx="992.6" cy="1327.3" r="7.5"/><circle cx="1097.7" cy="1445.1" r="7.5"/><circle cx="1260.5" cy="1439.8" r="7.5"/><circle cx="1315.5" cy="1331.3" r="7.5"/><circle cx="1143.3" cy="1412.3" r="7.5"/><circle cx="1056" cy="1544.9" r="7.5"/><circle cx="1072.4" cy="1474.9" r="7.5"/><circle cx="1228.9" cy="1330.8" r="7.5"/><circle cx="1210.9" cy="1455.7" r="7.5"/><circle cx="1751.7" cy="1395.9" r="7.5"/><circle cx="1072" cy="1406.5" r="7.5"/><circle cx="1159.1" cy="1441.6" r="7.5"/><circle cx="1299.2" cy="1428.7" r="7.5"/><circle cx="1048.4" cy="1382.6" r="7.5"/><circle cx="1266.2" cy="1400.9" r="7.5"/><circle cx="1890.7" cy="1303.9" r="7.5"/><circle cx="1085.6" cy="1423.5" r="7.5"/><circle cx="1095.3" cy="1484.5" r="7.5"/><circle cx="1003.5" cy="1395.1" r="7.5"/><circle cx="1559" cy="1364.4" r="7.5"/><circle cx="1031.3" cy="1232.6" r="7.5"/><circle cx="1296.7" cy="1454.3" r="7.5"/><circle cx="1237.6" cy="1435.1" r="7.5"/><circle cx="991.1" cy="1340.2" r="7.5"/><circle cx="1265.4" cy="1312.5" r="7.5"/><circle cx="1217.8" cy="1461.3" r="7.5"/><circle cx="1096.3" cy="1357.8" r="7.5"/><circle cx="1222.6" cy="1460.3" r="7.5"/><circle cx="1097.1" cy="1486.1" r="7.5"/><circle cx="1035.4" cy="1356.2" r="7.5"/><circle cx="1359.6" cy="1399.3" r="7.5"/><circle cx="974.5" cy="1379.6" r="7.5"/><circle cx="970.1" cy="1455.3" r="7.5"/><circle cx="999.3" cy="1267.3" r="7.5"/><circle cx="1425.9" cy="1347.1" r="7.5"/><circle cx="1298.4" cy="1436.4" r="7.5"/><circle cx="1139.2" cy="1348.1" r="7.5"/><circle cx="1027.4" cy="1504.6" r="7.5"/><circle cx="1013" cy="1419.5" r="7.5"/><circle cx="990.1" cy="1297.5" r="7.5"/><circle cx="1372.4" cy="1432.2" r="7.5"/><circle cx="1473.4" cy="1342.5" r="7.5"/><circle cx="1012.7" cy="1424" r="7.5"/><circle cx="1449.4" cy="1600.2" r="7.5"/><circle cx="1141.6" cy="1481.1" r="7.5"/><circle cx="1176.1" cy="1393.4" r="7.5"/><circle cx="1095" cy="1294.8" r="7.5"/><circle cx="1108.4" cy="1452.7" r="7.5"/><circle cx="1199.3" cy="1388.1" r="7.5"/><circle cx="1254.1" cy="1478" r="7.5"/><circle cx="1293.6" cy="1480.8" r="7.5"/><circle cx="1140.5" cy="1468.3" r="7.5"/><circle cx="1595.9" cy="1313" r="7.5"/><circle cx="1181.7" cy="1328.3" r="7.5"/><circle cx="1088.9" cy="1364.9" r="7.5"/><circle cx="997.9" cy="1318.9" r="7.5"/><circle cx="1046.1" cy="1441" r="7.5"/><circle cx="1054.1" cy="1351.7" r="7.5"/><circle cx="1012.1" cy="1394.4" r="7.5"/><circle cx="1220.4" cy="1489.6" r="7.5"/><circle cx="1065.9" cy="1470" r="7.5"/><circle cx="1198.5" cy="1398.5" r="7.5"/><circle cx="1786.7" cy="1379.2" r="7.5"/><circle cx="1307.6" cy="1428" r="7.5"/><circle cx="1172.3" cy="1489.5" r="7.5"/><circle cx="1619.6" cy="1586.3" r="7.5"/><circle cx="1972.1" cy="1360.3" r="7.5"/><circle cx="1186.1" cy="1431.8" r="7.5"/><circle cx="1707" cy="1352.7" r="7.5"/><circle cx="983.5" cy="1529.3" r="7.5"/><circle cx="1279.5" cy="1502.5" r="7.5"/><circle cx="1148" cy="1415.8" r="7.5"/><circle cx="1190.8" cy="1515.3" r="7.5"/><circle cx="976.4" cy="1564.5" r="7.5"/><circle cx="1025.8" cy="1346.9" r="7.5"/><circle cx="974.9" cy="1338.5" r="7.5"/><circle cx="1259.7" cy="1483" r="7.5"/><circle cx="1195.9" cy="1434.5" r="7.5"/><circle cx="1495.7" cy="1509.6" r="7.5"/><circle cx="975.2" cy="1384.9" r="7.5"/><circle cx="1033.8" cy="1410.3" r="7.5"/><circle cx="1063.9" cy="1473.3" r="7.5"/><circle cx="1039.2" cy="1468.4" r="7.5"/><circle cx="1296.1" cy="1499.7" r="7.5"/><circle cx="1017.7" cy="1374.4" r="7.5"/><circle cx="1076.2" cy="1359.2" r="7.5"/><circle cx="1189.9" cy="1375.2" r="7.5"/><circle cx="1032.4" cy="1475" r="7.5"/><circle cx="1053.5" cy="1552.9" r="7.5"/><circle cx="1205.7" cy="1361.1" r="7.5"/><circle cx="1535.3" cy="1427.4" r="7.5"/><circle cx="1012.5" cy="1413.3" r="7.5"/><circle cx="994.2" cy="1325.5" r="7.5"/><circle cx="1262.9" cy="1486.3" r="7.5"/><circle cx="978.7" cy="1318.3" r="7.5"/><circle cx="1491.6" cy="1435.8" r="7.5"/><circle cx="1056.8" cy="1467.2" r="7.5"/><circle cx="1207.1" cy="1423.6" r="7.5"/><circle cx="1173.3" cy="1373.6" r="7.5"/><circle cx="1021.1" cy="1425.4" r="7.5"/><circle cx="1083.9" cy="1475" r="7.5"/><circle cx="1117" cy="1428.9" r="7.5"/><circle cx="1125.9" cy="1606.7" r="7.5"/><circle cx="1413.5" cy="1458" r="7.5"/><circle cx="1323.8" cy="1381.8" r="7.5"/><circle cx="1018.4" cy="1425.8" r="7.5"/><circle cx="1226.8" cy="1354.2" r="7.5"/><circle cx="1664" cy="1376.3" r="7.5"/><circle cx="1466.1" cy="1368.9" r="7.5"/><circle cx="1227.9" cy="1363.4" r="7.5"/><circle cx="1172" cy="1541.5" r="7.5"/><circle cx="1062.1" cy="1412.8" r="7.5"/><circle cx="1085.3" cy="1278.1" r="7.5"/><circle cx="981.1" cy="1445.2" r="7.5"/><circle cx="1148.3" cy="1377" r="7.5"/><circle cx="1050.8" cy="1393.5" r="7.5"/><circle cx="988.9" cy="1364.1" r="7.5"/><circle cx="1022.5" cy="1433.7" r="7.5"/><circle cx="1030.4" cy="1457.6" r="7.5"/><circle cx="1197.8" cy="1403.4" r="7.5"/><circle cx="1142.9" cy="1388.7" r="7.5"/><circle cx="1022.4" cy="1427.2" r="7.5"/><circle cx="1122.1" cy="1401.1" r="7.5"/><circle cx="1337.9" cy="1368.5" r="7.5"/><circle cx="1060.8" cy="1470.9" r="7.5"/><circle cx="984.7" cy="1319.7" r="7.5"/><circle cx="1003.3" cy="1235.3" r="7.5"/><circle cx="1654" cy="1285.7" r="7.5"/><circle cx="986" cy="1444.3" r="7.5"/><circle cx="1220.5" cy="1556.6" r="7.5"/><circle cx="1868.6" cy="1419.3" r="7.5"/><circle cx="1248.6" cy="1346.2" r="7.5"/><circle cx="1029.7" cy="1349.9" r="7.5"/><circle cx="1104.8" cy="1507.3" r="7.5"/><circle cx="1186.6" cy="1498.5" r="7.5"/><circle cx="1210.2" cy="1392.3" r="7.5"/><circle cx="1226.1" cy="1357.6" r="7.5"/><circle cx="1407.7" cy="1338.3" r="7.5"/><circle cx="1075.8" cy="1348.4" r="7.5"/><circle cx="1189.3" cy="1492.4" r="7.5"/><circle cx="1136.2" cy="1518.3" r="7.5"/><circle cx="1042" cy="1563.3" r="7.5"/><circle cx="1029.9" cy="1371.4" r="7.5"/><circle cx="1207.1" cy="1343.1" r="7.5"/><circle cx="1151.1" cy="1381.3" r="7.5"/><circle cx="1028.3" cy="1494.3" r="7.5"/><circle cx="1091.1" cy="1289.6" r="7.5"/><circle cx="1431.9" cy="1444.8" r="7.5"/><circle cx="1140.1" cy="1275.4" r="7.5"/><circle cx="1211.2" cy="1371.5" r="7.5"/><circle cx="1095.9" cy="1311.5" r="7.5"/><circle cx="1015.1" cy="1386.4" r="7.5"/><circle cx="1077.4" cy="1412.1" r="7.5"/><circle cx="1324.1" cy="1484.3" r="7.5"/><circle cx="975.8" cy="1453.7" r="7.5"/><circle cx="997.5" cy="1410.7" r="7.5"/><circle cx="1442.1" cy="1397.3" r="7.5"/><circle cx="1043.8" cy="1415.6" r="7.5"/><circle cx="1041.6" cy="1424.7" r="7.5"/><circle cx="1127.2" cy="1395.9" r="7.5"/><circle cx="1036.6" cy="1453.5" r="7.5"/><circle cx="1745.5" cy="1438.5" r="7.5"/><circle cx="1148.7" cy="1528.3" r="7.5"/><circle cx="1033.2" cy="1343.9" r="7.5"/><circle cx="1027.2" cy="1403.4" r="7.5"/><circle cx="1019.1" cy="1417.3" r="7.5"/><circle cx="1095" cy="1472.2" r="7.5"/><circle cx="1155.4" cy="1422.3" r="7.5"/><circle cx="1309.5" cy="1485.8" r="7.5"/><circle cx="1079.1" cy="1489.8" r="7.5"/><circle cx="1239.8" cy="1560.9" r="7.5"/><circle cx="1033.5" cy="1330.8" r="7.5"/><circle cx="1075.9" cy="1394.6" r="7.5"/><circle cx="1369.3" cy="1499.2" r="7.5"/><circle cx="1638.1" cy="1308.9" r="7.5"/><circle cx="1019.7" cy="1362.2" r="7.5"/><circle cx="1202.4" cy="1357.1" r="7.5"/><circle cx="1216.5" cy="1431.6" r="7.5"/><circle cx="985.5" cy="1441" r="7.5"/><circle cx="1313.7" cy="1411.2" r="7.5"/><circle cx="1150.2" cy="1375.2" r="7.5"/><circle cx="1075.6" cy="1343.6" r="7.5"/><circle cx="1410.2" cy="1287.2" r="7.5"/><circle cx="1083.9" cy="1452" r="7.5"/><circle cx="1015.1" cy="1491.1" r="7.5"/><circle cx="1734.7" cy="1391.5" r="7.5"/><circle cx="1379.8" cy="1180.7" r="7.5"/><circle cx="1326.8" cy="1440.9" r="7.5"/><circle cx="1297.7" cy="1317.9" r="7.5"/><circle cx="1281.2" cy="1419.9" r="7.5"/><circle cx="1140.4" cy="1453.1" r="7.5"/><circle cx="1168.1" cy="1461.6" r="7.5"/><circle cx="1380.7" cy="1427.4" r="7.5"/><circle cx="1209.4" cy="1273.3" r="7.5"/><circle cx="1268" cy="1380.4" r="7.5"/><circle cx="1511.8" cy="1364.4" r="7.5"/><circle cx="1073.7" cy="1338.3" r="7.5"/><circle cx="1399.5" cy="1235.9" r="7.5"/><circle cx="1216.3" cy="1340.6" r="7.5"/><circle cx="1230.4" cy="1525.4" r="7.5"/><circle cx="991.6" cy="1488.3" r="7.5"/><circle cx="1123.9" cy="1540.1" r="7.5"/><circle cx="1188.4" cy="1637.2" r="7.5"/><circle cx="1136.8" cy="1302.8" r="7.5"/><circle cx="1069.1" cy="1443.9" r="7.5"/><circle cx="1204.1" cy="1379" r="7.5"/><circle cx="1147.5" cy="1322.4" r="7.5"/><circle cx="1260" cy="1449" r="7.5"/><circle cx="1058.3" cy="1424.3" r="7.5"/><circle cx="1136.4" cy="1382.3" r="7.5"/><circle cx="1248.1" cy="1393.2" r="7.5"/><circle cx="1249.7" cy="1470.8" r="7.5"/><circle cx="1355.2" cy="1353.5" r="7.5"/><circle cx="1463" cy="1355.5" r="7.5"/><circle cx="1272.1" cy="1426.4" r="7.5"/><circle cx="1037.1" cy="1507.8" r="7.5"/><circle cx="1028.1" cy="1359.8" r="7.5"/><circle cx="1014.8" cy="1299.6" r="7.5"/><circle cx="982.6" cy="1298.8" r="7.5"/><circle cx="1191.1" cy="1336.4" r="7.5"/><circle cx="1362" cy="1455.2" r="7.5"/><circle cx="1044.1" cy="1455" r="7.5"/><circle cx="1035.1" cy="1455.6" r="7.5"/><circle cx="1313.6" cy="1432.6" r="7.5"/><circle cx="1198.9" cy="1350.6" r="7.5"/><circle cx="1035.2" cy="1392.8" r="7.5"/><circle cx="1240.7" cy="1554.5" r="7.5"/><circle cx="982.1" cy="1555" r="7.5"/><circle cx="1023.1" cy="1408.3" r="7.5"/><circle cx="1041.2" cy="1397.9" r="7.5"/><circle cx="1708.3" cy="1580.9" r="7.5"/><circle cx="1126.8" cy="1478.4" r="7.5"/><circle cx="1086.7" cy="1408.7" r="7.5"/><circle cx="1353.8" cy="1300.8" r="7.5"/><circle cx="1213.1" cy="1567.9" r="7.5"/><circle cx="1112.5" cy="1503.9" r="7.5"/><circle cx="1276.1" cy="1489.6" r="7.5"/><circle cx="1438.1" cy="1405.7" r="7.5"/><circle cx="1017.9" cy="1382.5" r="7.5"/><circle cx="1280.9" cy="1428.6" r="7.5"/><circle cx="1101.7" cy="1535.8" r="7.5"/><circle cx="987" cy="1460.4" r="7.5"/><circle cx="1058.2" cy="1455.3" r="7.5"/><circle cx="1068.2" cy="1421.6" r="7.5"/><circle cx="1057.6" cy="1279.9" r="7.5"/><circle cx="1362.6" cy="1453.6" r="7.5"/><circle cx="1040.7" cy="1405.3" r="7.5"/><circle cx="1216.1" cy="1467" r="7.5"/><circle cx="1649" cy="1496.8" r="7.5"/><circle cx="1021.2" cy="1358.4" r="7.5"/><circle cx="979.9" cy="1490.4" r="7.5"/><circle cx="1318" cy="1197.3" r="7.5"/><circle cx="969.9" cy="1401.7" r="7.5"/><circle cx="1175.1" cy="1402.6" r="7.5"/><circle cx="1049.4" cy="1416.3" r="7.5"/><circle cx="1026.5" cy="1265.9" r="7.5"/><circle cx="1028.5" cy="1360.6" r="7.5"/><circle cx="1041.9" cy="1431.4" r="7.5"/><circle cx="1080.8" cy="1499.8" r="7.5"/><circle cx="1165.1" cy="1485" r="7.5"/><circle cx="1100.6" cy="1465.4" r="7.5"/><circle cx="1149.3" cy="1317.8" r="7.5"/><circle cx="1468.9" cy="1428.9" r="7.5"/><circle cx="1274.9" cy="1469.6" r="7.5"/><circle cx="1125.8" cy="1346.6" r="7.5"/><circle cx="1204.3" cy="1305.9" r="7.5"/><circle cx="1021.3" cy="1466.4" r="7.5"/><circle cx="1424.7" cy="1436.3" r="7.5"/><circle cx="1239" cy="1380" r="7.5"/><circle cx="1131.2" cy="1414.9" r="7.5"/><circle cx="1223" cy="1374.6" r="7.5"/><circle cx="1100.8" cy="1279.8" r="7.5"/><circle cx="1135.3" cy="1415.8" r="7.5"/><circle cx="1087.9" cy="1428.1" r="7.5"/><circle cx="1040.2" cy="1367.9" r="7.5"/><circle cx="1431.7" cy="1423.1" r="7.5"/><circle cx="1243.1" cy="1355.5" r="7.5"/><circle cx="1075.9" cy="1427.4" r="7.5"/><circle cx="1191" cy="1380.5" r="7.5"/><circle cx="1285.7" cy="1525" r="7.5"/><circle cx="1231.8" cy="1407.4" r="7.5"/><circle cx="1656.8" cy="1437.2" r="7.5"/><circle cx="1045.8" cy="1503.9" r="7.5"/><circle cx="974.5" cy="1441" r="7.5"/><circle cx="1005.7" cy="1380.7" r="7.5"/><circle cx="1088.7" cy="1399.4" r="7.5"/><circle cx="1533.9" cy="1365.7" r="7.5"/><circle cx="1509.4" cy="1339.5" r="7.5"/><circle cx="1064.8" cy="1342.4" r="7.5"/><circle cx="1073.6" cy="1435.7" r="7.5"/><circle cx="1057.7" cy="1515.3" r="7.5"/><circle cx="1464.4" cy="1440.1" r="7.5"/><circle cx="1268.2" cy="1322.4" r="7.5"/><circle cx="1312.7" cy="1420.8" r="7.5"/><circle cx="1069.4" cy="1533.5" r="7.5"/><circle cx="1103.6" cy="1375.2" r="7.5"/><circle cx="1340.2" cy="1394.1" r="7.5"/><circle cx="1126.2" cy="1437.8" r="7.5"/><circle cx="1121.5" cy="1399.4" r="7.5"/><circle cx="1242.8" cy="1297.4" r="7.5"/><circle cx="1614.8" cy="1298.2" r="7.5"/><circle cx="1192.5" cy="1448.3" r="7.5"/><circle cx="1141.8" cy="1407.2" r="7.5"/><circle cx="1113.2" cy="1523.8" r="7.5"/><circle cx="1314.1" cy="1457.6" r="7.5"/><circle cx="1274.5" cy="1257.6" r="7.5"/><circle cx="1266.8" cy="1295.1" r="7.5"/><circle cx="1078.7" cy="1422.3" r="7.5"/><circle cx="1246.6" cy="1466" r="7.5"/><circle cx="1284.1" cy="1510.4" r="7.5"/><circle cx="1023.6" cy="1239.5" r="7.5"/><circle cx="1122.5" cy="1404" r="7.5"/><circle cx="1109.5" cy="1456.1" r="7.5"/><circle cx="1030.8" cy="1323.8" r="7.5"/><circle cx="1125" cy="1496.7" r="7.5"/><circle cx="1130.5" cy="1349.9" r="7.5"/><circle cx="1243.8" cy="1293.4" r="7.5"/><circle cx="1388" cy="1428.9" r="7.5"/><circle cx="1004.2" cy="1297" r="7.5"/><circle cx="1017.8" cy="1361.2" r="7.5"/></g><path d="M969.4,1403.1 L970.6,1403.2 L971.8,1403.3 L974.4,1403.5 L975.2,1403.6 L977.5,1403.8 L980.8,1404 L983,1404.2 L986,1404.5 L987.9,1404.6 L992,1405 L994.2,1405.1 L998,1405.4 L1000.4,1405.6 L1004.1,1405.9 L1006.3,1406.1 L1011,1406.4 L1013.2,1406.6 L1015.1,1406.7 L1020.9,1407.1 L1022.5,1407.3 L1025.8,1407.5 L1027.4,1407.6 L1029,1407.7 L1032.4,1407.9 L1033.8,1408 L1035.5,1408.1 L1040.2,1408.4 L1041.7,1408.6 L1044.1,1408.7 L1046.1,1408.8 L1049.3,1409.1 L1051.4,1409.2 L1054.1,1409.4 L1056.6,1409.5 L1058.2,1409.6 L1059.8,1409.7 L1062,1409.9 L1065.8,1410.2 L1068.5,1410.4 L1071.5,1410.6 L1074.6,1410.8 L1075.9,1410.9 L1078.8,1411.2 L1083.1,1411.5 L1085.4,1411.7 L1088.9,1411.9 L1095,1412.3 L1097.1,1412.3 L1099.9,1412.3 L1101.7,1412.2 L1103.7,1412.2 L1105.6,1412.2 L1108.4,1412.2 L1110.9,1412.1 L1113.1,1412.1 L1115.4,1412.1 L1118,1412 L1122.5,1411.9 L1125.2,1411.9 L1127.2,1411.8 L1133.1,1411.7 L1136.8,1411.6 L1140.5,1411.5 L1143.3,1411.4 L1148,1411.3 L1149.3,1411.2 L1154,1411.1 L1157.7,1411.1 L1159.8,1411 L1164.2,1411 L1167.5,1411.1 L1172,1411.1 L1175.7,1411.1 L1183,1411.2 L1187,1411.3 L1190.3,1411.3 L1191.6,1411.3 L1196.9,1411.3 L1199.3,1411.3 L1203,1411.2 L1208.3,1411.2 L1211.2,1411.1 L1215.5,1411 L1217.8,1411 L1222,1410.9 L1224.4,1410.8 L1228.9,1410.7 L1233.4,1410.6 L1238.5,1410.4 L1243.8,1410.3 L1248.6,1410.1 L1251.1,1410.1 L1257.4,1409.9 L1260.5,1409.8 L1265.4,1409.7 L1268.2,1409.6 L1272.1,1409.6 L1276.3,1409.5 L1281.2,1409.4 L1286.5,1409.3 L1292.2,1409.2 L1297.4,1409.1 L1299.6,1409.1 L1309.5,1409 L1314.1,1409 L1324.1,1408.9 L1334,1408.7 L1348.9,1408.3 L1362,1407.9 L1376.3,1407.4 L1388.6,1407 L1407.7,1406.3 L1425.9,1405.7 L1440.4,1405.3 L1451.1,1405 L1466.1,1404.6 L1482.4,1404.3 L1509.4,1403.7 L1535.3,1402.8 L1575.3,1401 L1629.2,1398.6 L1669.9,1397.7 L1734.7,1397.1 L1786.7,1396.9 L2121.7,1393.5" fill="none" stroke="#df536b" stroke-width="5" opacity="0.65"/><rect x="813.5" y="1093" width="1358.5" height="622" fill="none" stroke="#333" stroke-width="5"/><path d="M863.8,1715V1729M1073.9,1715V1729M1283.9,1715V1729M1494,1715V1729M1704,1715V1729M1914.1,1715V1729M2124.1,1715V1729M813.5,1564H799.5M813.5,1409.3H799.5M813.5,1254.7H799.5M813.5,1100H799.5" stroke="#333" stroke-width="5"/><text x="863.8" y="1764" font-family="Liberation Sans" fill="#333" stroke="#333" stroke-width="0.5" font-size="22.3" text-anchor="middle">0.000</text><text x="1073.9" y="1764" font-family="Liberation Sans" fill="#333" stroke="#333" stroke-width="0.5" font-size="22.3" text-anchor="middle">0.002</text><text x="1283.9" y="1764" font-family="Liberation Sans" fill="#333" stroke="#333" stroke-width="0.5" font-size="22.3" text-anchor="middle">0.004</text><text x="1494" y="1764" font-family="Liberation Sans" fill="#333" stroke="#333" stroke-width="0.5" font-size="22.3" text-anchor="middle">0.006</text><text x="1704" y="1764" font-family="Liberation Sans" fill="#333" stroke="#333" stroke-width="0.5" font-size="22.3" text-anchor="middle">0.008</text><text x="1914.1" y="1764" font-family="Liberation Sans" fill="#333" stroke="#333" stroke-width="0.5" font-size="22.3" text-anchor="middle">0.010</text><text x="2124.1" y="1764" font-family="Liberation Sans" fill="#333" stroke="#333" stroke-width="0.5" font-size="22.3" text-anchor="middle">0.012</text><text transform="translate(781,1564) rotate(-90)" font-family="Liberation Sans" fill="#333" stroke="#333" stroke-width="0.5" font-size="22.3" text-anchor="middle">-2</text><text transform="translate(781,1409.3) rotate(-90)" font-family="Liberation Sans" fill="#333" stroke="#333" stroke-width="0.5" font-size="22.3" text-anchor="middle">0</text><text transform="translate(781,1254.7) rotate(-90)" font-family="Liberation Sans" fill="#333" stroke="#333" stroke-width="0.5" font-size="22.3" text-anchor="middle">2</text><text transform="translate(781,1100) rotate(-90)" font-family="Liberation Sans" fill="#333" stroke="#333" stroke-width="0.5" font-size="22.3" text-anchor="middle">4</text><text x="1492.8" y="1080" font-family="Liberation Sans" fill="#333" stroke="#333" stroke-width="0.5" font-size="22.8" text-anchor="middle">Residuals vs Leverage</text><text x="1492.8" y="1820.5" font-family="Liberation Sans" fill="#333" stroke="#333" stroke-width="0.5" font-size="22.8" text-anchor="middle">Leverage</text><text x="1492.8" y="1848.5" font-family="Liberation Sans" fill="#333" stroke="#333" stroke-width="0.5" font-size="22.8" text-anchor="middle">lm(y ~ x1 + x2)</text><text transform="translate(726.5,1404) rotate(-90)" font-family="Liberation Sans" fill="#333" stroke="#333" stroke-width="0.5" font-size="22.8" text-anchor="middle">Standardized residuals</text><text x="1721.7" y="1599.8" font-family="Liberation Sans" fill="#333" stroke="#333" stroke-width="0.5" font-size="17" text-anchor="end">439</text><text x="1388.3" y="1186.6" font-family="Liberation Sans" fill="#333" stroke="#333" stroke-width="0.5" font-size="17">867</text><text x="1548.4" y="1219.4" font-family="Liberation Sans" fill="#333" stroke="#333" stroke-width="0.5" font-size="17" text-anchor="end">265</text><path d="M835.9,1696H884.1" stroke="#df536b" stroke-width="5" stroke-dasharray="25 25"/><text x="907.2" y="1704" font-family="Liberation Sans" fill="#333" stroke="#333" stroke-width="0.5" font-size="22.8">Cook's distance</text></svg>
<svg style="left:707px;top:1910px" width="266" height="214" viewBox="0 0 1064 856"><rect width="1064" height="856" fill="#fff"/><path d="M88,421.6H1020" stroke="#bebebe" stroke-width="3" stroke-dasharray="8 10" fill="none"/><g fill="none" stroke="#000" stroke-width="2.2"><circle cx="416.9" cy="489.8" r="5.6"/><circle cx="461.8" cy="445.4" r="5.6"/><circle cx="711.3" cy="486.2" r="5.6"/><circle cx="530.2" cy="369.2" r="5.6"/><circle cx="536.9" cy="327.8" r="5.6"/><circle cx="766.6" cy="237.6" r="5.6"/><circle cx="579.8" cy="388.5" r="5.6"/><circle cx="311.3" cy="496.8" r="5.6"/><circle cx="388.2" cy="336.1" r="5.6"/><circle cx="437.3" cy="346.5" r="5.6"/><circle cx="715.1" cy="438" r="5.6"/><circle cx="552.8" cy="547.3" r="5.6"/><circle cx="582.3" cy="357.1" r="5.6"/><circle cx="542.6" cy="328.1" r="5.6"/><circle cx="477.2" cy="452.3" r="5.6"/><circle cx="746.1" cy="366.1" r="5.6"/><circle cx="606.9" cy="443.9" r="5.6"/><circle cx="226.9" cy="372.4" r="5.6"/><circle cx="604.7" cy="426.5" r="5.6"/><circle cx="417.9" cy="448.7" r="5.6"/><circle cx="406.3" cy="421.1" r="5.6"/><circle cx="484.6" cy="445.6" r="5.6"/><circle cx="412.1" cy="479.2" r="5.6"/><circle cx="396.1" cy="448.9" r="5.6"/><circle cx="404.4" cy="422.3" r="5.6"/><circle cx="266.5" cy="410.5" r="5.6"/><circle cx="649" cy="291.6" r="5.6"/><circle cx="546.3" cy="534" r="5.6"/><circle cx="354.8" cy="442.9" r="5.6"/><circle cx="710.5" cy="364.7" r="5.6"/><circle cx="584.1" cy="273.8" r="5.6"/><circle cx="483.8" cy="388.1" r="5.6"/><circle cx="650.5" cy="419" r="5.6"/><circle cx="621.8" cy="440.7" r="5.6"/><circle cx="605.4" cy="380.2" r="5.6"/><circle cx="632.3" cy="337.8" r="5.6"/><circle cx="604.6" cy="434.9" r="5.6"/><circle cx="543.1" cy="411.5" r="5.6"/><circle cx="509.7" cy="408.4" r="5.6"/><circle cx="483.9" cy="364.6" r="5.6"/><circle cx="417.9" cy="332.1" r="5.6"/><circle cx="467.1" cy="396.9" r="5.6"/><circle cx="338.4" cy="433.4" r="5.6"/><circle cx="840.3" cy="297.3" r="5.6"/><circle cx="717.7" cy="405.1" r="5.6"/><circle cx="392.1" cy="299" r="5.6"/><circle cx="485.9" cy="430.9" r="5.6"/><circle cx="432.8" cy="370.5" r="5.6"/><circle cx="595.7" cy="542.7" r="5.6"/><circle cx="506.2" cy="431" r="5.6"/><circle cx="561.1" cy="422.7" r="5.6"/><circle cx="486.5" cy="481.5" r="5.6"/><circle cx="545.7" cy="511" r="5.6"/><circle cx="685.8" cy="333.7" r="5.6"/><circle cx="518.2" cy="349.8" r="5.6"/><circle cx="703.9" cy="519.2" r="5.6"/><circle cx="315.3" cy="394.9" r="5.6"/><circle cx="621.2" cy="513.1" r="5.6"/><circle cx="555.6" cy="510.1" r="5.6"/><circle cx="561.8" cy="378.1" r="5.6"/><circle cx="544.7" cy="473.7" r="5.6"/><circle cx="474.6" cy="344.1" r="5.6"/><circle cx="481.4" cy="420.8" r="5.6"/><circle cx="401.6" cy="384.4" r="5.6"/><circle cx="346.4" cy="467.6" r="5.6"/><circle cx="526.5" cy="511.9" r="5.6"/><circle cx="569.1" cy="342.1" r="5.6"/><circle cx="510.2" cy="399.7" r="5.6"/><circle cx="671.2" cy="439.3" r="5.6"/><circle cx="836.1" cy="409.1" r="5.6"/><circle cx="424.3" cy="311" r="5.6"/><circle cx="227.3" cy="493.6" r="5.6"/><circle cx="667" cy="479.6" r="5.6"/><circle cx="413.4" cy="475.6" r="5.6"/><circle cx="435.4" cy="557.5" r="5.6"/><circle cx="681.4" cy="350.5" r="5.6"/><circle cx="481.3" cy="407" r="5.6"/><circle cx="341.7" cy="409.4" r="5.6"/><circle cx="578" cy="427.7" r="5.6"/><circle cx="467.7" cy="461.1" r="5.6"/><circle cx="495.3" cy="487.2" r="5.6"/><circle cx="587.2" cy="350.4" r="5.6"/><circle cx="484.1" cy="543.3" r="5.6"/><circle cx="581" cy="378.9" r="5.6"/><circle cx="486.1" cy="488" r="5.6"/><circle cx="575.8" cy="397.5" r="5.6"/><circle cx="664.8" cy="476.9" r="5.6"/><circle cx="615.2" cy="466.5" r="5.6"/><circle cx="486.8" cy="277.5" r="5.6"/><circle cx="666.2" cy="359.1" r="5.6"/><circle cx="632.9" cy="592.1" r="5.6"/><circle cx="581.5" cy="406.9" r="5.6"/><circle cx="523.5" cy="454.8" r="5.6"/><circle cx="398" cy="515.3" r="5.6"/><circle cx="695.3" cy="396.1" r="5.6"/><circle cx="453.1" cy="415.4" r="5.6"/><circle cx="857.1" cy="441.6" r="5.6"/><circle cx="726.8" cy="249.8" r="5.6"/><circle cx="488.1" cy="609.4" r="5.6"/><circle cx="345.4" cy="353.6" r="5.6"/><circle cx="429.7" cy="449.8" r="5.6"/><circle cx="544.6" cy="364.7" r="5.6"/><circle cx="479.6" cy="459.8" r="5.6"/><circle cx="504.2" cy="475.9" r="5.6"/><circle cx="399.8" cy="569.3" r="5.6"/><circle cx="528.8" cy="440.7" r="5.6"/><circle cx="386.4" cy="217.1" r="5.6"/><circle cx="265.8" cy="345.2" r="5.6"/><circle cx="493.4" cy="287.1" r="5.6"/><circle cx="671.6" cy="343.6" r="5.6"/><circle cx="455" cy="330.9" r="5.6"/><circle cx="588.4" cy="342" r="5.6"/><circle cx="273.2" cy="387.6" r="5.6"/><circle cx="511.2" cy="470" r="5.6"/><circle cx="593.3" cy="463.4" r="5.6"/><circle cx="541.2" cy="550.8" r="5.6"/><circle cx="553" cy="423.4" r="5.6"/><circle cx="396" cy="346.4" r="5.6"/><circle cx="416.2" cy="341.5" r="5.6"/><circle cx="401.2" cy="421" r="5.6"/><circle cx="566.7" cy="469.6" r="5.6"/><circle cx="399" cy="154.2" r="5.6"/><circle cx="434.5" cy="361" r="5.6"/><circle cx="463.5" cy="302.7" r="5.6"/><circle cx="802.6" cy="443.4" r="5.6"/><circle cx="394.4" cy="424.2" r="5.6"/><circle cx="577.3" cy="385.7" r="5.6"/><circle cx="531.9" cy="282.2" r="5.6"/><circle cx="380.7" cy="451.5" r="5.6"/><circle cx="540.4" cy="354.2" r="5.6"/><circle cx="696.5" cy="585.9" r="5.6"/><circle cx="573.6" cy="460.5" r="5.6"/><circle cx="499.1" cy="525.8" r="5.6"/><circle cx="435.4" cy="328.5" r="5.6"/><circle cx="246" cy="446.3" r="5.6"/><circle cx="681.4" cy="448.9" r="5.6"/><circle cx="313.9" cy="314.7" r="5.6"/><circle cx="644.8" cy="327.6" r="5.6"/><circle cx="818.5" cy="490.3" r="5.6"/><circle cx="319.3" cy="393" r="5.6"/><circle cx="631.7" cy="521.6" r="5.6"/><circle cx="459.9" cy="459.8" r="5.6"/><circle cx="290" cy="293.8" r="5.6"/><circle cx="276.1" cy="305.1" r="5.6"/><circle cx="271.3" cy="334.6" r="5.6"/><circle cx="416.7" cy="468.4" r="5.6"/><circle cx="300" cy="583" r="5.6"/><circle cx="607.1" cy="514.9" r="5.6"/><circle cx="821.5" cy="333.3" r="5.6"/><circle cx="354.9" cy="453.3" r="5.6"/><circle cx="616.6" cy="595.8" r="5.6"/><circle cx="659.9" cy="436.2" r="5.6"/><circle cx="579.7" cy="304.3" r="5.6"/><circle cx="354.6" cy="370.4" r="5.6"/><circle cx="493.3" cy="489.2" r="5.6"/><circle cx="466.1" cy="549.6" r="5.6"/><circle cx="594.8" cy="487" r="5.6"/><circle cx="490.7" cy="422.8" r="5.6"/><circle cx="636.3" cy="341.1" r="5.6"/><circle cx="460.2" cy="583.5" r="5.6"/><circle cx="699.8" cy="335" r="5.6"/><circle cx="346.3" cy="423.3" r="5.6"/><circle cx="353.2" cy="381.2" r="5.6"/><circle cx="985.5" cy="544.6" r="5.6"/><circle cx="467.8" cy="479.5" r="5.6"/><circle cx="596.5" cy="460.9" r="5.6"/><circle cx="575.4" cy="328.4" r="5.6"/><circle cx="487.1" cy="342.1" r="5.6"/><circle cx="609" cy="384.7" r="5.6"/><circle cx="566.2" cy="286.1" r="5.6"/><circle cx="464.5" cy="462.7" r="5.6"/><circle cx="524.8" cy="336.8" r="5.6"/><circle cx="492.1" cy="422.3" r="5.6"/><circle cx="810.6" cy="466.1" r="5.6"/><circle cx="439.1" cy="350.8" r="5.6"/><circle cx="334.4" cy="308.8" r="5.6"/><circle cx="512.1" cy="347.1" r="5.6"/><circle cx="587.2" cy="464.8" r="5.6"/><circle cx="547.2" cy="454.9" r="5.6"/><circle cx="476.4" cy="311.5" r="5.6"/><circle cx="404.4" cy="400.7" r="5.6"/><circle cx="706.9" cy="347.8" r="5.6"/><circle cx="435.4" cy="447.6" r="5.6"/><circle cx="396.3" cy="320.7" r="5.6"/><circle cx="502" cy="491.3" r="5.6"/><circle cx="458.1" cy="367" r="5.6"/><circle cx="698.8" cy="486.5" r="5.6"/><circle cx="548.8" cy="627.2" r="5.6"/><circle cx="607.5" cy="527.5" r="5.6"/><circle cx="467.5" cy="414.4" r="5.6"/><circle cx="561.5" cy="348.5" r="5.6"/><circle cx="450.6" cy="565.9" r="5.6"/><circle cx="544.7" cy="526.1" r="5.6"/><circle cx="425.5" cy="282.6" r="5.6"/><circle cx="361.9" cy="466.4" r="5.6"/><circle cx="817.7" cy="372" r="5.6"/><circle cx="616.4" cy="463.7" r="5.6"/><circle cx="351.6" cy="453" r="5.6"/><circle cx="427.3" cy="416.5" r="5.6"/><circle cx="327.6" cy="423.5" r="5.6"/><circle cx="848.6" cy="429.3" r="5.6"/><circle cx="717.7" cy="455.8" r="5.6"/><circle cx="503.1" cy="677.8" r="5.6"/><circle cx="560.5" cy="260.2" r="5.6"/><circle cx="438.3" cy="272.5" r="5.6"/><circle cx="460.1" cy="515.9" r="5.6"/><circle cx="379.4" cy="436.1" r="5.6"/><circle cx="451.4" cy="311.8" r="5.6"/><circle cx="753.9" cy="331.2" r="5.6"/><circle cx="496.3" cy="314.2" r="5.6"/><circle cx="528.2" cy="509" r="5.6"/><circle cx="565.7" cy="207.7" r="5.6"/><circle cx="666.8" cy="507.1" r="5.6"/><circle cx="419.4" cy="358.5" r="5.6"/><circle cx="383.5" cy="414.8" r="5.6"/><circle cx="724.3" cy="444" r="5.6"/><circle cx="428.7" cy="452.1" r="5.6"/><circle cx="428.7" cy="508.3" r="5.6"/><circle cx="351.7" cy="293.2" r="5.6"/><circle cx="326.4" cy="418.8" r="5.6"/><circle cx="422.6" cy="401" r="5.6"/><circle cx="615" cy="402.1" r="5.6"/><circle cx="697.7" cy="449.7" r="5.6"/><circle cx="585.8" cy="508.8" r="5.6"/><circle cx="504" cy="405.8" r="5.6"/><circle cx="493.4" cy="591.4" r="5.6"/><circle cx="398.2" cy="540.2" r="5.6"/><circle cx="407.2" cy="513" r="5.6"/><circle cx="668.1" cy="509.4" r="5.6"/><circle cx="355.2" cy="415.1" r="5.6"/><circle cx="812.9" cy="281.6" r="5.6"/><circle cx="532.5" cy="550.3" r="5.6"/><circle cx="547.2" cy="384.2" r="5.6"/><circle cx="427.1" cy="351.5" r="5.6"/><circle cx="426.8" cy="505" r="5.6"/><circle cx="333.5" cy="431.9" r="5.6"/><circle cx="525.6" cy="357.3" r="5.6"/><circle cx="559.5" cy="438.8" r="5.6"/><circle cx="530.3" cy="434.7" r="5.6"/><circle cx="444" cy="403.2" r="5.6"/><circle cx="392.3" cy="428.5" r="5.6"/><circle cx="460.5" cy="471.1" r="5.6"/><circle cx="697.3" cy="422.6" r="5.6"/><circle cx="394.6" cy="274.2" r="5.6"/><circle cx="524.4" cy="353" r="5.6"/><circle cx="810.8" cy="491" r="5.6"/><circle cx="499.9" cy="524.7" r="5.6"/><circle cx="350.1" cy="460" r="5.6"/><circle cx="412.4" cy="312.9" r="5.6"/><circle cx="571.9" cy="393.3" r="5.6"/><circle cx="502.9" cy="485.2" r="5.6"/><circle cx="476" cy="354.6" r="5.6"/><circle cx="470" cy="434" r="5.6"/><circle cx="550.8" cy="516" r="5.6"/><circle cx="729.8" cy="374.2" r="5.6"/><circle cx="488.1" cy="293.5" r="5.6"/><circle cx="678.4" cy="381.1" r="5.6"/><circle cx="595.8" cy="401.3" r="5.6"/><circle cx="471.9" cy="473.2" r="5.6"/><circle cx="340.4" cy="385.3" r="5.6"/><circle cx="460.3" cy="514.2" r="5.6"/><circle cx="477.1" cy="563.7" r="5.6"/><circle cx="523.2" cy="424.6" r="5.6"/><circle cx="673.7" cy="415.3" r="5.6"/><circle cx="851.7" cy="215.5" r="5.6"/><circle cx="700.5" cy="511.4" r="5.6"/><circle cx="476.6" cy="405.4" r="5.6"/><circle cx="303.1" cy="366.1" r="5.6"/><circle cx="440.3" cy="333.6" r="5.6"/><circle cx="514.5" cy="420.1" r="5.6"/><circle cx="618.7" cy="477.2" r="5.6"/><circle cx="640" cy="420.9" r="5.6"/><circle cx="594.7" cy="255.1" r="5.6"/><circle cx="291.3" cy="384.6" r="5.6"/><circle cx="666.6" cy="590" r="5.6"/><circle cx="490.1" cy="308.9" r="5.6"/><circle cx="575.5" cy="379.1" r="5.6"/><circle cx="526.4" cy="423.6" r="5.6"/><circle cx="574.5" cy="420.4" r="5.6"/><circle cx="490.5" cy="430.4" r="5.6"/><circle cx="277" cy="407.2" r="5.6"/><circle cx="650.4" cy="462.7" r="5.6"/><circle cx="563.9" cy="395.7" r="5.6"/><circle cx="482.6" cy="500.1" r="5.6"/><circle cx="537.8" cy="404.5" r="5.6"/><circle cx="514.4" cy="326.5" r="5.6"/><circle cx="552.9" cy="378.4" r="5.6"/><circle cx="720" cy="324.9" r="5.6"/><circle cx="497" cy="513.9" r="5.6"/><circle cx="546" cy="416.5" r="5.6"/><circle cx="662.6" cy="362.6" r="5.6"/><circle cx="695" cy="508" r="5.6"/><circle cx="657.3" cy="283.8" r="5.6"/><circle cx="433.3" cy="509.5" r="5.6"/><circle cx="825.9" cy="401" r="5.6"/><circle cx="509.9" cy="406.6" r="5.6"/><circle cx="764.5" cy="400.8" r="5.6"/><circle cx="358.2" cy="448.2" r="5.6"/><circle cx="530.8" cy="384.9" r="5.6"/><circle cx="719.1" cy="503.7" r="5.6"/><circle cx="418.1" cy="531.7" r="5.6"/><circle cx="442.8" cy="482.3" r="5.6"/><circle cx="364.9" cy="428.3" r="5.6"/><circle cx="381.4" cy="323.2" r="5.6"/><circle cx="474.4" cy="293.5" r="5.6"/><circle cx="543.3" cy="391.1" r="5.6"/><circle cx="243.7" cy="400" r="5.6"/><circle cx="561.2" cy="441.9" r="5.6"/><circle cx="721.7" cy="414.7" r="5.6"/><circle cx="790.7" cy="526.9" r="5.6"/><circle cx="704" cy="391.5" r="5.6"/><circle cx="589.3" cy="458.6" r="5.6"/><circle cx="269.5" cy="401" r="5.6"/><circle cx="445.4" cy="454.1" r="5.6"/><circle cx="478.2" cy="478.9" r="5.6"/><circle cx="640.2" cy="438.6" r="5.6"/><circle cx="477.2" cy="449.6" r="5.6"/><circle cx="355.7" cy="337.9" r="5.6"/><circle cx="732.6" cy="393.8" r="5.6"/><circle cx="652.6" cy="381.8" r="5.6"/><circle cx="566.4" cy="524.8" r="5.6"/><circle cx="691.1" cy="291.6" r="5.6"/><circle cx="323.5" cy="413.7" r="5.6"/><circle cx="625.7" cy="490.8" r="5.6"/><circle cx="444.6" cy="398.1" r="5.6"/><circle cx="595.3" cy="343.9" r="5.6"/><circle cx="507.6" cy="536.2" r="5.6"/><circle cx="577.4" cy="275" r="5.6"/><circle cx="688" cy="426.4" r="5.6"/><circle cx="524.3" cy="328.8" r="5.6"/><circle cx="626.8" cy="407" r="5.6"/><circle cx="333.1" cy="452.6" r="5.6"/><circle cx="428.6" cy="578.2" r="5.6"/><circle cx="746.6" cy="507.1" r="5.6"/><circle cx="591.8" cy="425.2" r="5.6"/><circle cx="202.9" cy="359.5" r="5.6"/><circle cx="300.6" cy="581.2" r="5.6"/><circle cx="523.4" cy="311.6" r="5.6"/><circle cx="670.9" cy="304.4" r="5.6"/><circle cx="535.4" cy="520" r="5.6"/><circle cx="617.1" cy="380.4" r="5.6"/><circle cx="628.3" cy="500.1" r="5.6"/><circle cx="781.6" cy="426.9" r="5.6"/><circle cx="557.4" cy="347.3" r="5.6"/><circle cx="488.4" cy="347.2" r="5.6"/><circle cx="244.5" cy="497.2" r="5.6"/><circle cx="538" cy="453.6" r="5.6"/><circle cx="430" cy="504.2" r="5.6"/><circle cx="380.8" cy="397.7" r="5.6"/><circle cx="491.8" cy="551.5" r="5.6"/><circle cx="680.8" cy="636.9" r="5.6"/><circle cx="265" cy="311.5" r="5.6"/><circle cx="444.2" cy="233.3" r="5.6"/><circle cx="552.1" cy="460.4" r="5.6"/><circle cx="394.6" cy="362.6" r="5.6"/><circle cx="534.8" cy="417.3" r="5.6"/><circle cx="543.5" cy="293.7" r="5.6"/><circle cx="495.9" cy="373.7" r="5.6"/><circle cx="155.7" cy="414.3" r="5.6"/><circle cx="872" cy="557.8" r="5.6"/><circle cx="494.3" cy="333" r="5.6"/><circle cx="625.4" cy="449" r="5.6"/><circle cx="538.9" cy="534.7" r="5.6"/><circle cx="690.5" cy="436.2" r="5.6"/><circle cx="632" cy="427.9" r="5.6"/><circle cx="473.1" cy="332.8" r="5.6"/><circle cx="559.1" cy="515.2" r="5.6"/><circle cx="399.5" cy="473.5" r="5.6"/><circle cx="655.1" cy="295.6" r="5.6"/><circle cx="460.3" cy="311.5" r="5.6"/><circle cx="883.2" cy="316.1" r="5.6"/><circle cx="282.9" cy="290.9" r="5.6"/><circle cx="433.6" cy="404.6" r="5.6"/><circle cx="632.3" cy="465.6" r="5.6"/><circle cx="581.8" cy="372" r="5.6"/><circle cx="419.1" cy="334.6" r="5.6"/><circle cx="411" cy="229.1" r="5.6"/><circle cx="537.1" cy="583.6" r="5.6"/><circle cx="482.5" cy="395.2" r="5.6"/><circle cx="301.8" cy="379.1" r="5.6"/><circle cx="515.2" cy="424.9" r="5.6"/><circle cx="510.6" cy="546.2" r="5.6"/><circle cx="578.2" cy="362.7" r="5.6"/><circle cx="363.6" cy="490.3" r="5.6"/><circle cx="620.5" cy="380.8" r="5.6"/><circle cx="685.6" cy="336.8" r="5.6"/><circle cx="587.4" cy="313.2" r="5.6"/><circle cx="382.3" cy="558.4" r="5.6"/><circle cx="436.7" cy="331.5" r="5.6"/><circle cx="582.7" cy="484.2" r="5.6"/><circle cx="433.9" cy="532" r="5.6"/><circle cx="183.7" cy="319.1" r="5.6"/><circle cx="625.1" cy="320.3" r="5.6"/><circle cx="401.7" cy="445.4" r="5.6"/><circle cx="470.1" cy="364.4" r="5.6"/><circle cx="764.4" cy="489.3" r="5.6"/><circle cx="390.7" cy="435.6" r="5.6"/><circle cx="640.4" cy="425.5" r="5.6"/><circle cx="354.2" cy="451.9" r="5.6"/><circle cx="498.7" cy="365.2" r="5.6"/><circle cx="525.8" cy="296" r="5.6"/><circle cx="364.4" cy="465.7" r="5.6"/><circle cx="411.2" cy="425.2" r="5.6"/><circle cx="545.2" cy="288.9" r="5.6"/><circle cx="634.5" cy="447.8" r="5.6"/><circle cx="276" cy="644.1" r="5.6"/><circle cx="451.1" cy="378.5" r="5.6"/><circle cx="636" cy="492.6" r="5.6"/><circle cx="461.2" cy="508.7" r="5.6"/><circle cx="548.5" cy="302.2" r="5.6"/><circle cx="614" cy="218.7" r="5.6"/><circle cx="569.2" cy="507.8" r="5.6"/><circle cx="586.1" cy="330.3" r="5.6"/><circle cx="467.3" cy="426.2" r="5.6"/><circle cx="488" cy="414.4" r="5.6"/><circle cx="122.5" cy="329.8" r="5.6"/><circle cx="492.9" cy="402.8" r="5.6"/><circle cx="574.6" cy="489.6" r="5.6"/><circle cx="602.3" cy="458.8" r="5.6"/><circle cx="430.5" cy="366" r="5.6"/><circle cx="773" cy="607.3" r="5.6"/><circle cx="582.9" cy="331.7" r="5.6"/><circle cx="525.1" cy="549.7" r="5.6"/><circle cx="688.1" cy="412.7" r="5.6"/><circle cx="426.9" cy="441.5" r="5.6"/><circle cx="456.3" cy="316.3" r="5.6"/><circle cx="825.3" cy="391.4" r="5.6"/><circle cx="545.7" cy="415.5" r="5.6"/><circle cx="743" cy="355.3" r="5.6"/><circle cx="336.9" cy="498.9" r="5.6"/><circle cx="514" cy="440.8" r="5.6"/><circle cx="564.2" cy="321.1" r="5.6"/><circle cx="526.4" cy="359.7" r="5.6"/><circle cx="396.7" cy="534" r="5.6"/><circle cx="491.1" cy="365.2" r="5.6"/><circle cx="371.6" cy="541.2" r="5.6"/><circle cx="591.6" cy="464.9" r="5.6"/><circle cx="683.1" cy="317.1" r="5.6"/><circle cx="177.6" cy="615.7" r="5.6"/><circle cx="712.9" cy="565.4" r="5.6"/><circle cx="358.1" cy="320.7" r="5.6"/><circle cx="564.4" cy="485" r="5.6"/><circle cx="586.9" cy="312.6" r="5.6"/><circle cx="459.8" cy="433.1" r="5.6"/><circle cx="394.7" cy="385.5" r="5.6"/><circle cx="566.3" cy="355.7" r="5.6"/><circle cx="563.4" cy="471.6" r="5.6"/><circle cx="610.5" cy="439.2" r="5.6"/><circle cx="222.6" cy="464.7" r="5.6"/><circle cx="297.2" cy="196.3" r="5.6"/><circle cx="740.4" cy="406.4" r="5.6"/><circle cx="653.7" cy="376" r="5.6"/><circle cx="553.8" cy="444.9" r="5.6"/><circle cx="638.6" cy="440.1" r="5.6"/><circle cx="674.2" cy="305.5" r="5.6"/><circle cx="183.7" cy="466" r="5.6"/><circle cx="685.1" cy="415.6" r="5.6"/><circle cx="434.2" cy="390.7" r="5.6"/><circle cx="561.6" cy="457.2" r="5.6"/><circle cx="474.7" cy="260" r="5.6"/><circle cx="619.1" cy="533.6" r="5.6"/><circle cx="478.4" cy="257" r="5.6"/><circle cx="625.6" cy="451.7" r="5.6"/><circle cx="443.4" cy="308.5" r="5.6"/><circle cx="362.5" cy="592.1" r="5.6"/><circle cx="676.4" cy="335.1" r="5.6"/><circle cx="589.1" cy="341.7" r="5.6"/><circle cx="730.8" cy="515.7" r="5.6"/><circle cx="522.6" cy="484.3" r="5.6"/><circle cx="643.6" cy="396.6" r="5.6"/><circle cx="760.6" cy="313.5" r="5.6"/><circle cx="456.7" cy="484" r="5.6"/><circle cx="326.3" cy="445.5" r="5.6"/><circle cx="492.4" cy="292.9" r="5.6"/><circle cx="477.8" cy="514.8" r="5.6"/><circle cx="540.1" cy="342.1" r="5.6"/><circle cx="776" cy="377.9" r="5.6"/><circle cx="450.2" cy="512.3" r="5.6"/><circle cx="596" cy="477.7" r="5.6"/><circle cx="474.8" cy="356.2" r="5.6"/><circle cx="503.1" cy="398.7" r="5.6"/><circle cx="549.5" cy="300.3" r="5.6"/><circle cx="725.2" cy="467.2" r="5.6"/><circle cx="518.7" cy="561.3" r="5.6"/><circle cx="649" cy="334.2" r="5.6"/><circle cx="602.6" cy="465.6" r="5.6"/><circle cx="626.5" cy="405" r="5.6"/><circle cx="448.4" cy="282.5" r="5.6"/><circle cx="728.6" cy="432.6" r="5.6"/><circle cx="481.2" cy="296.3" r="5.6"/><circle cx="522" cy="514.8" r="5.6"/><circle cx="697.9" cy="336.1" r="5.6"/><circle cx="704.8" cy="395.3" r="5.6"/><circle cx="397.3" cy="491" r="5.6"/><circle cx="412.7" cy="533.4" r="5.6"/><circle cx="354.9" cy="424.2" r="5.6"/><circle cx="574.8" cy="402.6" r="5.6"/><circle cx="527.6" cy="396.1" r="5.6"/><circle cx="580.9" cy="376.3" r="5.6"/><circle cx="570.6" cy="454.4" r="5.6"/><circle cx="460.9" cy="469.5" r="5.6"/><circle cx="392.8" cy="407.8" r="5.6"/><circle cx="679.1" cy="463.2" r="5.6"/><circle cx="610.7" cy="315.3" r="5.6"/><circle cx="321.2" cy="415.5" r="5.6"/><circle cx="503.5" cy="472.7" r="5.6"/><circle cx="405.3" cy="576.8" r="5.6"/><circle cx="251.4" cy="487" r="5.6"/><circle cx="569.1" cy="254" r="5.6"/><circle cx="510.3" cy="468.6" r="5.6"/><circle cx="481.3" cy="488.8" r="5.6"/><circle cx="532.9" cy="364.5" r="5.6"/><circle cx="616.1" cy="377.9" r="5.6"/><circle cx="529.2" cy="356.2" r="5.6"/><circle cx="449.5" cy="449.2" r="5.6"/><circle cx="426.1" cy="332.8" r="5.6"/><circle cx="497.6" cy="519.1" r="5.6"/><circle cx="572.2" cy="425" r="5.6"/><circle cx="376.6" cy="485.1" r="5.6"/><circle cx="481.5" cy="364.6" r="5.6"/><circle cx="673.5" cy="408" r="5.6"/><circle cx="514" cy="330.9" r="5.6"/><circle cx="441.8" cy="256.1" r="5.6"/><circle cx="457.9" cy="408.7" r="5.6"/><circle cx="667.2" cy="459.7" r="5.6"/><circle cx="629.2" cy="490.6" r="5.6"/><circle cx="682.8" cy="436.4" r="5.6"/><circle cx="508.4" cy="423.4" r="5.6"/><circle cx="578.6" cy="254.4" r="5.6"/><circle cx="473.8" cy="521.2" r="5.6"/><circle cx="629.2" cy="511.9" r="5.6"/><circle cx="452.4" cy="458.1" r="5.6"/><circle cx="333.3" cy="380.8" r="5.6"/><circle cx="537.2" cy="352.7" r="5.6"/><circle cx="820.9" cy="490.6" r="5.6"/><circle cx="601.7" cy="404" r="5.6"/><circle cx="681.5" cy="419.4" r="5.6"/><circle cx="589.6" cy="322.7" r="5.6"/><circle cx="461.1" cy="336.8" r="5.6"/><circle cx="520" cy="451.4" r="5.6"/><circle cx="503.6" cy="421.3" r="5.6"/><circle cx="429.2" cy="367" r="5.6"/><circle cx="633.9" cy="557" r="5.6"/><circle cx="371.2" cy="454.9" r="5.6"/><circle cx="651.6" cy="370.8" r="5.6"/><circle cx="669" cy="463.8" r="5.6"/><circle cx="344.5" cy="431.4" r="5.6"/><circle cx="641.2" cy="423.5" r="5.6"/><circle cx="854.8" cy="469.5" r="5.6"/><circle cx="419.9" cy="504.4" r="5.6"/><circle cx="643.6" cy="434.7" r="5.6"/><circle cx="385.7" cy="451.5" r="5.6"/><circle cx="675.5" cy="347.1" r="5.6"/><circle cx="547.9" cy="292.7" r="5.6"/><circle cx="773" cy="417" r="5.6"/><circle cx="320.6" cy="395.9" r="5.6"/><circle cx="509.1" cy="427.2" r="5.6"/><circle cx="423.9" cy="371.8" r="5.6"/><circle cx="489.9" cy="404.1" r="5.6"/><circle cx="412.5" cy="402.9" r="5.6"/><circle cx="389.9" cy="331.7" r="5.6"/><circle cx="626.3" cy="503.4" r="5.6"/><circle cx="363.9" cy="306.2" r="5.6"/><circle cx="721.4" cy="384.9" r="5.6"/><circle cx="352.2" cy="412" r="5.6"/><circle cx="557.4" cy="470" r="5.6"/><circle cx="558.5" cy="428.9" r="5.6"/><circle cx="587.4" cy="386.2" r="5.6"/><circle cx="447.6" cy="591.1" r="5.6"/><circle cx="553.6" cy="473.4" r="5.6"/><circle cx="651.2" cy="368" r="5.6"/><circle cx="318.8" cy="453.2" r="5.6"/><circle cx="403" cy="490.9" r="5.6"/><circle cx="560.7" cy="472.3" r="5.6"/><circle cx="429.8" cy="401.2" r="5.6"/><circle cx="676.6" cy="547.1" r="5.6"/><circle cx="578.9" cy="342.4" r="5.6"/><circle cx="499.1" cy="598" r="5.6"/><circle cx="299.4" cy="469.5" r="5.6"/><circle cx="541.8" cy="488.6" r="5.6"/><circle cx="492.7" cy="528.4" r="5.6"/><circle cx="476.2" cy="508.4" r="5.6"/><circle cx="387.9" cy="409.8" r="5.6"/><circle cx="563.2" cy="426.4" r="5.6"/><circle cx="373.5" cy="451.3" r="5.6"/><circle cx="492.5" cy="615.6" r="5.6"/><circle cx="603.5" cy="532.8" r="5.6"/><circle cx="433.2" cy="438.5" r="5.6"/><circle cx="603" cy="491.8" r="5.6"/><circle cx="327.7" cy="493.1" r="5.6"/><circle cx="131.2" cy="348.2" r="5.6"/><circle cx="605.4" cy="406.9" r="5.6"/><circle cx="645.6" cy="505" r="5.6"/><circle cx="451.1" cy="458.8" r="5.6"/><circle cx="567.5" cy="440.4" r="5.6"/><circle cx="382.9" cy="486" r="5.6"/><circle cx="500.2" cy="501.9" r="5.6"/><circle cx="268.8" cy="437.2" r="5.6"/><circle cx="706.7" cy="356.7" r="5.6"/><circle cx="763.9" cy="392.2" r="5.6"/><circle cx="649.4" cy="430.9" r="5.6"/><circle cx="524.2" cy="390.3" r="5.6"/><circle cx="505.7" cy="354.8" r="5.6"/><circle cx="335.9" cy="443.3" r="5.6"/><circle cx="602.6" cy="377.1" r="5.6"/><circle cx="465.5" cy="515" r="5.6"/><circle cx="437.8" cy="446.4" r="5.6"/><circle cx="300.1" cy="460.8" r="5.6"/><circle cx="489.4" cy="407.9" r="5.6"/><circle cx="401.9" cy="396" r="5.6"/><circle cx="481.4" cy="435.4" r="5.6"/><circle cx="338" cy="489.7" r="5.6"/><circle cx="726.6" cy="487.6" r="5.6"/><circle cx="510.1" cy="397.7" r="5.6"/><circle cx="672.2" cy="304" r="5.6"/><circle cx="174.2" cy="501.1" r="5.6"/><circle cx="432.7" cy="453.1" r="5.6"/><circle cx="431.5" cy="397.9" r="5.6"/><circle cx="349" cy="473.4" r="5.6"/><circle cx="766.1" cy="407.2" r="5.6"/><circle cx="351.6" cy="435.3" r="5.6"/><circle cx="538.8" cy="481.8" r="5.6"/><circle cx="623.5" cy="347" r="5.6"/><circle cx="558.4" cy="351.9" r="5.6"/><circle cx="416.3" cy="342.7" r="5.6"/><circle cx="651.2" cy="311.8" r="5.6"/><circle cx="523.5" cy="460.6" r="5.6"/><circle cx="347.2" cy="462.6" r="5.6"/><circle cx="312.8" cy="405.1" r="5.6"/><circle cx="777.4" cy="355.8" r="5.6"/><circle cx="437" cy="454.2" r="5.6"/><circle cx="278.5" cy="467.4" r="5.6"/><circle cx="575.6" cy="468.3" r="5.6"/><circle cx="560.2" cy="296.7" r="5.6"/><circle cx="298.1" cy="632.7" r="5.6"/><circle cx="219.9" cy="441.7" r="5.6"/><circle cx="531.6" cy="421.8" r="5.6"/><circle cx="686.3" cy="504.8" r="5.6"/><circle cx="618.1" cy="387.5" r="5.6"/><circle cx="447.9" cy="586.8" r="5.6"/><circle cx="387.4" cy="344.6" r="5.6"/><circle cx="589" cy="561.5" r="5.6"/><circle cx="507.1" cy="600" r="5.6"/><circle cx="583.9" cy="479.4" r="5.6"/><circle cx="498" cy="413.4" r="5.6"/><circle cx="666.2" cy="473.4" r="5.6"/><circle cx="439.5" cy="475.6" r="5.6"/><circle cx="456.2" cy="393.6" r="5.6"/><circle cx="628.5" cy="506.4" r="5.6"/><circle cx="626.6" cy="420.6" r="5.6"/><circle cx="271" cy="391.7" r="5.6"/><circle cx="561.6" cy="288.2" r="5.6"/><circle cx="632.1" cy="381.7" r="5.6"/><circle cx="282.2" cy="282.5" r="5.6"/><circle cx="567.8" cy="379.6" r="5.6"/><circle cx="411.7" cy="426.5" r="5.6"/><circle cx="651.6" cy="602.8" r="5.6"/><circle cx="609.4" cy="522.1" r="5.6"/><circle cx="593.6" cy="440.8" r="5.6"/><circle cx="547.5" cy="363" r="5.6"/><circle cx="620.4" cy="442.1" r="5.6"/><circle cx="695.4" cy="368" r="5.6"/><circle cx="810" cy="502" r="5.6"/><circle cx="492.3" cy="442" r="5.6"/><circle cx="197.9" cy="413.4" r="5.6"/><circle cx="537" cy="452.5" r="5.6"/><circle cx="541.9" cy="410.5" r="5.6"/><circle cx="500.7" cy="478.2" r="5.6"/><circle cx="595.3" cy="387.3" r="5.6"/><circle cx="633.4" cy="420.6" r="5.6"/><circle cx="413.6" cy="424.4" r="5.6"/><circle cx="454.4" cy="582.1" r="5.6"/><circle cx="596.2" cy="477.7" r="5.6"/><circle cx="417.1" cy="545.1" r="5.6"/><circle cx="501.6" cy="551.1" r="5.6"/><circle cx="212.3" cy="468.4" r="5.6"/><circle cx="357.4" cy="439.6" r="5.6"/><circle cx="359.8" cy="407" r="5.6"/><circle cx="388.3" cy="333.8" r="5.6"/><circle cx="418.8" cy="387.5" r="5.6"/><circle cx="566.4" cy="335" r="5.6"/><circle cx="645.5" cy="459.3" r="5.6"/><circle cx="448.7" cy="453.7" r="5.6"/><circle cx="411.4" cy="339.4" r="5.6"/><circle cx="358.5" cy="424.7" r="5.6"/><circle cx="478.1" cy="564.6" r="5.6"/><circle cx="465.8" cy="490.8" r="5.6"/><circle cx="618.3" cy="338.8" r="5.6"/><circle cx="443.3" cy="470.5" r="5.6"/><circle cx="264.9" cy="407.4" r="5.6"/><circle cx="485.8" cy="418.6" r="5.6"/><circle cx="671.7" cy="455.6" r="5.6"/><circle cx="658.2" cy="442" r="5.6"/><circle cx="415.5" cy="393.4" r="5.6"/><circle cx="315.1" cy="412.7" r="5.6"/><circle cx="897.4" cy="310.9" r="5.6"/><circle cx="474.8" cy="436.6" r="5.6"/><circle cx="528.5" cy="500.9" r="5.6"/><circle cx="586.5" cy="406.6" r="5.6"/><circle cx="329.4" cy="374.3" r="5.6"/><circle cx="413.7" cy="235.2" r="5.6"/><circle cx="320.9" cy="469" r="5.6"/><circle cx="392.4" cy="448.7" r="5.6"/><circle cx="545.3" cy="348.6" r="5.6"/><circle cx="308.8" cy="319.6" r="5.6"/><circle cx="631.6" cy="476.4" r="5.6"/><circle cx="582" cy="367.3" r="5.6"/><circle cx="418.9" cy="475.4" r="5.6"/><circle cx="573.6" cy="502.6" r="5.6"/><circle cx="617.6" cy="365.5" r="5.6"/><circle cx="701.4" cy="411.1" r="5.6"/><circle cx="489.7" cy="390.2" r="5.6"/><circle cx="506.2" cy="470.1" r="5.6"/><circle cx="496.1" cy="271.8" r="5.6"/><circle cx="689.1" cy="356.1" r="5.6"/><circle cx="705.3" cy="450.2" r="5.6"/><circle cx="615.6" cy="357.1" r="5.6"/><circle cx="464.8" cy="522.1" r="5.6"/><circle cx="582.7" cy="432.3" r="5.6"/><circle cx="580.3" cy="303.6" r="5.6"/><circle cx="408.1" cy="445.7" r="5.6"/><circle cx="250.3" cy="351.3" r="5.6"/><circle cx="611.9" cy="437.1" r="5.6"/><circle cx="336.1" cy="622.6" r="5.6"/><circle cx="546.4" cy="497.3" r="5.6"/><circle cx="583.2" cy="404.8" r="5.6"/><circle cx="617.9" cy="300.8" r="5.6"/><circle cx="521.9" cy="467.3" r="5.6"/><circle cx="390.1" cy="399.3" r="5.6"/><circle cx="629.4" cy="493.9" r="5.6"/><circle cx="756.7" cy="496.9" r="5.6"/><circle cx="662" cy="483.8" r="5.6"/><circle cx="277.6" cy="320.2" r="5.6"/><circle cx="709.1" cy="336.2" r="5.6"/><circle cx="533.8" cy="374.8" r="5.6"/><circle cx="590.2" cy="326.1" r="5.6"/><circle cx="618.8" cy="455" r="5.6"/><circle cx="524.5" cy="360.8" r="5.6"/><circle cx="522" cy="405.8" r="5.6"/><circle cx="686.3" cy="506.2" r="5.6"/><circle cx="605" cy="485.6" r="5.6"/><circle cx="634.6" cy="410.2" r="5.6"/><circle cx="822.2" cy="389.9" r="5.6"/><circle cx="577.1" cy="441.3" r="5.6"/><circle cx="577.1" cy="506.2" r="5.6"/><circle cx="232.7" cy="607.8" r="5.6"/><circle cx="864" cy="370.1" r="5.6"/><circle cx="423.6" cy="445.3" r="5.6"/><circle cx="826.8" cy="362" r="5.6"/><circle cx="573.6" cy="548.2" r="5.6"/><circle cx="750.6" cy="519.8" r="5.6"/><circle cx="476.7" cy="428.4" r="5.6"/><circle cx="562.2" cy="533.3" r="5.6"/><circle cx="552.9" cy="585.4" r="5.6"/><circle cx="478.4" cy="355.8" r="5.6"/><circle cx="498.3" cy="346.9" r="5.6"/><circle cx="633.1" cy="499.2" r="5.6"/><circle cx="521.5" cy="448.2" r="5.6"/><circle cx="252.2" cy="527.1" r="5.6"/><circle cx="489.3" cy="395.9" r="5.6"/><circle cx="606.9" cy="422.6" r="5.6"/><circle cx="590.1" cy="489.1" r="5.6"/><circle cx="617" cy="484" r="5.6"/><circle cx="274.7" cy="516.8" r="5.6"/><circle cx="583" cy="384.8" r="5.6"/><circle cx="647.9" cy="368.8" r="5.6"/><circle cx="712.4" cy="385.7" r="5.6"/><circle cx="472.3" cy="490.9" r="5.6"/><circle cx="491.6" cy="573" r="5.6"/><circle cx="732" cy="370.8" r="5.6"/><circle cx="252.9" cy="440.6" r="5.6"/><circle cx="448.7" cy="425.8" r="5.6"/><circle cx="578.8" cy="333.2" r="5.6"/><circle cx="287.1" cy="502.7" r="5.6"/><circle cx="561.5" cy="325.5" r="5.6"/><circle cx="807" cy="449.4" r="5.6"/><circle cx="537.9" cy="482.7" r="5.6"/><circle cx="449.4" cy="436.6" r="5.6"/><circle cx="558.1" cy="384" r="5.6"/><circle cx="466.8" cy="438.6" r="5.6"/><circle cx="619" cy="490.9" r="5.6"/><circle cx="662" cy="442.2" r="5.6"/><circle cx="494" cy="629.7" r="5.6"/><circle cx="389.7" cy="472.9" r="5.6"/><circle cx="361.2" cy="392.6" r="5.6"/><circle cx="442.8" cy="439" r="5.6"/><circle cx="659.1" cy="363.5" r="5.6"/><circle cx="211.4" cy="386.9" r="5.6"/><circle cx="277" cy="379.1" r="5.6"/><circle cx="457.5" cy="373.2" r="5.6"/><circle cx="546.4" cy="560.9" r="5.6"/><circle cx="389.6" cy="425.3" r="5.6"/><circle cx="655.4" cy="283.2" r="5.6"/><circle cx="563.3" cy="459.5" r="5.6"/><circle cx="522.5" cy="387.5" r="5.6"/><circle cx="626.3" cy="404.9" r="5.6"/><circle cx="578.2" cy="373.9" r="5.6"/><circle cx="468.3" cy="447.3" r="5.6"/><circle cx="536.2" cy="472.6" r="5.6"/><circle cx="637.7" cy="415.3" r="5.6"/><circle cx="543.1" cy="399.8" r="5.6"/><circle cx="431.8" cy="440.4" r="5.6"/><circle cx="620.8" cy="412.9" r="5.6"/><circle cx="649.4" cy="378.6" r="5.6"/><circle cx="576.7" cy="486.5" r="5.6"/><circle cx="547.1" cy="327" r="5.6"/><circle cx="496.8" cy="238" r="5.6"/><circle cx="849.8" cy="291.5" r="5.6"/><circle cx="564.3" cy="458.5" r="5.6"/><circle cx="529.3" cy="576.8" r="5.6"/><circle cx="198.9" cy="432" r="5.6"/><circle cx="293.2" cy="355.1" r="5.6"/><circle cx="524.2" cy="358.9" r="5.6"/><circle cx="571.6" cy="525" r="5.6"/><circle cx="587.6" cy="515.6" r="5.6"/><circle cx="607.3" cy="403.7" r="5.6"/><circle cx="459.6" cy="367.1" r="5.6"/><circle cx="723.6" cy="346.8" r="5.6"/><circle cx="383.1" cy="357.3" r="5.6"/><circle cx="366.2" cy="509.2" r="5.6"/><circle cx="350" cy="536.5" r="5.6"/><circle cx="614.7" cy="584.1" r="5.6"/><circle cx="523.5" cy="381.6" r="5.6"/><circle cx="656.7" cy="351.8" r="5.6"/><circle cx="454.9" cy="392.1" r="5.6"/><circle cx="427.4" cy="511.2" r="5.6"/><circle cx="488.8" cy="295.3" r="5.6"/><circle cx="240.9" cy="459" r="5.6"/><circle cx="365.1" cy="280.4" r="5.6"/><circle cx="309.7" cy="381.7" r="5.6"/><circle cx="673.7" cy="318.4" r="5.6"/><circle cx="440.8" cy="397.4" r="5.6"/><circle cx="643.3" cy="424.5" r="5.6"/><circle cx="753.2" cy="500.5" r="5.6"/><circle cx="489.3" cy="468.4" r="5.6"/><circle cx="549.6" cy="423" r="5.6"/><circle cx="298.6" cy="408.9" r="5.6"/><circle cx="406.2" cy="428.3" r="5.6"/><circle cx="544.5" cy="437.8" r="5.6"/><circle cx="586.1" cy="407.4" r="5.6"/><circle cx="409.3" cy="468.2" r="5.6"/><circle cx="886.6" cy="452.3" r="5.6"/><circle cx="480.7" cy="547.1" r="5.6"/><circle cx="544.6" cy="352.6" r="5.6"/><circle cx="618.1" cy="415.3" r="5.6"/><circle cx="530.1" cy="430" r="5.6"/><circle cx="447.5" cy="487.9" r="5.6"/><circle cx="647.9" cy="435.2" r="5.6"/><circle cx="728.4" cy="502.2" r="5.6"/><circle cx="493.7" cy="506.5" r="5.6"/><circle cx="629.5" cy="581.3" r="5.6"/><circle cx="489.4" cy="338.8" r="5.6"/><circle cx="660.8" cy="406.1" r="5.6"/><circle cx="325.1" cy="516.3" r="5.6"/><circle cx="864.3" cy="316" r="5.6"/><circle cx="428.5" cy="371.8" r="5.6"/><circle cx="313.3" cy="366.6" r="5.6"/><circle cx="501.4" cy="445.1" r="5.6"/><circle cx="531.9" cy="455" r="5.6"/><circle cx="763.2" cy="423.6" r="5.6"/><circle cx="666.6" cy="385.6" r="5.6"/><circle cx="518.2" cy="352.2" r="5.6"/><circle cx="294" cy="293" r="5.6"/><circle cx="386.6" cy="466.6" r="5.6"/><circle cx="509.8" cy="507.9" r="5.6"/><circle cx="894.2" cy="402.8" r="5.6"/><circle cx="271.2" cy="180.8" r="5.6"/><circle cx="708" cy="454.8" r="5.6"/><circle cx="410.3" cy="325.2" r="5.6"/><circle cx="742.7" cy="432.7" r="5.6"/><circle cx="371" cy="467.7" r="5.6"/><circle cx="510.6" cy="476.7" r="5.6"/><circle cx="331.4" cy="440.7" r="5.6"/><circle cx="620" cy="278.3" r="5.6"/><circle cx="743.7" cy="391.1" r="5.6"/><circle cx="816.4" cy="374.3" r="5.6"/><circle cx="617.9" cy="346.7" r="5.6"/><circle cx="759.4" cy="238.9" r="5.6"/><circle cx="674.6" cy="349.2" r="5.6"/><circle cx="533.7" cy="543.9" r="5.6"/><circle cx="585.6" cy="504.9" r="5.6"/><circle cx="397.9" cy="559.5" r="5.6"/><circle cx="523.3" cy="661.8" r="5.6"/><circle cx="697.3" cy="309.3" r="5.6"/><circle cx="577.7" cy="458.1" r="5.6"/><circle cx="613.1" cy="389.6" r="5.6"/><circle cx="389.9" cy="330" r="5.6"/><circle cx="402.4" cy="463.5" r="5.6"/><circle cx="422.4" cy="437.3" r="5.6"/><circle cx="599.7" cy="393.1" r="5.6"/><circle cx="354.1" cy="404.7" r="5.6"/><circle cx="630.1" cy="486.4" r="5.6"/><circle cx="330.9" cy="362.8" r="5.6"/><circle cx="750.5" cy="364.9" r="5.6"/><circle cx="549.3" cy="439.6" r="5.6"/><circle cx="413.8" cy="525.5" r="5.6"/><circle cx="568" cy="369.3" r="5.6"/><circle cx="481.4" cy="305.9" r="5.6"/><circle cx="570.1" cy="305" r="5.6"/><circle cx="523.2" cy="344.8" r="5.6"/><circle cx="411.7" cy="469.9" r="5.6"/><circle cx="413.5" cy="469.8" r="5.6"/><circle cx="576.7" cy="470.4" r="5.6"/><circle cx="732.2" cy="446.1" r="5.6"/><circle cx="692.1" cy="359.7" r="5.6"/><circle cx="441.6" cy="404.2" r="5.6"/><circle cx="663.8" cy="574.6" r="5.6"/><circle cx="505.1" cy="575.3" r="5.6"/><circle cx="547.6" cy="420.5" r="5.6"/><circle cx="572.3" cy="409.5" r="5.6"/><circle cx="892.1" cy="602" r="5.6"/><circle cx="349.6" cy="494.4" r="5.6"/><circle cx="555.5" cy="421" r="5.6"/><circle cx="257.5" cy="307.3" r="5.6"/><circle cx="631.3" cy="588.8" r="5.6"/><circle cx="681.4" cy="521.3" r="5.6"/><circle cx="740.6" cy="506.2" r="5.6"/><circle cx="266.8" cy="417.8" r="5.6"/><circle cx="588.6" cy="393.2" r="5.6"/><circle cx="755.9" cy="441.9" r="5.6"/><circle cx="439.6" cy="555" r="5.6"/><circle cx="496.8" cy="475.5" r="5.6"/><circle cx="533.4" cy="470.1" r="5.6"/><circle cx="551.3" cy="434.6" r="5.6"/><circle cx="625.8" cy="285" r="5.6"/><circle cx="673.7" cy="468.3" r="5.6"/><circle cx="523.1" cy="417.4" r="5.6"/><circle cx="578.6" cy="482.4" r="5.6"/><circle cx="877.7" cy="513.6" r="5.6"/><circle cx="591.4" cy="367.9" r="5.6"/><circle cx="539.9" cy="507.2" r="5.6"/><circle cx="306.4" cy="198.3" r="5.6"/><circle cx="517.6" cy="413.6" r="5.6"/><circle cx="459.4" cy="414.5" r="5.6"/><circle cx="536.1" cy="428.9" r="5.6"/><circle cx="429.6" cy="270.3" r="5.6"/><circle cx="428.6" cy="370.2" r="5.6"/><circle cx="410.6" cy="444.9" r="5.6"/><circle cx="468.2" cy="517.1" r="5.6"/><circle cx="712.5" cy="501.3" r="5.6"/><circle cx="657.3" cy="480.7" r="5.6"/><circle cx="495.2" cy="325.1" r="5.6"/><circle cx="255.4" cy="442.2" r="5.6"/><circle cx="370.4" cy="485.1" r="5.6"/><circle cx="431.7" cy="355.5" r="5.6"/><circle cx="565.1" cy="312.6" r="5.6"/><circle cx="422.9" cy="481.9" r="5.6"/><circle cx="811.4" cy="450" r="5.6"/><circle cx="448.2" cy="390.7" r="5.6"/><circle cx="348" cy="427.5" r="5.6"/><circle cx="467.1" cy="385" r="5.6"/><circle cx="387.9" cy="285" r="5.6"/><circle cx="567.3" cy="428.5" r="5.6"/><circle cx="530.1" cy="441.4" r="5.6"/><circle cx="553.3" cy="377.9" r="5.6"/><circle cx="319.6" cy="436.1" r="5.6"/><circle cx="516.5" cy="364.8" r="5.6"/><circle cx="582.9" cy="440.7" r="5.6"/><circle cx="318.2" cy="391.2" r="5.6"/><circle cx="622.3" cy="543.5" r="5.6"/><circle cx="657.8" cy="419.6" r="5.6"/><circle cx="817.4" cy="450.9" r="5.6"/><circle cx="558.8" cy="521.3" r="5.6"/><circle cx="521" cy="455" r="5.6"/><circle cx="545.1" cy="391.4" r="5.6"/><circle cx="506.7" cy="411.1" r="5.6"/><circle cx="289.2" cy="375.7" r="5.6"/><circle cx="254.2" cy="348.1" r="5.6"/><circle cx="488.5" cy="351" r="5.6"/><circle cx="421.3" cy="449.4" r="5.6"/><circle cx="546.2" cy="533.4" r="5.6"/><circle cx="217.1" cy="454" r="5.6"/><circle cx="294.7" cy="330" r="5.6"/><circle cx="335.6" cy="433.7" r="5.6"/><circle cx="656.7" cy="552.6" r="5.6"/><circle cx="362.9" cy="385.6" r="5.6"/><circle cx="442.9" cy="405.6" r="5.6"/><circle cx="504.8" cy="451.7" r="5.6"/><circle cx="498.4" cy="411.1" r="5.6"/><circle cx="506" cy="303.6" r="5.6"/><circle cx="860.5" cy="304.6" r="5.6"/><circle cx="343.2" cy="462.7" r="5.6"/><circle cx="450.5" cy="419.3" r="5.6"/><circle cx="425.2" cy="542.3" r="5.6"/><circle cx="709.7" cy="472.5" r="5.6"/><circle cx="443.3" cy="261.8" r="5.6"/><circle cx="543" cy="301.2" r="5.6"/><circle cx="615.4" cy="435.3" r="5.6"/><circle cx="345.9" cy="481.3" r="5.6"/><circle cx="761.5" cy="528.1" r="5.6"/><circle cx="619.6" cy="242.4" r="5.6"/><circle cx="358.5" cy="416" r="5.6"/><circle cx="605.2" cy="470.9" r="5.6"/><circle cx="474.1" cy="331.4" r="5.6"/><circle cx="587.8" cy="513.8" r="5.6"/><circle cx="480.8" cy="358.9" r="5.6"/><circle cx="694.5" cy="299.5" r="5.6"/><circle cx="300.1" cy="442.2" r="5.6"/><circle cx="441.9" cy="303.1" r="5.6"/><circle cx="497.6" cy="370.8" r="5.6"/></g><path d="M122.5,407.1 L198.9,411.4 L227.3,413.2 L252.2,414.8 L266.5,415.6 L274.7,416.1 L282.9,416.6 L297.2,417.4 L301.8,417.6 L313.9,418.2 L320.9,418.5 L329.4,418.8 L335.9,419 L344.5,419.2 L349.6,419.3 L354.1,419.5 L357.4,419.6 L362.5,419.7 L370.4,420.1 L380.8,420.7 L386.6,421.1 L389.9,421.4 L394.4,421.8 L397.3,422 L401.6,422.4 L406.2,422.9 L411.2,423.3 L413.4,423.5 L416.7,423.7 L419.1,423.9 L423.9,424.1 L427.3,424.2 L429.6,424.3 L432.7,424.3 L435.4,424.3 L439.1,424.3 L442.8,424.3 L444.6,424.3 L448.7,424.2 L451.4,424.2 L456.7,424.1 L460.1,424 L461.8,423.9 L467.1,423.8 L470,423.7 L474.6,423.6 L476.7,423.6 L478.4,423.6 L481.4,423.5 L484.6,423.4 L488.1,423.3 L489.4,423.3 L491.8,423.2 L493.4,423.2 L496.1,423.1 L498.3,423.1 L501.4,423 L504,422.9 L506.7,422.8 L510.1,422.7 L514,422.6 L518.7,422.6 L522.6,422.5 L523.5,422.5 L525.6,422.5 L528.8,422.5 L531.6,422.5 L534.8,422.5 L537.8,422.6 L541.2,422.6 L543.5,422.6 L545.3,422.6 L547.1,422.6 L549.3,422.6 L552.9,422.7 L557.4,422.7 L560.5,422.6 L561.8,422.6 L564.4,422.6 L567.3,422.6 L570.6,422.5 L574.5,422.4 L576.7,422.3 L578.2,422.3 L580.9,422.2 L582.9,422.1 L586.1,422 L587.6,421.9 L590.1,421.8 L594.8,421.6 L599.7,421.5 L604.7,421.3 L607.3,421.2 L614,421.1 L616.6,421 L618.3,421 L620.5,420.9 L625.6,420.9 L628.3,420.8 L631.6,420.8 L633.4,420.8 L640,420.7 L645.5,420.7 L650.4,420.7 L655.1,420.7 L659.1,420.7 L666.2,420.7 L669,420.6 L673.7,420.5 L679.1,420.3 L685.1,420.1 L690.5,419.8 L697.3,419.5 L703.9,419.1 L709.7,418.9 L717.7,418.4 L726.6,418 L732.6,417.7 L750.5,417 L761.5,416.7 L773,416.4 L810.6,415.8 L820.9,415.6 L848.6,415.2 L872,414.7 L985.5,411.9" fill="none" stroke="#df536b" stroke-width="3" opacity="0.65"/><rect x="88" y="88" width="932" height="656" fill="none" stroke="#777" stroke-width="3"/><path d="M168.6,744V756M344,744V756M519.4,744V756M694.8,744V756M870.2,744V756M88,587.6H76M88,421.6H76M88,255.6H76M88,89.7H76" stroke="#777" stroke-width="3"/><text x="168.6" y="782" font-family="Liberation Sans" fill="#111" stroke="#111" stroke-width="0.5" font-size="18" text-anchor="middle">-10</text><text x="344" y="782" font-family="Liberation Sans" fill="#111" stroke="#111" stroke-width="0.5" font-size="18" text-anchor="middle">-5</text><text x="519.4" y="782" font-family="Liberation Sans" fill="#111" stroke="#111" stroke-width="0.5" font-size="18" text-anchor="middle">0</text><text x="694.8" y="782" font-family="Liberation Sans" fill="#111" stroke="#111" stroke-width="0.5" font-size="18" text-anchor="middle">5</text><text x="870.2" y="782" font-family="Liberation Sans" fill="#111" stroke="#111" stroke-width="0.5" font-size="18" text-anchor="middle">10</text><text transform="translate(58,587.6) rotate(-90)" font-family="Liberation Sans" fill="#111" stroke="#111" stroke-width="0.5" font-size="18" text-anchor="middle">-1</text><text transform="translate(58,421.6) rotate(-90)" font-family="Liberation Sans" fill="#111" stroke="#111" stroke-width="0.5" font-size="18" text-anchor="middle">0</text><text transform="translate(58,255.6) rotate(-90)" font-family="Liberation Sans" fill="#111" stroke="#111" stroke-width="0.5" font-size="18" text-anchor="middle">1</text><text transform="translate(58,89.7) rotate(-90)" font-family="Liberation Sans" fill="#111" stroke="#111" stroke-width="0.5" font-size="18" text-anchor="middle">2</text><text x="554" y="80" font-family="Liberation Sans" fill="#111" stroke="#111" stroke-width="0.5" font-size="18" text-anchor="middle">Residuals vs Fitted</text><text x="554" y="826" font-family="Liberation Sans" fill="#111" stroke="#111" stroke-width="0.5" font-size="18" text-anchor="middle">Fitted values</text><text x="554" y="844" font-family="Liberation Sans" fill="#111" stroke="#111" stroke-width="0.5" font-size="18" text-anchor="middle">lm(y ~ x1 + x2)</text><text transform="translate(14,416) rotate(-90)" font-family="Liberation Sans" fill="#111" stroke="#111" stroke-width="0.5" font-size="18" text-anchor="middle">Residuals</text><text x="405.6" y="159.4" font-family="Liberation Sans" fill="#111" stroke="#111" stroke-width="0.5" font-size="15">122</text><text x="509.7" y="683.1" font-family="Liberation Sans" fill="#111" stroke="#111" stroke-width="0.5" font-size="15">203</text><text x="277.8" y="186" font-family="Liberation Sans" fill="#111" stroke="#111" stroke-width="0.5" font-size="15">867</text></svg>
<svg style="left:1015px;top:1910px" width="266" height="214" viewBox="0 0 1064 856"><rect width="1064" height="856" fill="#fff"/><path d="M88,752.1L1020,129.7" stroke="#7f7f7f" stroke-width="3" stroke-dasharray="8 10" fill="none"/><g fill="none" stroke="#000" stroke-width="2.2"><circle cx="442" cy="516.8" r="5.6"/><circle cx="515.8" cy="469" r="5.6"/><circle cx="449.8" cy="513.1" r="5.6"/><circle cx="634.6" cy="386.7" r="5.6"/><circle cx="703.9" cy="342.1" r="5.6"/><circle cx="852.1" cy="244.5" r="5.6"/><circle cx="608.3" cy="407.5" r="5.6"/><circle cx="432.7" cy="524.5" r="5.6"/><circle cx="685.8" cy="350.9" r="5.6"/><circle cx="671.8" cy="362.2" r="5.6"/><circle cx="530.4" cy="460.9" r="5.6"/><circle cx="353.9" cy="578.8" r="5.6"/><circle cx="652" cy="373.7" r="5.6"/><circle cx="703.3" cy="342.4" r="5.6"/><circle cx="504" cy="476.4" r="5.6"/><circle cx="639" cy="383.2" r="5.6"/><circle cx="518.2" cy="467.3" r="5.6"/><circle cx="629.5" cy="390.1" r="5.6"/><circle cx="546.6" cy="448.6" r="5.6"/><circle cx="511.7" cy="472.5" r="5.6"/><circle cx="557.8" cy="442.7" r="5.6"/><circle cx="515.1" cy="469.1" r="5.6"/><circle cx="459.9" cy="505.4" r="5.6"/><circle cx="510.7" cy="472.8" r="5.6"/><circle cx="556.8" cy="444" r="5.6"/><circle cx="574" cy="431.3" r="5.6"/><circle cx="770.3" cy="303" r="5.6"/><circle cx="369.3" cy="564.5" r="5.6"/><circle cx="519.2" cy="466.2" r="5.6"/><circle cx="641.8" cy="381.9" r="5.6"/><circle cx="805.6" cy="283.8" r="5.6"/><circle cx="608.6" cy="407.1" r="5.6"/><circle cx="562.1" cy="440.4" r="5.6"/><circle cx="524.7" cy="463.9" r="5.6"/><circle cx="620.3" cy="398.5" r="5.6"/><circle cx="682.5" cy="352.9" r="5.6"/><circle cx="536" cy="457.6" r="5.6"/><circle cx="572.6" cy="432.4" r="5.6"/><circle cx="577" cy="429" r="5.6"/><circle cx="643.1" cy="381.8" r="5.6"/><circle cx="694.2" cy="346.7" r="5.6"/><circle cx="596.3" cy="416.6" r="5.6"/><circle cx="538" cy="456" r="5.6"/><circle cx="754.1" cy="308.8" r="5.6"/><circle cx="584" cy="425.5" r="5.6"/><circle cx="753.1" cy="310.8" r="5.6"/><circle cx="541" cy="453.3" r="5.6"/><circle cx="632.6" cy="388.1" r="5.6"/><circle cx="361.9" cy="574" r="5.6"/><circle cx="540.7" cy="453.4" r="5.6"/><circle cx="555.5" cy="444.5" r="5.6"/><circle cx="457.3" cy="507.9" r="5.6"/><circle cx="407.8" cy="539.8" r="5.6"/><circle cx="690.2" cy="348.3" r="5.6"/><circle cx="664.6" cy="365.8" r="5.6"/><circle cx="390.7" cy="548.7" r="5.6"/><circle cx="599.8" cy="414.4" r="5.6"/><circle cx="403.5" cy="542" r="5.6"/><circle cx="408.4" cy="538.7" r="5.6"/><circle cx="623.7" cy="396.3" r="5.6"/><circle cx="465.8" cy="499.5" r="5.6"/><circle cx="674.3" cy="359.6" r="5.6"/><circle cx="559.1" cy="442.3" r="5.6"/><circle cx="615.9" cy="403.1" r="5.6"/><circle cx="479.7" cy="492.9" r="5.6"/><circle cx="405.4" cy="540.8" r="5.6"/><circle cx="676.8" cy="357.5" r="5.6"/><circle cx="593.2" cy="419.7" r="5.6"/><circle cx="528" cy="462.4" r="5.6"/><circle cx="576" cy="429.7" r="5.6"/><circle cx="730.2" cy="323.9" r="5.6"/><circle cx="434.2" cy="521.2" r="5.6"/><circle cx="458.6" cy="505.8" r="5.6"/><circle cx="464.5" cy="501.5" r="5.6"/><circle cx="340.2" cy="589.9" r="5.6"/><circle cx="663.7" cy="366.5" r="5.6"/><circle cx="579.6" cy="427.5" r="5.6"/><circle cx="575.6" cy="430" r="5.6"/><circle cx="545.3" cy="449.8" r="5.6"/><circle cx="488.8" cy="485.9" r="5.6"/><circle cx="447.1" cy="514" r="5.6"/><circle cx="664.1" cy="366.4" r="5.6"/><circle cx="361" cy="574.5" r="5.6"/><circle cx="622.2" cy="397.2" r="5.6"/><circle cx="445.7" cy="514.9" r="5.6"/><circle cx="595.6" cy="417.3" r="5.6"/><circle cx="462.4" cy="502.9" r="5.6"/><circle cx="481.6" cy="491.7" r="5.6"/><circle cx="799.7" cy="287.9" r="5.6"/><circle cx="649.4" cy="375.8" r="5.6"/><circle cx="280.5" cy="627.3" r="5.6"/><circle cx="581" cy="427.3" r="5.6"/><circle cx="499" cy="479.1" r="5.6"/><circle cx="396.9" cy="544.4" r="5.6"/><circle cx="597.3" cy="415.7" r="5.6"/><circle cx="566.3" cy="436.5" r="5.6"/><circle cx="522.6" cy="464.9" r="5.6"/><circle cx="836.9" cy="257.7" r="5.6"/><circle cx="251.4" cy="645.8" r="5.6"/><circle cx="658.6" cy="369.8" r="5.6"/><circle cx="508.2" cy="473.7" r="5.6"/><circle cx="642.2" cy="381.8" r="5.6"/><circle cx="491.8" cy="484.4" r="5.6"/><circle cx="463.7" cy="501.9" r="5.6"/><circle cx="325.2" cy="602.7" r="5.6"/><circle cx="525.3" cy="463.8" r="5.6"/><circle cx="879.7" cy="222.5" r="5.6"/><circle cx="672.8" cy="360.7" r="5.6"/><circle cx="778.4" cy="298" r="5.6"/><circle cx="675.3" cy="359.1" r="5.6"/><circle cx="698.3" cy="345.4" r="5.6"/><circle cx="678.3" cy="357.4" r="5.6"/><circle cx="609" cy="406.6" r="5.6"/><circle cx="473" cy="495.5" r="5.6"/><circle cx="486.6" cy="488.3" r="5.6"/><circle cx="347.3" cy="582.6" r="5.6"/><circle cx="554.2" cy="445.2" r="5.6"/><circle cx="672.3" cy="362" r="5.6"/><circle cx="679.4" cy="356.8" r="5.6"/><circle cx="558.1" cy="442.6" r="5.6"/><circle cx="475" cy="495" r="5.6"/><circle cx="985.5" cy="154.7" r="5.6"/><circle cx="647.3" cy="377.9" r="5.6"/><circle cx="747" cy="315" r="5.6"/><circle cx="518.6" cy="466.8" r="5.6"/><circle cx="551.9" cy="446.1" r="5.6"/><circle cx="611.5" cy="404.5" r="5.6"/><circle cx="792.4" cy="292.9" r="5.6"/><circle cx="506.1" cy="475.5" r="5.6"/><circle cx="658.2" cy="370.5" r="5.6"/><circle cx="298.1" cy="620.7" r="5.6"/><circle cx="490.3" cy="485.2" r="5.6"/><circle cx="381" cy="555.7" r="5.6"/><circle cx="702" cy="342.8" r="5.6"/><circle cx="514.1" cy="470" r="5.6"/><circle cx="511" cy="472.7" r="5.6"/><circle cx="720.2" cy="327.8" r="5.6"/><circle cx="704.5" cy="341.8" r="5.6"/><circle cx="441" cy="517.5" r="5.6"/><circle cx="602.2" cy="412.4" r="5.6"/><circle cx="386.3" cy="551.1" r="5.6"/><circle cx="491.4" cy="484.5" r="5.6"/><circle cx="760.7" cy="305.2" r="5.6"/><circle cx="739.6" cy="317.3" r="5.6"/><circle cx="688.5" cy="349.2" r="5.6"/><circle cx="477.4" cy="493.8" r="5.6"/><circle cx="308.3" cy="617.5" r="5.6"/><circle cx="398.9" cy="543.9" r="5.6"/><circle cx="691.9" cy="347.8" r="5.6"/><circle cx="501.5" cy="477.5" r="5.6"/><circle cx="277.5" cy="631.2" r="5.6"/><circle cx="533.4" cy="459" r="5.6"/><circle cx="741.4" cy="316.7" r="5.6"/><circle cx="633" cy="388" r="5.6"/><circle cx="443.9" cy="516.2" r="5.6"/><circle cx="350.7" cy="581.4" r="5.6"/><circle cx="448" cy="513.8" r="5.6"/><circle cx="555.2" cy="444.5" r="5.6"/><circle cx="679.9" cy="356.3" r="5.6"/><circle cx="306.4" cy="617.9" r="5.6"/><circle cx="687.4" cy="349.7" r="5.6"/><circle cx="554.5" cy="445.1" r="5.6"/><circle cx="618.5" cy="399.7" r="5.6"/><circle cx="357" cy="576.6" r="5.6"/><circle cx="459" cy="505.7" r="5.6"/><circle cx="489.2" cy="485.7" r="5.6"/><circle cx="702.6" cy="342.6" r="5.6"/><circle cx="677.8" cy="357.4" r="5.6"/><circle cx="615.1" cy="403.4" r="5.6"/><circle cx="779.9" cy="297.1" r="5.6"/><circle cx="488" cy="487.6" r="5.6"/><circle cx="683.1" cy="351.7" r="5.6"/><circle cx="556.5" cy="444" r="5.6"/><circle cx="482.8" cy="491.3" r="5.6"/><circle cx="663.2" cy="366.8" r="5.6"/><circle cx="733.5" cy="321.4" r="5.6"/><circle cx="668.9" cy="362.9" r="5.6"/><circle cx="484.7" cy="489.9" r="5.6"/><circle cx="497.9" cy="479.2" r="5.6"/><circle cx="728.6" cy="324.5" r="5.6"/><circle cx="592.2" cy="420.7" r="5.6"/><circle cx="667.4" cy="363.5" r="5.6"/><circle cx="513.1" cy="471.3" r="5.6"/><circle cx="711.7" cy="334.4" r="5.6"/><circle cx="436.2" cy="518.5" r="5.6"/><circle cx="637.4" cy="384.3" r="5.6"/><circle cx="448.5" cy="513.3" r="5.6"/><circle cx="228.3" cy="665.1" r="5.6"/><circle cx="377.8" cy="557.6" r="5.6"/><circle cx="569.3" cy="435.5" r="5.6"/><circle cx="666" cy="364.3" r="5.6"/><circle cx="326.7" cy="599" r="5.6"/><circle cx="380.2" cy="556" r="5.6"/><circle cx="789.1" cy="293.1" r="5.6"/><circle cx="482" cy="491.6" r="5.6"/><circle cx="630.2" cy="389.6" r="5.6"/><circle cx="485.8" cy="488.7" r="5.6"/><circle cx="502.6" cy="477.1" r="5.6"/><circle cx="564.7" cy="437.7" r="5.6"/><circle cx="553.5" cy="445.3" r="5.6"/><circle cx="542.3" cy="451.5" r="5.6"/><circle cx="496.1" cy="480.1" r="5.6"/><circle cx="122.5" cy="719.7" r="5.6"/><circle cx="816.9" cy="268.9" r="5.6"/><circle cx="807.7" cy="282.3" r="5.6"/><circle cx="395.6" cy="544.9" r="5.6"/><circle cx="534" cy="458.9" r="5.6"/><circle cx="726.2" cy="324.7" r="5.6"/><circle cx="697.1" cy="345.6" r="5.6"/><circle cx="720.9" cy="327.4" r="5.6"/><circle cx="410.9" cy="537.5" r="5.6"/><circle cx="896.5" cy="212.5" r="5.6"/><circle cx="415.5" cy="535.6" r="5.6"/><circle cx="650.7" cy="375.1" r="5.6"/><circle cx="568" cy="435.9" r="5.6"/><circle cx="517.9" cy="467.4" r="5.6"/><circle cx="504.4" cy="476.1" r="5.6"/><circle cx="413.2" cy="536.7" r="5.6"/><circle cx="765.4" cy="304.7" r="5.6"/><circle cx="562.4" cy="440.2" r="5.6"/><circle cx="591.5" cy="421" r="5.6"/><circle cx="589.8" cy="422.2" r="5.6"/><circle cx="508.6" cy="473.6" r="5.6"/><circle cx="411.5" cy="537.5" r="5.6"/><circle cx="582.7" cy="426.2" r="5.6"/><circle cx="286" cy="626.6" r="5.6"/><circle cx="364.8" cy="571.2" r="5.6"/><circle cx="404.1" cy="541.8" r="5.6"/><circle cx="409.7" cy="538" r="5.6"/><circle cx="567.7" cy="436.2" r="5.6"/><circle cx="794.2" cy="291.9" r="5.6"/><circle cx="348.5" cy="582.2" r="5.6"/><circle cx="616.2" cy="403" r="5.6"/><circle cx="661.8" cy="367.6" r="5.6"/><circle cx="420" cy="533.3" r="5.6"/><circle cx="540" cy="454.4" r="5.6"/><circle cx="651.5" cy="373.8" r="5.6"/><circle cx="529" cy="461.8" r="5.6"/><circle cx="536.4" cy="457.4" r="5.6"/><circle cx="588.1" cy="423.3" r="5.6"/><circle cx="543.3" cy="450.6" r="5.6"/><circle cx="470.6" cy="496.7" r="5.6"/><circle cx="556.1" cy="444.3" r="5.6"/><circle cx="803.6" cy="284" r="5.6"/><circle cx="659.1" cy="369.1" r="5.6"/><circle cx="436.7" cy="518.2" r="5.6"/><circle cx="384.1" cy="554.4" r="5.6"/><circle cx="491" cy="484.7" r="5.6"/><circle cx="723.2" cy="326" r="5.6"/><circle cx="601.2" cy="412.7" r="5.6"/><circle cx="451.2" cy="512" r="5.6"/><circle cx="657.7" cy="370.9" r="5.6"/><circle cx="537.4" cy="456.7" r="5.6"/><circle cx="394.2" cy="545.1" r="5.6"/><circle cx="627.5" cy="392.1" r="5.6"/><circle cx="764.2" cy="305" r="5.6"/><circle cx="618.8" cy="399.5" r="5.6"/><circle cx="590.1" cy="421.4" r="5.6"/><circle cx="467.8" cy="498.9" r="5.6"/><circle cx="613.3" cy="404" r="5.6"/><circle cx="400.9" cy="543.2" r="5.6"/><circle cx="331" cy="596.6" r="5.6"/><circle cx="550.9" cy="446.4" r="5.6"/><circle cx="567.3" cy="436.4" r="5.6"/><circle cx="887.4" cy="220.4" r="5.6"/><circle cx="406.6" cy="540.3" r="5.6"/><circle cx="583.7" cy="425.8" r="5.6"/><circle cx="639.4" cy="383.2" r="5.6"/><circle cx="690.8" cy="348.2" r="5.6"/><circle cx="560.7" cy="441.7" r="5.6"/><circle cx="462" cy="503.2" r="5.6"/><circle cx="558.8" cy="442.5" r="5.6"/><circle cx="827.5" cy="263.6" r="5.6"/><circle cx="615.5" cy="403.3" r="5.6"/><circle cx="291.1" cy="625.1" r="5.6"/><circle cx="732.7" cy="321.6" r="5.6"/><circle cx="621.1" cy="397.3" r="5.6"/><circle cx="552.8" cy="445.4" r="5.6"/><circle cx="560.4" cy="442" r="5.6"/><circle cx="541.7" cy="452.8" r="5.6"/><circle cx="579.3" cy="427.7" r="5.6"/><circle cx="487.7" cy="487.6" r="5.6"/><circle cx="598.7" cy="415.3" r="5.6"/><circle cx="429.7" cy="527.9" r="5.6"/><circle cx="586.4" cy="424.8" r="5.6"/><circle cx="705.8" cy="340.6" r="5.6"/><circle cx="623.3" cy="396.7" r="5.6"/><circle cx="709.1" cy="338.7" r="5.6"/><circle cx="402.2" cy="542.8" r="5.6"/><circle cx="564.4" cy="437.7" r="5.6"/><circle cx="646.4" cy="379.5" r="5.6"/><circle cx="413.8" cy="536.6" r="5.6"/><circle cx="784.3" cy="294.4" r="5.6"/><circle cx="409.1" cy="538.1" r="5.6"/><circle cx="591.1" cy="421" r="5.6"/><circle cx="581.3" cy="427.1" r="5.6"/><circle cx="591.8" cy="420.8" r="5.6"/><circle cx="512" cy="472" r="5.6"/><circle cx="614" cy="403.7" r="5.6"/><circle cx="423.3" cy="531.9" r="5.6"/><circle cx="375.3" cy="562.1" r="5.6"/><circle cx="456" cy="508.8" r="5.6"/><circle cx="544.3" cy="450.5" r="5.6"/><circle cx="709.7" cy="337" r="5.6"/><circle cx="763" cy="305" r="5.6"/><circle cx="605.8" cy="410.3" r="5.6"/><circle cx="592.5" cy="419.9" r="5.6"/><circle cx="522" cy="465.2" r="5.6"/><circle cx="568.3" cy="435.7" r="5.6"/><circle cx="379.4" cy="557.1" r="5.6"/><circle cx="604" cy="410.8" r="5.6"/><circle cx="494.3" cy="483.2" r="5.6"/><circle cx="590.8" cy="421" r="5.6"/><circle cx="500.5" cy="478.3" r="5.6"/><circle cx="460.3" cy="505" r="5.6"/><circle cx="529.4" cy="461.6" r="5.6"/><circle cx="508.9" cy="473.4" r="5.6"/><circle cx="682" cy="352.9" r="5.6"/><circle cx="600.1" cy="413.2" r="5.6"/><circle cx="617" cy="400.4" r="5.6"/><circle cx="383.3" cy="554.5" r="5.6"/><circle cx="771.6" cy="303" r="5.6"/><circle cx="570" cy="434.7" r="5.6"/><circle cx="439.1" cy="517.9" r="5.6"/><circle cx="594.2" cy="418" r="5.6"/><circle cx="674.8" cy="359.4" r="5.6"/><circle cx="366.6" cy="566.9" r="5.6"/><circle cx="801.6" cy="285" r="5.6"/><circle cx="547.3" cy="448.4" r="5.6"/><circle cx="701.4" cy="343.2" r="5.6"/><circle cx="580" cy="427.5" r="5.6"/><circle cx="502.9" cy="476.7" r="5.6"/><circle cx="315.6" cy="612.2" r="5.6"/><circle cx="416.1" cy="535.6" r="5.6"/><circle cx="549.6" cy="447.1" r="5.6"/><circle cx="649" cy="376" r="5.6"/><circle cx="313.8" cy="615.7" r="5.6"/><circle cx="727" cy="324.5" r="5.6"/><circle cx="742.3" cy="316.7" r="5.6"/><circle cx="389.3" cy="549.5" r="5.6"/><circle cx="620" cy="398.8" r="5.6"/><circle cx="429.1" cy="528" r="5.6"/><circle cx="546.3" cy="449" r="5.6"/><circle cx="667.9" cy="363" r="5.6"/><circle cx="668.4" cy="363" r="5.6"/><circle cx="431.2" cy="525" r="5.6"/><circle cx="501.2" cy="477.7" r="5.6"/><circle cx="422.8" cy="532.4" r="5.6"/><circle cx="595.3" cy="417.4" r="5.6"/><circle cx="345" cy="583.3" r="5.6"/><circle cx="200.4" cy="675.6" r="5.6"/><circle cx="729.4" cy="324.2" r="5.6"/><circle cx="861.6" cy="240.1" r="5.6"/><circle cx="490.6" cy="485.1" r="5.6"/><circle cx="646" cy="379.6" r="5.6"/><circle cx="563.7" cy="438.6" r="5.6"/><circle cx="761.8" cy="305.1" r="5.6"/><circle cx="628.7" cy="391.6" r="5.6"/><circle cx="569.6" cy="435.4" r="5.6"/><circle cx="338.9" cy="590.6" r="5.6"/><circle cx="692.5" cy="347.7" r="5.6"/><circle cx="510.3" cy="472.9" r="5.6"/><circle cx="367.5" cy="565.3" r="5.6"/><circle cx="533" cy="459.1" r="5.6"/><circle cx="545" cy="450.1" r="5.6"/><circle cx="693" cy="347.5" r="5.6"/><circle cx="397.6" cy="544.2" r="5.6"/><circle cx="466.2" cy="499.3" r="5.6"/><circle cx="758.4" cy="307.2" r="5.6"/><circle cx="727.8" cy="324.5" r="5.6"/><circle cx="718" cy="329.1" r="5.6"/><circle cx="774.3" cy="302.1" r="5.6"/><circle cx="586" cy="424.9" r="5.6"/><circle cx="483.9" cy="490.7" r="5.6"/><circle cx="629.8" cy="389.8" r="5.6"/><circle cx="688" cy="349.3" r="5.6"/><circle cx="867" cy="235.4" r="5.6"/><circle cx="304.4" cy="617.9" r="5.6"/><circle cx="599.4" cy="414.8" r="5.6"/><circle cx="621.8" cy="397.2" r="5.6"/><circle cx="550.2" cy="446.8" r="5.6"/><circle cx="356" cy="577.8" r="5.6"/><circle cx="645.6" cy="379.6" r="5.6"/><circle cx="441.5" cy="517.4" r="5.6"/><circle cx="619.2" cy="399.2" r="5.6"/><circle cx="683.6" cy="351.7" r="5.6"/><circle cx="721.7" cy="326.3" r="5.6"/><circle cx="337.7" cy="591" r="5.6"/><circle cx="696" cy="346" r="5.6"/><circle cx="453.4" cy="510.8" r="5.6"/><circle cx="374.5" cy="562.4" r="5.6"/><circle cx="715.2" cy="332.3" r="5.6"/><circle cx="713.1" cy="333.9" r="5.6"/><circle cx="516.2" cy="468.9" r="5.6"/><circle cx="643.9" cy="381.5" r="5.6"/><circle cx="443.4" cy="516.5" r="5.6"/><circle cx="534.4" cy="458.3" r="5.6"/><circle cx="548.6" cy="447.5" r="5.6"/><circle cx="504.7" cy="476" r="5.6"/><circle cx="640.2" cy="382.4" r="5.6"/><circle cx="757.3" cy="307.7" r="5.6"/><circle cx="483.2" cy="490.9" r="5.6"/><circle cx="549.2" cy="447.1" r="5.6"/><circle cx="775.6" cy="300" r="5.6"/><circle cx="512.7" cy="471.5" r="5.6"/><circle cx="185.9" cy="683.6" r="5.6"/><circle cx="623" cy="396.7" r="5.6"/><circle cx="435.2" cy="519.8" r="5.6"/><circle cx="412" cy="537.2" r="5.6"/><circle cx="748" cy="314.5" r="5.6"/><circle cx="873" cy="224.2" r="5.6"/><circle cx="415" cy="536.2" r="5.6"/><circle cx="698.9" cy="344.6" r="5.6"/><circle cx="547.9" cy="448.3" r="5.6"/><circle cx="569" cy="435.5" r="5.6"/><circle cx="700.8" cy="343.8" r="5.6"/><circle cx="588.8" cy="423" r="5.6"/><circle cx="442.9" cy="516.5" r="5.6"/><circle cx="494" cy="483.4" r="5.6"/><circle cx="638.6" cy="383.3" r="5.6"/><circle cx="260.1" cy="643.9" r="5.6"/><circle cx="695.4" cy="346.2" r="5.6"/><circle cx="349.6" cy="581.4" r="5.6"/><circle cx="572" cy="433.6" r="5.6"/><circle cx="523" cy="464.7" r="5.6"/><circle cx="717.3" cy="329.7" r="5.6"/><circle cx="604.7" cy="410.5" r="5.6"/><circle cx="565.7" cy="436.7" r="5.6"/><circle cx="656.4" cy="371.6" r="5.6"/><circle cx="430.7" cy="526.7" r="5.6"/><circle cx="524.3" cy="464" r="5.6"/><circle cx="711.1" cy="334.9" r="5.6"/><circle cx="648.1" cy="376.4" r="5.6"/><circle cx="368.4" cy="564.5" r="5.6"/><circle cx="640.6" cy="382.4" r="5.6"/><circle cx="363.8" cy="572.3" r="5.6"/><circle cx="484.3" cy="490" r="5.6"/><circle cx="716.6" cy="330.4" r="5.6"/><circle cx="241" cy="653.3" r="5.6"/><circle cx="328.1" cy="598.5" r="5.6"/><circle cx="712.4" cy="334.3" r="5.6"/><circle cx="452.5" cy="511.6" r="5.6"/><circle cx="724.7" cy="325.6" r="5.6"/><circle cx="538.4" cy="455.7" r="5.6"/><circle cx="613" cy="404.2" r="5.6"/><circle cx="655" cy="372.1" r="5.6"/><circle cx="470.2" cy="497.2" r="5.6"/><circle cx="528.4" cy="462.2" r="5.6"/><circle cx="485" cy="489.8" r="5.6"/><circle cx="922.1" cy="199.9" r="5.6"/><circle cx="582" cy="426.8" r="5.6"/><circle cx="626" cy="394.1" r="5.6"/><circle cx="517.2" cy="468.4" r="5.6"/><circle cx="527" cy="463.2" r="5.6"/><circle cx="737.8" cy="317.8" r="5.6"/><circle cx="482.4" cy="491.4" r="5.6"/><circle cx="565.4" cy="436.8" r="5.6"/><circle cx="606.1" cy="409.9" r="5.6"/><circle cx="495.8" cy="481.7" r="5.6"/><circle cx="819.4" cy="268.9" r="5.6"/><circle cx="370.2" cy="564.1" r="5.6"/><circle cx="822" cy="265.8" r="5.6"/><circle cx="505.1" cy="475.7" r="5.6"/><circle cx="734.4" cy="321.2" r="5.6"/><circle cx="283.3" cy="627.3" r="5.6"/><circle cx="686.3" cy="349.9" r="5.6"/><circle cx="678.9" cy="357" r="5.6"/><circle cx="394.9" cy="545" r="5.6"/><circle cx="453" cy="510.9" r="5.6"/><circle cx="596.6" cy="416.3" r="5.6"/><circle cx="722.4" cy="326.3" r="5.6"/><circle cx="453.8" cy="510.5" r="5.6"/><circle cx="515.5" cy="469.1" r="5.6"/><circle cx="766.6" cy="304.4" r="5.6"/><circle cx="400.3" cy="543.8" r="5.6"/><circle cx="677.3" cy="357.5" r="5.6"/><circle cx="624.8" cy="396" r="5.6"/><circle cx="404.7" cy="541.2" r="5.6"/><circle cx="461.6" cy="503.7" r="5.6"/><circle cx="653.3" cy="372.7" r="5.6"/><circle cx="593.9" cy="418.6" r="5.6"/><circle cx="751" cy="312.4" r="5.6"/><circle cx="480.9" cy="492.5" r="5.6"/><circle cx="333.7" cy="594" r="5.6"/><circle cx="689.1" cy="348.9" r="5.6"/><circle cx="483.5" cy="490.8" r="5.6"/><circle cx="584.7" cy="425.3" r="5.6"/><circle cx="787.5" cy="293.2" r="5.6"/><circle cx="539" cy="455.1" r="5.6"/><circle cx="756.2" cy="308" r="5.6"/><circle cx="399.6" cy="543.8" r="5.6"/><circle cx="685.2" cy="351" r="5.6"/><circle cx="599.1" cy="414.9" r="5.6"/><circle cx="437.2" cy="518.2" r="5.6"/><circle cx="371.1" cy="563.9" r="5.6"/><circle cx="552.2" cy="446.1" r="5.6"/><circle cx="589.4" cy="422.7" r="5.6"/><circle cx="597" cy="415.8" r="5.6"/><circle cx="625.6" cy="394.4" r="5.6"/><circle cx="499.4" cy="478.6" r="5.6"/><circle cx="475.8" cy="494.9" r="5.6"/><circle cx="578" cy="428.4" r="5.6"/><circle cx="486.9" cy="488.2" r="5.6"/><circle cx="719.5" cy="328.6" r="5.6"/><circle cx="566" cy="436.7" r="5.6"/><circle cx="468.6" cy="498.4" r="5.6"/><circle cx="318.9" cy="610.8" r="5.6"/><circle cx="447.6" cy="513.9" r="5.6"/><circle cx="833.6" cy="262.3" r="5.6"/><circle cx="476.6" cy="493.9" r="5.6"/><circle cx="444.8" cy="515.7" r="5.6"/><circle cx="643.5" cy="381.7" r="5.6"/><circle cx="624.5" cy="396" r="5.6"/><circle cx="653.7" cy="372.6" r="5.6"/><circle cx="510" cy="473" r="5.6"/><circle cx="693.6" cy="347.4" r="5.6"/><circle cx="391.4" cy="548.4" r="5.6"/><circle cx="549.9" cy="447" r="5.6"/><circle cx="452.1" cy="511.8" r="5.6"/><circle cx="642.7" cy="381.8" r="5.6"/><circle cx="577.3" cy="428.6" r="5.6"/><circle cx="697.7" cy="345.4" r="5.6"/><circle cx="824.7" cy="264.6" r="5.6"/><circle cx="576.6" cy="429.4" r="5.6"/><circle cx="492.1" cy="484.4" r="5.6"/><circle cx="440.6" cy="517.8" r="5.6"/><circle cx="532.7" cy="459.3" r="5.6"/><circle cx="553.8" cy="445.2" r="5.6"/><circle cx="830.5" cy="263" r="5.6"/><circle cx="388.5" cy="550.8" r="5.6"/><circle cx="406" cy="540.7" r="5.6"/><circle cx="495" cy="482.6" r="5.6"/><circle cx="619.6" cy="399.2" r="5.6"/><circle cx="659.5" cy="369" r="5.6"/><circle cx="439.6" cy="517.9" r="5.6"/><circle cx="587.4" cy="424.3" r="5.6"/><circle cx="561.4" cy="440.9" r="5.6"/><circle cx="710.4" cy="336.5" r="5.6"/><circle cx="684.1" cy="351.7" r="5.6"/><circle cx="506.5" cy="475.4" r="5.6"/><circle cx="557.5" cy="442.9" r="5.6"/><circle cx="637.8" cy="384.3" r="5.6"/><circle cx="341.4" cy="589.4" r="5.6"/><circle cx="498.3" cy="479.2" r="5.6"/><circle cx="631.4" cy="388.4" r="5.6"/><circle cx="485.4" cy="488.8" r="5.6"/><circle cx="540.3" cy="453.8" r="5.6"/><circle cx="553.2" cy="445.3" r="5.6"/><circle cx="474.6" cy="495.1" r="5.6"/><circle cx="422.2" cy="532.6" r="5.6"/><circle cx="536.7" cy="457.3" r="5.6"/><circle cx="505.8" cy="475.5" r="5.6"/><circle cx="669.4" cy="362.8" r="5.6"/><circle cx="769.1" cy="304.2" r="5.6"/><circle cx="564" cy="438.2" r="5.6"/><circle cx="598.4" cy="415.5" r="5.6"/><circle cx="545.9" cy="449.3" r="5.6"/><circle cx="631" cy="389.5" r="5.6"/><circle cx="587.1" cy="424.4" r="5.6"/><circle cx="588.4" cy="423" r="5.6"/><circle cx="694.8" cy="346.3" r="5.6"/><circle cx="423.9" cy="531.5" r="5.6"/><circle cx="736.1" cy="318.7" r="5.6"/><circle cx="614.4" cy="403.6" r="5.6"/><circle cx="572.3" cy="432.9" r="5.6"/><circle cx="473.8" cy="495.4" r="5.6"/><circle cx="543" cy="451.1" r="5.6"/><circle cx="611.1" cy="405.1" r="5.6"/><circle cx="288.6" cy="626.2" r="5.6"/><circle cx="467" cy="499.2" r="5.6"/><circle cx="635.4" cy="385.4" r="5.6"/><circle cx="501.9" cy="477.3" r="5.6"/><circle cx="437.7" cy="518" r="5.6"/><circle cx="469.8" cy="498" r="5.6"/><circle cx="590.5" cy="421.2" r="5.6"/><circle cx="352.8" cy="578.8" r="5.6"/><circle cx="676.3" cy="357.7" r="5.6"/><circle cx="274.4" cy="633.6" r="5.6"/><circle cx="475.4" cy="494.9" r="5.6"/><circle cx="445.3" cy="515.5" r="5.6"/><circle cx="376.1" cy="558.5" r="5.6"/><circle cx="412.6" cy="537" r="5.6"/><circle cx="575" cy="430.5" r="5.6"/><circle cx="547.6" cy="448.4" r="5.6"/><circle cx="506.8" cy="475.3" r="5.6"/><circle cx="246.4" cy="652.5" r="5.6"/><circle cx="373.6" cy="563.3" r="5.6"/><circle cx="530" cy="461.5" r="5.6"/><circle cx="435.7" cy="518.9" r="5.6"/><circle cx="434.7" cy="520.4" r="5.6"/><circle cx="666.5" cy="363.8" r="5.6"/><circle cx="580.6" cy="427.4" r="5.6"/><circle cx="420.6" cy="533.2" r="5.6"/><circle cx="493.6" cy="483.4" r="5.6"/><circle cx="526.7" cy="463.5" r="5.6"/><circle cx="450.3" cy="512.8" r="5.6"/><circle cx="426.5" cy="529.9" r="5.6"/><circle cx="531.4" cy="460.1" r="5.6"/><circle cx="652.8" cy="373.1" r="5.6"/><circle cx="602.9" cy="411.5" r="5.6"/><circle cx="541.3" cy="453.3" r="5.6"/><circle cx="606.8" cy="409.5" r="5.6"/><circle cx="657.3" cy="371.2" r="5.6"/><circle cx="518.9" cy="466.7" r="5.6"/><circle cx="625.2" cy="395.2" r="5.6"/><circle cx="398.3" cy="544" r="5.6"/><circle cx="513.8" cy="470" r="5.6"/><circle cx="489.5" cy="485.6" r="5.6"/><circle cx="577.6" cy="428.5" r="5.6"/><circle cx="597.7" cy="415.6" r="5.6"/><circle cx="534.7" cy="458.2" r="5.6"/><circle cx="442.5" cy="516.8" r="5.6"/><circle cx="446.7" cy="514.6" r="5.6"/><circle cx="594.9" cy="417.5" r="5.6"/><circle cx="743.2" cy="316.4" r="5.6"/><circle cx="427.6" cy="529.3" r="5.6"/><circle cx="502.2" cy="477.3" r="5.6"/><circle cx="594.6" cy="417.7" r="5.6"/><circle cx="467.4" cy="499.1" r="5.6"/><circle cx="579" cy="427.7" r="5.6"/><circle cx="535" cy="458" r="5.6"/><circle cx="456.9" cy="508.2" r="5.6"/><circle cx="669.8" cy="362.7" r="5.6"/><circle cx="660.9" cy="368" r="5.6"/><circle cx="675.8" cy="358" r="5.6"/><circle cx="725.5" cy="324.8" r="5.6"/><circle cx="489.9" cy="485.4" r="5.6"/><circle cx="488.4" cy="487.6" r="5.6"/><circle cx="584.3" cy="425.4" r="5.6"/><circle cx="655.5" cy="372" r="5.6"/><circle cx="499.7" cy="478.4" r="5.6"/><circle cx="480.1" cy="492.7" r="5.6"/><circle cx="478.2" cy="493.7" r="5.6"/><circle cx="755.2" cy="308.6" r="5.6"/><circle cx="211.5" cy="671.4" r="5.6"/><circle cx="522.3" cy="465" r="5.6"/><circle cx="557.1" cy="443.5" r="5.6"/><circle cx="421.7" cy="533" r="5.6"/><circle cx="610.1" cy="406.4" r="5.6"/><circle cx="295.9" cy="621.4" r="5.6"/><circle cx="673.8" cy="360.2" r="5.6"/><circle cx="332.4" cy="594.3" r="5.6"/><circle cx="271.1" cy="635.8" r="5.6"/><circle cx="459.5" cy="505.6" r="5.6"/><circle cx="570.6" cy="434.4" r="5.6"/><circle cx="466.6" cy="499.2" r="5.6"/><circle cx="464.1" cy="501.6" r="5.6"/><circle cx="600.5" cy="413.1" r="5.6"/><circle cx="417.8" cy="534.7" r="5.6"/><circle cx="559.4" cy="442.2" r="5.6"/><circle cx="603.6" cy="411" r="5.6"/><circle cx="777" cy="299.3" r="5.6"/><circle cx="617.7" cy="400.1" r="5.6"/><circle cx="790.7" cy="292.9" r="5.6"/><circle cx="620.7" cy="398" r="5.6"/><circle cx="546.9" cy="448.6" r="5.6"/><circle cx="264" cy="638.8" r="5.6"/><circle cx="385.6" cy="551.6" r="5.6"/><circle cx="524" cy="464" r="5.6"/><circle cx="644.7" cy="380" r="5.6"/><circle cx="520.6" cy="465.3" r="5.6"/><circle cx="635.7" cy="385.4" r="5.6"/><circle cx="426" cy="530.2" r="5.6"/><circle cx="521.3" cy="465.2" r="5.6"/><circle cx="571" cy="434.4" r="5.6"/><circle cx="503.3" cy="476.6" r="5.6"/><circle cx="574.3" cy="431.3" r="5.6"/><circle cx="460.7" cy="504.3" r="5.6"/><circle cx="610.4" cy="406.3" r="5.6"/><circle cx="559.8" cy="442.1" r="5.6"/><circle cx="551.5" cy="446.2" r="5.6"/><circle cx="310.2" cy="616.5" r="5.6"/><circle cx="461.2" cy="503.8" r="5.6"/><circle cx="358" cy="576.5" r="5.6"/><circle cx="346.2" cy="583.1" r="5.6"/><circle cx="477" cy="493.9" r="5.6"/><circle cx="527.7" cy="462.7" r="5.6"/><circle cx="580.3" cy="427.4" r="5.6"/><circle cx="689.6" cy="348.5" r="5.6"/><circle cx="609.3" cy="406.5" r="5.6"/><circle cx="686.8" cy="349.8" r="5.6"/><circle cx="492.9" cy="483.9" r="5.6"/><circle cx="500.8" cy="477.9" r="5.6"/><circle cx="680.4" cy="354.5" r="5.6"/><circle cx="550.5" cy="446.6" r="5.6"/><circle cx="329.6" cy="597.5" r="5.6"/><circle cx="440.1" cy="517.9" r="5.6"/><circle cx="681.5" cy="353.9" r="5.6"/><circle cx="471.5" cy="496" r="5.6"/><circle cx="578.6" cy="427.9" r="5.6"/><circle cx="562.7" cy="440" r="5.6"/><circle cx="496.5" cy="479.9" r="5.6"/><circle cx="520.9" cy="465.3" r="5.6"/><circle cx="600.8" cy="412.8" r="5.6"/><circle cx="571.6" cy="433.6" r="5.6"/><circle cx="731" cy="323.3" r="5.6"/><circle cx="532.4" cy="459.4" r="5.6"/><circle cx="428.1" cy="528.8" r="5.6"/><circle cx="581.6" cy="427" r="5.6"/><circle cx="627.1" cy="392.1" r="5.6"/><circle cx="856.6" cy="242.1" r="5.6"/><circle cx="476.2" cy="494.5" r="5.6"/><circle cx="511.4" cy="472.5" r="5.6"/><circle cx="665.5" cy="364.6" r="5.6"/><circle cx="714.5" cy="333.1" r="5.6"/><circle cx="463.3" cy="502.4" r="5.6"/><circle cx="636.5" cy="384.6" r="5.6"/><circle cx="465.3" cy="501.3" r="5.6"/><circle cx="424.9" cy="530.6" r="5.6"/><circle cx="639.8" cy="382.8" r="5.6"/><circle cx="573.6" cy="431.9" r="5.6"/><circle cx="607.2" cy="409.4" r="5.6"/><circle cx="472.6" cy="495.5" r="5.6"/><circle cx="809.9" cy="281.6" r="5.6"/><circle cx="654.2" cy="372.5" r="5.6"/><circle cx="507.5" cy="474.1" r="5.6"/><circle cx="652.4" cy="373.6" r="5.6"/><circle cx="384.8" cy="551.7" r="5.6"/><circle cx="539.3" cy="454.8" r="5.6"/><circle cx="744.2" cy="316" r="5.6"/><circle cx="514.8" cy="469.2" r="5.6"/><circle cx="662.3" cy="367.2" r="5.6"/><circle cx="531.7" cy="460" r="5.6"/><circle cx="235" cy="660.5" r="5.6"/><circle cx="431.7" cy="524.9" r="5.6"/><circle cx="585.4" cy="425.1" r="5.6"/><circle cx="750" cy="312.9" r="5.6"/><circle cx="480.5" cy="492.6" r="5.6"/><circle cx="593.5" cy="419.1" r="5.6"/><circle cx="433.7" cy="521.4" r="5.6"/><circle cx="432.2" cy="524.6" r="5.6"/><circle cx="454.7" cy="510.4" r="5.6"/><circle cx="713.8" cy="333.6" r="5.6"/><circle cx="684.7" cy="351" r="5.6"/><circle cx="626.8" cy="392.7" r="5.6"/><circle cx="706.4" cy="340.3" r="5.6"/><circle cx="496.9" cy="479.3" r="5.6"/><circle cx="647.7" cy="377.7" r="5.6"/><circle cx="583" cy="426.2" r="5.6"/><circle cx="418.9" cy="534.6" r="5.6"/><circle cx="450.7" cy="512.3" r="5.6"/><circle cx="574.6" cy="430.9" r="5.6"/><circle cx="607.5" cy="408.9" r="5.6"/><circle cx="523.7" cy="464.6" r="5.6"/><circle cx="419.5" cy="534.5" r="5.6"/><circle cx="255.9" cy="644.7" r="5.6"/><circle cx="633.8" cy="387.4" r="5.6"/><circle cx="516.5" cy="468.9" r="5.6"/><circle cx="646.8" cy="378.8" r="5.6"/><circle cx="351.8" cy="579.7" r="5.6"/><circle cx="390" cy="549.3" r="5.6"/><circle cx="544" cy="450.6" r="5.6"/><circle cx="372.8" cy="563.8" r="5.6"/><circle cx="300.3" cy="619.9" r="5.6"/><circle cx="654.6" cy="372.2" r="5.6"/><circle cx="670.3" cy="362.6" r="5.6"/><circle cx="430.2" cy="527.1" r="5.6"/><circle cx="512.4" cy="471.9" r="5.6"/><circle cx="378.6" cy="557.3" r="5.6"/><circle cx="598" cy="415.5" r="5.6"/><circle cx="555.8" cy="444.3" r="5.6"/><circle cx="444.3" cy="516.1" r="5.6"/><circle cx="454.3" cy="510.5" r="5.6"/><circle cx="392.8" cy="546.1" r="5.6"/><circle cx="614.8" cy="403.5" r="5.6"/><circle cx="635" cy="386.3" r="5.6"/><circle cx="611.9" cy="404.5" r="5.6"/><circle cx="438.6" cy="518" r="5.6"/><circle cx="323.7" cy="606.6" r="5.6"/><circle cx="632.2" cy="388.4" r="5.6"/><circle cx="525.7" cy="463.8" r="5.6"/><circle cx="548.2" cy="447.8" r="5.6"/><circle cx="691.3" cy="347.9" r="5.6"/><circle cx="424.4" cy="530.8" r="5.6"/><circle cx="707.1" cy="339.6" r="5.6"/><circle cx="509.3" cy="473.3" r="5.6"/><circle cx="455.2" cy="509.1" r="5.6"/><circle cx="532" cy="459.5" r="5.6"/><circle cx="616.6" cy="402.6" r="5.6"/><circle cx="529.7" cy="461.6" r="5.6"/><circle cx="438.2" cy="518" r="5.6"/><circle cx="519.9" cy="465.5" r="5.6"/><circle cx="220.6" cy="667.9" r="5.6"/><circle cx="468.2" cy="498.7" r="5.6"/><circle cx="602.6" cy="411.9" r="5.6"/><circle cx="528.7" cy="462" r="5.6"/><circle cx="644.3" cy="380.5" r="5.6"/><circle cx="610.8" cy="405.7" r="5.6"/><circle cx="621.4" cy="397.3" r="5.6"/><circle cx="629.1" cy="391" r="5.6"/><circle cx="335.1" cy="593.7" r="5.6"/><circle cx="548.9" cy="447.2" r="5.6"/><circle cx="785.9" cy="294" r="5.6"/><circle cx="492.5" cy="484.1" r="5.6"/><circle cx="609.7" cy="406.5" r="5.6"/><circle cx="585" cy="425.2" r="5.6"/><circle cx="628.3" cy="391.8" r="5.6"/><circle cx="513.4" cy="471" r="5.6"/><circle cx="469" cy="498.2" r="5.6"/><circle cx="567" cy="436.5" r="5.6"/><circle cx="592.9" cy="419.7" r="5.6"/><circle cx="526.4" cy="463.6" r="5.6"/><circle cx="571.3" cy="433.9" r="5.6"/><circle cx="622.6" cy="396.8" r="5.6"/><circle cx="448.9" cy="513.3" r="5.6"/><circle cx="705.2" cy="341.2" r="5.6"/><circle cx="847.9" cy="245.2" r="5.6"/><circle cx="772.9" cy="302.5" r="5.6"/><circle cx="494.7" cy="483.1" r="5.6"/><circle cx="317.3" cy="610.8" r="5.6"/><circle cx="539.7" cy="454.6" r="5.6"/><circle cx="656.8" cy="371.5" r="5.6"/><circle cx="649.8" cy="375.6" r="5.6"/><circle cx="382.5" cy="554.8" r="5.6"/><circle cx="396.3" cy="544.7" r="5.6"/><circle cx="587.7" cy="423.9" r="5.6"/><circle cx="637" cy="384.4" r="5.6"/><circle cx="671.3" cy="362.4" r="5.6"/><circle cx="651.1" cy="373.9" r="5.6"/><circle cx="410.3" cy="537.8" r="5.6"/><circle cx="365.7" cy="567.3" r="5.6"/><circle cx="302.4" cy="618.5" r="5.6"/><circle cx="618.1" cy="400.1" r="5.6"/><circle cx="661.3" cy="367.9" r="5.6"/><circle cx="603.3" cy="411.4" r="5.6"/><circle cx="407.2" cy="539.9" r="5.6"/><circle cx="759.5" cy="307" r="5.6"/><circle cx="493.2" cy="483.7" r="5.6"/><circle cx="796" cy="290.8" r="5.6"/><circle cx="617.4" cy="400.2" r="5.6"/><circle cx="715.9" cy="331.9" r="5.6"/><circle cx="596" cy="417.1" r="5.6"/><circle cx="551.2" cy="446.4" r="5.6"/><circle cx="428.6" cy="528.5" r="5.6"/><circle cx="477.8" cy="493.7" r="5.6"/><circle cx="554.8" cy="444.8" r="5.6"/><circle cx="576.3" cy="429.5" r="5.6"/><circle cx="544.6" cy="450.4" r="5.6"/><circle cx="530.7" cy="460.7" r="5.6"/><circle cx="578.3" cy="427.9" r="5.6"/><circle cx="478.9" cy="493.5" r="5.6"/><circle cx="503.7" cy="476.5" r="5.6"/><circle cx="354.9" cy="578.7" r="5.6"/><circle cx="660" cy="368.8" r="5.6"/><circle cx="566.7" cy="436.5" r="5.6"/><circle cx="542" cy="452.3" r="5.6"/><circle cx="446.2" cy="514.8" r="5.6"/><circle cx="535.7" cy="458" r="5.6"/><circle cx="425.5" cy="530.3" r="5.6"/><circle cx="417.2" cy="534.8" r="5.6"/><circle cx="312" cy="615.7" r="5.6"/><circle cx="680.9" cy="353.9" r="5.6"/><circle cx="582.3" cy="426.5" r="5.6"/><circle cx="393.5" cy="545.5" r="5.6"/><circle cx="718.7" cy="329" r="5.6"/><circle cx="630.6" cy="389.6" r="5.6"/><circle cx="638.2" cy="383.9" r="5.6"/><circle cx="516.9" cy="468.6" r="5.6"/><circle cx="497.2" cy="479.3" r="5.6"/><circle cx="552.5" cy="445.4" r="5.6"/><circle cx="612.6" cy="404.4" r="5.6"/><circle cx="660.4" cy="368.4" r="5.6"/><circle cx="767.8" cy="304.2" r="5.6"/><circle cx="481.2" cy="491.8" r="5.6"/><circle cx="414.4" cy="536.3" r="5.6"/><circle cx="589.1" cy="422.9" r="5.6"/><circle cx="943.2" cy="183" r="5.6"/><circle cx="498.7" cy="479.1" r="5.6"/><circle cx="707.7" cy="339.2" r="5.6"/><circle cx="538.7" cy="455.3" r="5.6"/><circle cx="479.3" cy="493" r="5.6"/><circle cx="462.9" cy="502.8" r="5.6"/><circle cx="525" cy="463.9" r="5.6"/><circle cx="797.8" cy="288.5" r="5.6"/><circle cx="605.4" cy="410.3" r="5.6"/><circle cx="627.9" cy="392.1" r="5.6"/><circle cx="670.8" cy="362.5" r="5.6"/><circle cx="844" cy="245.9" r="5.6"/><circle cx="665.1" cy="365.1" r="5.6"/><circle cx="359" cy="575.3" r="5.6"/><circle cx="421.2" cy="533.1" r="5.6"/><circle cx="336.4" cy="592.1" r="5.6"/><circle cx="164.8" cy="702.6" r="5.6"/><circle cx="731.9" cy="322" r="5.6"/><circle cx="495.4" cy="482.6" r="5.6"/><circle cx="607.9" cy="408.7" r="5.6"/><circle cx="699.6" cy="344.4" r="5.6"/><circle cx="486.2" cy="488.4" r="5.6"/><circle cx="531" cy="460.2" r="5.6"/><circle cx="601.9" cy="412.5" r="5.6"/><circle cx="585.7" cy="425" r="5.6"/><circle cx="449.4" cy="513.2" r="5.6"/><circle cx="645.1" cy="379.7" r="5.6"/><circle cx="641" cy="382" r="5.6"/><circle cx="527.4" cy="462.7" r="5.6"/><circle cx="381.8" cy="555.3" r="5.6"/><circle cx="634.2" cy="386.8" r="5.6"/><circle cx="736.9" cy="318.4" r="5.6"/><circle cx="738.7" cy="317.5" r="5.6"/><circle cx="673.3" cy="360.3" r="5.6"/><circle cx="473.4" cy="495.5" r="5.6"/><circle cx="474.2" cy="495.3" r="5.6"/><circle cx="471.9" cy="495.9" r="5.6"/><circle cx="514.5" cy="469.8" r="5.6"/><circle cx="648.5" cy="376.4" r="5.6"/><circle cx="586.7" cy="424.4" r="5.6"/><circle cx="322.1" cy="608.4" r="5.6"/><circle cx="320.5" cy="609" r="5.6"/><circle cx="560.1" cy="442" r="5.6"/><circle cx="575.3" cy="430.2" r="5.6"/><circle cx="267.7" cy="638.5" r="5.6"/><circle cx="433.2" cy="521.9" r="5.6"/><circle cx="558.4" cy="442.6" r="5.6"/><circle cx="735.2" cy="319.7" r="5.6"/><circle cx="293.5" cy="623.7" r="5.6"/><circle cx="387.1" cy="550.9" r="5.6"/><circle cx="418.4" cy="534.6" r="5.6"/><circle cx="563" cy="439.1" r="5.6"/><circle cx="601.5" cy="412.7" r="5.6"/><circle cx="521.6" cy="465.2" r="5.6"/><circle cx="342.6" cy="587.2" r="5.6"/><circle cx="464.9" cy="501.4" r="5.6"/><circle cx="472.3" cy="495.6" r="5.6"/><circle cx="537" cy="457.2" r="5.6"/><circle cx="781.3" cy="295.9" r="5.6"/><circle cx="478.5" cy="493.7" r="5.6"/><circle cx="563.4" cy="438.7" r="5.6"/><circle cx="455.6" cy="508.9" r="5.6"/><circle cx="401.6" cy="542.8" r="5.6"/><circle cx="636.1" cy="385.3" r="5.6"/><circle cx="416.7" cy="535.5" r="5.6"/><circle cx="907.6" cy="202" r="5.6"/><circle cx="570.3" cy="434.6" r="5.6"/><circle cx="568.7" cy="435.6" r="5.6"/><circle cx="542.6" cy="451.2" r="5.6"/><circle cx="812.1" cy="280" r="5.6"/><circle cx="633.4" cy="387.8" r="5.6"/><circle cx="517.5" cy="468.4" r="5.6"/><circle cx="392.1" cy="546.3" r="5.6"/><circle cx="427.1" cy="529.3" r="5.6"/><circle cx="458.2" cy="507" r="5.6"/><circle cx="708.4" cy="339.1" r="5.6"/><circle cx="519.6" cy="465.6" r="5.6"/><circle cx="451.6" cy="511.8" r="5.6"/><circle cx="655.9" cy="371.9" r="5.6"/><circle cx="723.9" cy="325.6" r="5.6"/><circle cx="456.5" cy="508.3" r="5.6"/><circle cx="507.9" cy="474" r="5.6"/><circle cx="606.5" cy="409.9" r="5.6"/><circle cx="545.6" cy="449.6" r="5.6"/><circle cx="613.7" cy="403.8" r="5.6"/><circle cx="782.8" cy="295.8" r="5.6"/><circle cx="543.6" cy="450.6" r="5.6"/><circle cx="523.3" cy="464.6" r="5.6"/><circle cx="624.1" cy="396.1" r="5.6"/><circle cx="533.7" cy="458.9" r="5.6"/><circle cx="641.4" cy="381.9" r="5.6"/><circle cx="526" cy="463.8" r="5.6"/><circle cx="605.1" cy="410.4" r="5.6"/><circle cx="360" cy="574.9" r="5.6"/><circle cx="561.1" cy="441.1" r="5.6"/><circle cx="507.2" cy="475" r="5.6"/><circle cx="387.8" cy="550.9" r="5.6"/><circle cx="497.6" cy="479.3" r="5.6"/><circle cx="604.3" cy="410.7" r="5.6"/><circle cx="573" cy="432" r="5.6"/><circle cx="626.4" cy="393.6" r="5.6"/><circle cx="667" cy="363.8" r="5.6"/><circle cx="662.7" cy="367.1" r="5.6"/><circle cx="509.6" cy="473.3" r="5.6"/><circle cx="371.9" cy="563.9" r="5.6"/><circle cx="500.1" cy="478.3" r="5.6"/><circle cx="700.2" cy="344.3" r="5.6"/><circle cx="537.7" cy="456.3" r="5.6"/><circle cx="343.8" cy="584.6" r="5.6"/><circle cx="612.2" cy="404.4" r="5.6"/><circle cx="583.3" cy="425.9" r="5.6"/><circle cx="505.4" cy="475.7" r="5.6"/><circle cx="573.3" cy="431.9" r="5.6"/><circle cx="745.1" cy="315.9" r="5.6"/><circle cx="740.5" cy="316.7" r="5.6"/><circle cx="487.3" cy="487.6" r="5.6"/><circle cx="561.7" cy="440.8" r="5.6"/><circle cx="362.9" cy="573.5" r="5.6"/><circle cx="469.4" cy="498.2" r="5.6"/><circle cx="814.5" cy="270.6" r="5.6"/><circle cx="749" cy="313.2" r="5.6"/><circle cx="535.4" cy="458" r="5.6"/><circle cx="457.8" cy="507.7" r="5.6"/><circle cx="377" cy="558.3" r="5.6"/><circle cx="840.3" cy="250" r="5.6"/><circle cx="565" cy="437.2" r="5.6"/><circle cx="471" cy="496.5" r="5.6"/><circle cx="696.5" cy="346" r="5.6"/><circle cx="402.8" cy="542.7" r="5.6"/><circle cx="650.2" cy="375.6" r="5.6"/><circle cx="752" cy="311.3" r="5.6"/><circle cx="520.3" cy="465.5" r="5.6"/><circle cx="746.1" cy="315.4" r="5.6"/><circle cx="631.8" cy="388.4" r="5.6"/></g><rect x="88" y="88" width="932" height="656" fill="none" stroke="#777" stroke-width="3"/><path d="M160.6,744V756M291.7,744V756M422.9,744V756M554,744V756M685.1,744V756M816.3,744V756M947.4,744V756M88,707.2H76M88,619.2H76M88,531.2H76M88,443.3H76M88,355.3H76M88,267.3H76M88,179.3H76M88,91.3H76" stroke="#777" stroke-width="3"/><text x="160.6" y="782" font-family="Liberation Sans" fill="#111" stroke="#111" stroke-width="0.5" font-size="18" text-anchor="middle">-3</text><text x="291.7" y="782" font-family="Liberation Sans" fill="#111" stroke="#111" stroke-width="0.5" font-size="18" text-anchor="middle">-2</text><text x="422.9" y="782" font-family="Liberation Sans" fill="#111" stroke="#111" stroke-width="0.5" font-size="18" text-anchor="middle">-1</text><text x="554" y="782" font-family="Liberation Sans" fill="#111" stroke="#111" stroke-width="0.5" font-size="18" text-anchor="middle">0</text><text x="685.1" y="782" font-family="Liberation Sans" fill="#111" stroke="#111" stroke-width="0.5" font-size="18" text-anchor="middle">1</text><text x="816.3" y="782" font-family="Liberation Sans" fill="#111" stroke="#111" stroke-width="0.5" font-size="18" text-anchor="middle">2</text><text x="947.4" y="782" font-family="Liberation Sans" fill="#111" stroke="#111" stroke-width="0.5" font-size="18" text-anchor="middle">3</text><text transform="translate(58,707.2) rotate(-90)" font-family="Liberation Sans" fill="#111" stroke="#111" stroke-width="0.5" font-size="18" text-anchor="middle">-3</text><text transform="translate(58,619.2) rotate(-90)" font-family="Liberation Sans" fill="#111" stroke="#111" stroke-width="0.5" font-size="18" text-anchor="middle">-2</text><text transform="translate(58,531.2) rotate(-90)" font-family="Liberation Sans" fill="#111" stroke="#111" stroke-width="0.5" font-size="18" text-anchor="middle">-1</text><text transform="translate(58,443.3) rotate(-90)" font-family="Liberation Sans" fill="#111" stroke="#111" stroke-width="0.5" font-size="18" text-anchor="middle">0</text><text transform="translate(58,355.3) rotate(-90)" font-family="Liberation Sans" fill="#111" stroke="#111" stroke-width="0.5" font-size="18" text-anchor="middle">1</text><text transform="translate(58,267.3) rotate(-90)" font-family="Liberation Sans" fill="#111" stroke="#111" stroke-width="0.5" font-size="18" text-anchor="middle">2</text><text transform="translate(58,179.3) rotate(-90)" font-family="Liberation Sans" fill="#111" stroke="#111" stroke-width="0.5" font-size="18" text-anchor="middle">3</text><text transform="translate(58,91.3) rotate(-90)" font-family="Liberation Sans" fill="#111" stroke="#111" stroke-width="0.5" font-size="18" text-anchor="middle">4</text><text x="554" y="80" font-family="Liberation Sans" fill="#111" stroke="#111" stroke-width="0.5" font-size="18" text-anchor="middle">Normal Q-Q</text><text x="554" y="826" font-family="Liberation Sans" fill="#111" stroke="#111" stroke-width="0.5" font-size="18" text-anchor="middle">Theoretical Quantiles</text><text x="554" y="844" font-family="Liberation Sans" fill="#111" stroke="#111" stroke-width="0.5" font-size="18" text-anchor="middle">lm(y ~ x1 + x2)</text><text transform="translate(14,416) rotate(-90)" font-family="Liberation Sans" fill="#111" stroke="#111" stroke-width="0.5" font-size="18" text-anchor="middle">Standardized residuals</text><text x="978.9" y="159.9" font-family="Liberation Sans" fill="#111" stroke="#111" stroke-width="0.5" font-size="15" text-anchor="end">122</text><text x="129.1" y="725" font-family="Liberation Sans" fill="#111" stroke="#111" stroke-width="0.5" font-size="15">203</text><text x="936.6" y="188.3" font-family="Liberation Sans" fill="#111" stroke="#111" stroke-width="0.5" font-size="15" text-anchor="end">867</text></svg>
<svg style="left:1323px;top:1910px" width="266" height="214" viewBox="0 0 1064 856"><rect width="1064" height="856" fill="#fff"/><g fill="none" stroke="#000" stroke-width="2.2"><circle cx="416.9" cy="413" r="5.6"/><circle cx="461.8" cy="538.4" r="5.6"/><circle cx="711.3" cy="420.9" r="5.6"/><circle cx="530.2" cy="450.9" r="5.6"/><circle cx="536.9" cy="360.1" r="5.6"/><circle cx="766.6" cy="215.6" r="5.6"/><circle cx="579.8" cy="506" r="5.6"/><circle cx="311.3" cy="397.3" r="5.6"/><circle cx="388.2" cy="376" r="5.6"/><circle cx="437.3" cy="397.7" r="5.6"/><circle cx="715.1" cy="569.4" r="5.6"/><circle cx="552.8" cy="303.4" r="5.6"/><circle cx="582.3" cy="421.5" r="5.6"/><circle cx="542.6" cy="360.5" r="5.6"/><circle cx="477.2" cy="513.8" r="5.6"/><circle cx="746.1" cy="442.7" r="5.6"/><circle cx="606.9" cy="544.5" r="5.6"/><circle cx="226.9" cy="458.9" r="5.6"/><circle cx="604.7" cy="637.2" r="5.6"/><circle cx="417.9" cy="526.4" r="5.6"/><circle cx="406.3" cy="692.1" r="5.6"/><circle cx="484.6" cy="537.9" r="5.6"/><circle cx="412.1" cy="437.7" r="5.6"/><circle cx="396.1" cy="525.5" r="5.6"/><circle cx="404.4" cy="689.6" r="5.6"/><circle cx="266.5" cy="595.9" r="5.6"/><circle cx="649" cy="296.3" r="5.6"/><circle cx="546.3" cy="326" r="5.6"/><circle cx="354.8" cy="548.3" r="5.6"/><circle cx="710.5" cy="439.6" r="5.6"/><circle cx="584.1" cy="268.2" r="5.6"/><circle cx="483.8" cy="504.8" r="5.6"/><circle cx="650.5" cy="659.5" r="5.6"/><circle cx="621.8" cy="557.4" r="5.6"/><circle cx="605.4" cy="480.6" r="5.6"/><circle cx="632.3" cy="379.8" r="5.6"/><circle cx="604.6" cy="584.3" r="5.6"/><circle cx="543.1" cy="601.8" r="5.6"/><circle cx="509.7" cy="584.5" r="5.6"/><circle cx="483.9" cy="439.3" r="5.6"/><circle cx="417.9" cy="368.4" r="5.6"/><circle cx="467.1" cy="535" r="5.6"/><circle cx="338.4" cy="592.1" r="5.6"/><circle cx="840.3" cy="305.1" r="5.6"/><circle cx="717.7" cy="568.8" r="5.6"/><circle cx="392.1" cy="308.2" r="5.6"/><circle cx="485.9" cy="606.5" r="5.6"/><circle cx="432.8" cy="454.3" r="5.6"/><circle cx="595.7" cy="310.8" r="5.6"/><circle cx="506.2" cy="605.6" r="5.6"/><circle cx="561.1" cy="680.2" r="5.6"/><circle cx="486.5" cy="432.1" r="5.6"/><circle cx="545.7" cy="368.4" r="5.6"/><circle cx="685.8" cy="371.3" r="5.6"/><circle cx="518.2" cy="405" r="5.6"/><circle cx="703.9" cy="352.6" r="5.6"/><circle cx="315.3" cy="527.8" r="5.6"/><circle cx="621.2" cy="364.4" r="5.6"/><circle cx="555.6" cy="370.4" r="5.6"/><circle cx="561.8" cy="474.8" r="5.6"/><circle cx="544.7" cy="451.5" r="5.6"/><circle cx="474.6" cy="392.6" r="5.6"/><circle cx="481.4" cy="685.5" r="5.6"/><circle cx="401.6" cy="493" r="5.6"/><circle cx="346.4" cy="467.7" r="5.6"/><circle cx="526.5" cy="366.6" r="5.6"/><circle cx="569.1" cy="388.6" r="5.6"/><circle cx="510.2" cy="546.1" r="5.6"/><circle cx="671.2" cy="563.4" r="5.6"/><circle cx="836.1" cy="588.2" r="5.6"/><circle cx="424.3" cy="329.1" r="5.6"/><circle cx="227.3" cy="404" r="5.6"/><circle cx="667" cy="436.8" r="5.6"/><circle cx="413.4" cy="446.9" r="5.6"/><circle cx="435.4" cy="286.7" r="5.6"/><circle cx="681.4" cy="406.5" r="5.6"/><circle cx="481.3" cy="578" r="5.6"/><circle cx="341.7" cy="589.8" r="5.6"/><circle cx="578" cy="628.2" r="5.6"/><circle cx="467.7" cy="486.2" r="5.6"/><circle cx="495.3" cy="418.9" r="5.6"/><circle cx="587.2" cy="406.3" r="5.6"/><circle cx="484.1" cy="310" r="5.6"/><circle cx="581" cy="477" r="5.6"/><circle cx="486.1" cy="417" r="5.6"/><circle cx="575.8" cy="537.4" r="5.6"/><circle cx="664.8" cy="443.5" r="5.6"/><circle cx="615.2" cy="470.8" r="5.6"/><circle cx="486.8" cy="274" r="5.6"/><circle cx="666.2" cy="426" r="5.6"/><circle cx="632.9" cy="234.6" r="5.6"/><circle cx="581.5" cy="577.1" r="5.6"/><circle cx="523.5" cy="505.7" r="5.6"/><circle cx="398" cy="360" r="5.6"/><circle cx="695.3" cy="532.1" r="5.6"/><circle cx="453.1" cy="627" r="5.6"/><circle cx="857.1" cy="553.2" r="5.6"/><circle cx="726.8" cy="232.7" r="5.6"/><circle cx="488.1" cy="210.9" r="5.6"/><circle cx="345.4" cy="413.3" r="5.6"/><circle cx="429.7" cy="522.4" r="5.6"/><circle cx="544.6" cy="439.5" r="5.6"/><circle cx="479.6" cy="490.3" r="5.6"/><circle cx="504.2" cy="446" r="5.6"/><circle cx="399.8" cy="268.2" r="5.6"/><circle cx="528.8" cy="557.4" r="5.6"/><circle cx="386.4" cy="188.5" r="5.6"/><circle cx="265.8" cy="394.7" r="5.6"/><circle cx="493.4" cy="288.8" r="5.6"/><circle cx="671.6" cy="391.7" r="5.6"/><circle cx="455" cy="366" r="5.6"/><circle cx="588.4" cy="388.3" r="5.6"/><circle cx="273.2" cy="503.1" r="5.6"/><circle cx="511.2" cy="461.3" r="5.6"/><circle cx="593.3" cy="479.8" r="5.6"/><circle cx="541.2" cy="297.6" r="5.6"/><circle cx="553" cy="669.9" r="5.6"/><circle cx="396" cy="397.4" r="5.6"/><circle cx="416.2" cy="387.3" r="5.6"/><circle cx="401.2" cy="691.9" r="5.6"/><circle cx="566.7" cy="462.4" r="5.6"/><circle cx="399" cy="112.3" r="5.6"/><circle cx="434.5" cy="430.5" r="5.6"/><circle cx="463.5" cy="314.7" r="5.6"/><circle cx="802.6" cy="546.3" r="5.6"/><circle cx="394.4" cy="659.6" r="5.6"/><circle cx="577.3" cy="497.2" r="5.6"/><circle cx="531.9" cy="281.2" r="5.6"/><circle cx="380.7" cy="516.7" r="5.6"/><circle cx="540.4" cy="414.7" r="5.6"/><circle cx="696.5" cy="243.4" r="5.6"/><circle cx="573.6" cy="488.1" r="5.6"/><circle cx="499.1" cy="340.5" r="5.6"/><circle cx="435.4" cy="361.3" r="5.6"/><circle cx="246" cy="534.9" r="5.6"/><circle cx="681.4" cy="525.7" r="5.6"/><circle cx="313.9" cy="335.5" r="5.6"/><circle cx="644.8" cy="359.5" r="5.6"/><circle cx="818.5" cy="411.6" r="5.6"/><circle cx="319.3" cy="521.1" r="5.6"/><circle cx="631.7" cy="348.4" r="5.6"/><circle cx="459.9" cy="490.1" r="5.6"/><circle cx="290" cy="299.7" r="5.6"/><circle cx="276.1" cy="318.4" r="5.6"/><circle cx="271.3" cy="372.9" r="5.6"/><circle cx="416.7" cy="465.5" r="5.6"/><circle cx="300" cy="247.7" r="5.6"/><circle cx="607.1" cy="361" r="5.6"/><circle cx="821.5" cy="370.4" r="5.6"/><circle cx="354.9" cy="510.5" r="5.6"/><circle cx="616.6" cy="229.4" r="5.6"/><circle cx="659.9" cy="577.8" r="5.6"/><circle cx="579.7" cy="317.5" r="5.6"/><circle cx="354.6" cy="453.9" r="5.6"/><circle cx="493.3" cy="414.4" r="5.6"/><circle cx="466.1" cy="299.5" r="5.6"/><circle cx="594.8" cy="419.3" r="5.6"/><circle cx="490.7" cy="679" r="5.6"/><circle cx="636.3" cy="386.4" r="5.6"/><circle cx="460.2" cy="247.2" r="5.6"/><circle cx="699.8" cy="373.9" r="5.6"/><circle cx="346.3" cy="671.7" r="5.6"/><circle cx="353.2" cy="483.6" r="5.6"/><circle cx="985.5" cy="306.8" r="5.6"/><circle cx="467.8" cy="437.2" r="5.6"/><circle cx="596.5" cy="486.7" r="5.6"/><circle cx="575.4" cy="361" r="5.6"/><circle cx="487.1" cy="388.4" r="5.6"/><circle cx="609" cy="494.1" r="5.6"/><circle cx="566.2" cy="287.5" r="5.6"/><circle cx="464.5" cy="481.6" r="5.6"/><circle cx="524.8" cy="377.7" r="5.6"/><circle cx="492.1" cy="689.1" r="5.6"/><circle cx="810.6" cy="471.8" r="5.6"/><circle cx="439.1" cy="407.1" r="5.6"/><circle cx="334.4" cy="325" r="5.6"/><circle cx="512.1" cy="399.2" r="5.6"/><circle cx="587.2" cy="475.6" r="5.6"/><circle cx="547.2" cy="505.2" r="5.6"/><circle cx="476.4" cy="330" r="5.6"/><circle cx="404.4" cy="550" r="5.6"/><circle cx="706.9" cy="400.5" r="5.6"/><circle cx="435.4" cy="530.2" r="5.6"/><circle cx="396.3" cy="346.7" r="5.6"/><circle cx="502" cy="409.6" r="5.6"/><circle cx="458.1" cy="445.2" r="5.6"/><circle cx="698.8" cy="420.4" r="5.6"/><circle cx="548.8" cy="187.1" r="5.6"/><circle cx="607.5" cy="337.4" r="5.6"/><circle cx="467.5" cy="620" r="5.6"/><circle cx="561.5" cy="402.1" r="5.6"/><circle cx="450.6" cy="273.5" r="5.6"/><circle cx="544.7" cy="340.1" r="5.6"/><circle cx="425.5" cy="281.5" r="5.6"/><circle cx="361.9" cy="471" r="5.6"/><circle cx="817.7" cy="457.8" r="5.6"/><circle cx="616.4" cy="478.8" r="5.6"/><circle cx="351.6" cy="511.7" r="5.6"/><circle cx="427.3" cy="635.4" r="5.6"/><circle cx="327.6" cy="668.6" r="5.6"/><circle cx="848.6" cy="616.8" r="5.6"/><circle cx="717.7" cy="502.6" r="5.6"/><circle cx="503.1" cy="125.2" r="5.6"/><circle cx="560.5" cy="247.6" r="5.6"/><circle cx="438.3" cy="266.1" r="5.6"/><circle cx="460.1" cy="359.2" r="5.6"/><circle cx="379.4" cy="578.3" r="5.6"/><circle cx="451.4" cy="330.4" r="5.6"/><circle cx="753.9" cy="366.3" r="5.6"/><circle cx="496.3" cy="334.8" r="5.6"/><circle cx="528.2" cy="372.5" r="5.6"/><circle cx="565.7" cy="176.6" r="5.6"/><circle cx="666.8" cy="376.2" r="5.6"/><circle cx="419.4" cy="424.5" r="5.6"/><circle cx="383.5" cy="622.6" r="5.6"/><circle cx="724.3" cy="544" r="5.6"/><circle cx="428.7" cy="514.7" r="5.6"/><circle cx="428.7" cy="374" r="5.6"/><circle cx="351.7" cy="298.8" r="5.6"/><circle cx="326.4" cy="657.2" r="5.6"/><circle cx="422.6" cy="551" r="5.6"/><circle cx="615" cy="555.6" r="5.6"/><circle cx="697.7" cy="522.7" r="5.6"/><circle cx="585.8" cy="372.7" r="5.6"/><circle cx="504" cy="572.1" r="5.6"/><circle cx="493.4" cy="235.6" r="5.6"/><circle cx="398.2" cy="315.2" r="5.6"/><circle cx="407.2" cy="364.7" r="5.6"/><circle cx="668.1" cy="371.7" r="5.6"/><circle cx="355.2" cy="625" r="5.6"/><circle cx="812.9" cy="279.9" r="5.6"/><circle cx="532.5" cy="298.3" r="5.6"/><circle cx="547.2" cy="492.7" r="5.6"/><circle cx="427.1" cy="408.7" r="5.6"/><circle cx="426.8" cy="380.5" r="5.6"/><circle cx="333.5" cy="600.3" r="5.6"/><circle cx="525.6" cy="421.8" r="5.6"/><circle cx="559.5" cy="565.9" r="5.6"/><circle cx="530.3" cy="585.4" r="5.6"/><circle cx="444" cy="560.2" r="5.6"/><circle cx="392.3" cy="622.5" r="5.6"/><circle cx="460.5" cy="458.3" r="5.6"/><circle cx="697.3" cy="682.4" r="5.6"/><circle cx="394.6" cy="268.4" r="5.6"/><circle cx="524.4" cy="411.9" r="5.6"/><circle cx="810.8" cy="410.1" r="5.6"/><circle cx="499.9" cy="342.7" r="5.6"/><circle cx="350.1" cy="489.5" r="5.6"/><circle cx="412.4" cy="332.5" r="5.6"/><circle cx="571.9" cy="522.1" r="5.6"/><circle cx="502.9" cy="423.3" r="5.6"/><circle cx="476" cy="415.5" r="5.6"/><circle cx="470" cy="588.7" r="5.6"/><circle cx="550.8" cy="358.9" r="5.6"/><circle cx="729.8" cy="464" r="5.6"/><circle cx="488.1" cy="299.3" r="5.6"/><circle cx="678.4" cy="483.3" r="5.6"/><circle cx="595.8" cy="552.4" r="5.6"/><circle cx="471.9" cy="452.9" r="5.6"/><circle cx="340.4" cy="495.6" r="5.6"/><circle cx="460.3" cy="362.3" r="5.6"/><circle cx="477.1" cy="276.9" r="5.6"/><circle cx="523.2" cy="655.9" r="5.6"/><circle cx="673.7" cy="626.4" r="5.6"/><circle cx="851.7" cy="185.9" r="5.6"/><circle cx="700.5" cy="367.4" r="5.6"/><circle cx="476.6" cy="570.3" r="5.6"/><circle cx="303.1" cy="442.6" r="5.6"/><circle cx="440.3" cy="371.2" r="5.6"/><circle cx="514.5" cy="674.7" r="5.6"/><circle cx="618.7" cy="442.8" r="5.6"/><circle cx="640" cy="688.5" r="5.6"/><circle cx="594.7" cy="240.5" r="5.6"/><circle cx="291.3" cy="493.7" r="5.6"/><circle cx="666.6" cy="237.5" r="5.6"/><circle cx="490.1" cy="325.3" r="5.6"/><circle cx="575.5" cy="477.4" r="5.6"/><circle cx="526.4" cy="667.9" r="5.6"/><circle cx="574.5" cy="679.5" r="5.6"/><circle cx="490.5" cy="609.3" r="5.6"/><circle cx="277" cy="578.5" r="5.6"/><circle cx="650.4" cy="481.5" r="5.6"/><circle cx="563.9" cy="530.6" r="5.6"/><circle cx="482.6" cy="390.8" r="5.6"/><circle cx="537.8" cy="566.1" r="5.6"/><circle cx="514.4" cy="357.5" r="5.6"/><circle cx="552.9" cy="475.8" r="5.6"/><circle cx="720" cy="354.1" r="5.6"/><circle cx="497" cy="363" r="5.6"/><circle cx="546" cy="635.4" r="5.6"/><circle cx="662.6" cy="434.3" r="5.6"/><circle cx="695" cy="374.3" r="5.6"/><circle cx="657.3" cy="283.5" r="5.6"/><circle cx="433.3" cy="371.5" r="5.6"/><circle cx="825.9" cy="551.1" r="5.6"/><circle cx="509.9" cy="575.9" r="5.6"/><circle cx="764.5" cy="550.3" r="5.6"/><circle cx="358.2" cy="527.9" r="5.6"/><circle cx="530.8" cy="494.8" r="5.6"/><circle cx="719.1" cy="383" r="5.6"/><circle cx="418.1" cy="330" r="5.6"/><circle cx="442.8" cy="430.1" r="5.6"/><circle cx="364.9" cy="623.7" r="5.6"/><circle cx="381.4" cy="351.1" r="5.6"/><circle cx="474.4" cy="299.4" r="5.6"/><circle cx="543.3" cy="514.4" r="5.6"/><circle cx="243.7" cy="547" r="5.6"/><circle cx="561.2" cy="552.2" r="5.6"/><circle cx="721.7" cy="621.7" r="5.6"/><circle cx="790.7" cy="338.2" r="5.6"/><circle cx="704" cy="515.9" r="5.6"/><circle cx="589.3" cy="493.7" r="5.6"/><circle cx="269.5" cy="551.2" r="5.6"/><circle cx="445.4" cy="508" r="5.6"/><circle cx="478.2" cy="438.7" r="5.6"/><circle cx="640.2" cy="566.4" r="5.6"/><circle cx="477.2" cy="523.2" r="5.6"/><circle cx="355.7" cy="379.8" r="5.6"/><circle cx="732.6" cy="523.7" r="5.6"/><circle cx="652.6" cy="485.5" r="5.6"/><circle cx="566.4" cy="342.5" r="5.6"/><circle cx="691.1" cy="296.2" r="5.6"/><circle cx="323.5" cy="615.4" r="5.6"/><circle cx="625.7" cy="410.7" r="5.6"/><circle cx="444.6" cy="539.9" r="5.6"/><circle cx="595.3" cy="392.4" r="5.6"/><circle cx="507.6" cy="322.1" r="5.6"/><circle cx="577.4" cy="269.9" r="5.6"/><circle cx="688" cy="638.7" r="5.6"/><circle cx="524.3" cy="362" r="5.6"/><circle cx="626.8" cy="577.8" r="5.6"/><circle cx="333.1" cy="512.8" r="5.6"/><circle cx="428.6" cy="254.9" r="5.6"/><circle cx="746.6" cy="376.2" r="5.6"/><circle cx="591.8" cy="649.8" r="5.6"/><circle cx="202.9" cy="426.5" r="5.6"/><circle cx="300.6" cy="250.2" r="5.6"/><circle cx="523.4" cy="330.1" r="5.6"/><circle cx="670.9" cy="317.5" r="5.6"/><circle cx="535.4" cy="351.2" r="5.6"/><circle cx="617.1" cy="481.3" r="5.6"/><circle cx="628.3" cy="390.6" r="5.6"/><circle cx="781.6" cy="634.4" r="5.6"/><circle cx="557.4" cy="399.4" r="5.6"/><circle cx="488.4" cy="399.3" r="5.6"/><circle cx="244.5" cy="396.4" r="5.6"/><circle cx="538" cy="509.8" r="5.6"/><circle cx="430" cy="382.1" r="5.6"/><circle cx="380.8" cy="538.1" r="5.6"/><circle cx="491.8" cy="296.6" r="5.6"/><circle cx="680.8" cy="174.7" r="5.6"/><circle cx="265" cy="329.6" r="5.6"/><circle cx="444.2" cy="210" r="5.6"/><circle cx="552.1" cy="488.4" r="5.6"/><circle cx="394.6" cy="434.4" r="5.6"/><circle cx="534.8" cy="642.2" r="5.6"/><circle cx="543.5" cy="299.5" r="5.6"/><circle cx="495.9" cy="462.6" r="5.6"/><circle cx="155.7" cy="619.4" r="5.6"/><circle cx="872" cy="285.6" r="5.6"/><circle cx="494.3" cy="370.1" r="5.6"/><circle cx="625.4" cy="525.1" r="5.6"/><circle cx="538.9" cy="324.8" r="5.6"/><circle cx="690.5" cy="577.6" r="5.6"/><circle cx="632" cy="626.3" r="5.6"/><circle cx="473.1" cy="369.8" r="5.6"/><circle cx="559.1" cy="360.5" r="5.6"/><circle cx="399.5" cy="452.1" r="5.6"/><circle cx="655.1" cy="302.7" r="5.6"/><circle cx="460.3" cy="330" r="5.6"/><circle cx="883.2" cy="337.7" r="5.6"/><circle cx="282.9" cy="294.8" r="5.6"/><circle cx="433.6" cy="566.4" r="5.6"/><circle cx="632.3" cy="473.5" r="5.6"/><circle cx="581.8" cy="458.3" r="5.6"/><circle cx="419.1" cy="373.2" r="5.6"/><circle cx="411" cy="204.2" r="5.6"/><circle cx="537.1" cy="247.1" r="5.6"/><circle cx="482.5" cy="528.9" r="5.6"/><circle cx="301.8" cy="477.1" r="5.6"/><circle cx="515.2" cy="652.3" r="5.6"/><circle cx="510.6" cy="305" r="5.6"/><circle cx="578.2" cy="434.5" r="5.6"/><circle cx="363.6" cy="411.9" r="5.6"/><circle cx="620.5" cy="482.4" r="5.6"/><circle cx="685.6" cy="377.6" r="5.6"/><circle cx="587.4" cy="333.1" r="5.6"/><circle cx="382.3" cy="285.1" r="5.6"/><circle cx="436.7" cy="367.2" r="5.6"/><circle cx="582.7" cy="425.9" r="5.6"/><circle cx="433.9" cy="329.4" r="5.6"/><circle cx="183.7" cy="343.1" r="5.6"/><circle cx="625.1" cy="345.8" r="5.6"/><circle cx="401.7" cy="538.6" r="5.6"/><circle cx="470.1" cy="438.6" r="5.6"/><circle cx="764.4" cy="413.8" r="5.6"/><circle cx="390.7" cy="580.9" r="5.6"/><circle cx="640.4" cy="646.2" r="5.6"/><circle cx="354.2" cy="515.2" r="5.6"/><circle cx="498.7" cy="440.8" r="5.6"/><circle cx="525.8" cy="303.5" r="5.6"/><circle cx="364.4" cy="472.9" r="5.6"/><circle cx="411.2" cy="649.4" r="5.6"/><circle cx="545.2" cy="291.7" r="5.6"/><circle cx="634.5" cy="529.6" r="5.6"/><circle cx="276" cy="165.4" r="5.6"/><circle cx="451.1" cy="475.8" r="5.6"/><circle cx="636" cy="406.8" r="5.6"/><circle cx="461.2" cy="373.1" r="5.6"/><circle cx="548.5" cy="314" r="5.6"/><circle cx="614" cy="190.5" r="5.6"/><circle cx="569.2" cy="375" r="5.6"/><circle cx="586.1" cy="364.6" r="5.6"/><circle cx="467.3" cy="639.7" r="5.6"/><circle cx="488" cy="620.1" r="5.6"/><circle cx="122.5" cy="363.1" r="5.6"/><circle cx="492.9" cy="558.6" r="5.6"/><circle cx="574.6" cy="413.6" r="5.6"/><circle cx="602.3" cy="493.2" r="5.6"/><circle cx="430.5" cy="442.8" r="5.6"/><circle cx="773" cy="213.2" r="5.6"/><circle cx="582.9" cy="367.4" r="5.6"/><circle cx="525.1" cy="299.5" r="5.6"/><circle cx="688.1" cy="608.6" r="5.6"/><circle cx="426.9" cy="554" r="5.6"/><circle cx="456.3" cy="338.7" r="5.6"/><circle cx="825.3" cy="515.1" r="5.6"/><circle cx="545.7" cy="628.2" r="5.6"/><circle cx="743" cy="417.1" r="5.6"/><circle cx="336.9" cy="393" r="5.6"/><circle cx="514" cy="556.8" r="5.6"/><circle cx="564.2" cy="347.5" r="5.6"/><circle cx="526.4" cy="427.3" r="5.6"/><circle cx="396.7" cy="325.9" r="5.6"/><circle cx="491.1" cy="440.7" r="5.6"/><circle cx="371.6" cy="313.5" r="5.6"/><circle cx="591.6" cy="475.3" r="5.6"/><circle cx="683.1" cy="339.9" r="5.6"/><circle cx="177.6" cy="201.5" r="5.6"/><circle cx="712.9" cy="274.2" r="5.6"/><circle cx="358.1" cy="346.5" r="5.6"/><circle cx="564.4" cy="424" r="5.6"/><circle cx="586.9" cy="331.8" r="5.6"/><circle cx="459.8" cy="593.7" r="5.6"/><circle cx="394.7" cy="496.3" r="5.6"/><circle cx="566.3" cy="418.1" r="5.6"/><circle cx="563.4" cy="457" r="5.6"/><circle cx="610.5" cy="563.9" r="5.6"/><circle cx="222.6" cy="475.8" r="5.6"/><circle cx="297.2" cy="161.9" r="5.6"/><circle cx="740.4" cy="574.7" r="5.6"/><circle cx="653.7" cy="468.9" r="5.6"/><circle cx="553.8" cy="540.3" r="5.6"/><circle cx="638.6" cy="559.8" r="5.6"/><circle cx="674.2" cy="319.3" r="5.6"/><circle cx="183.7" cy="471.6" r="5.6"/><circle cx="685.1" cy="628.8" r="5.6"/><circle cx="434.2" cy="513.2" r="5.6"/><circle cx="561.6" cy="498" r="5.6"/><circle cx="474.7" cy="247.6" r="5.6"/><circle cx="619.1" cy="326.6" r="5.6"/><circle cx="478.4" cy="243.3" r="5.6"/><circle cx="625.6" cy="515.9" r="5.6"/><circle cx="443.4" cy="324.7" r="5.6"/><circle cx="362.5" cy="234.6" r="5.6"/><circle cx="676.4" cy="374.2" r="5.6"/><circle cx="589.1" cy="387.5" r="5.6"/><circle cx="730.8" cy="359.1" r="5.6"/><circle cx="522.6" cy="425.7" r="5.6"/><circle cx="643.6" cy="534" r="5.6"/><circle cx="760.6" cy="333" r="5.6"/><circle cx="456.7" cy="426.4" r="5.6"/><circle cx="326.3" cy="538" r="5.6"/><circle cx="492.4" cy="298.4" r="5.6"/><circle cx="477.8" cy="361.1" r="5.6"/><circle cx="540.1" cy="388.5" r="5.6"/><circle cx="776" cy="473.9" r="5.6"/><circle cx="450.2" cy="365.9" r="5.6"/><circle cx="596" cy="441.6" r="5.6"/><circle cx="474.8" cy="419.4" r="5.6"/><circle cx="503.1" cy="542.1" r="5.6"/><circle cx="549.5" cy="310.7" r="5.6"/><circle cx="725.2" cy="468.9" r="5.6"/><circle cx="518.7" cy="280.7" r="5.6"/><circle cx="649" cy="372.4" r="5.6"/><circle cx="602.6" cy="473.3" r="5.6"/><circle cx="626.5" cy="568.2" r="5.6"/><circle cx="448.4" cy="281.7" r="5.6"/><circle cx="728.6" cy="596.4" r="5.6"/><circle cx="481.2" cy="303.9" r="5.6"/><circle cx="522" cy="361.1" r="5.6"/><circle cx="697.9" cy="376.2" r="5.6"/><circle cx="704.8" cy="529.2" r="5.6"/><circle cx="397.3" cy="410.2" r="5.6"/><circle cx="412.7" cy="326.9" r="5.6"/><circle cx="354.9" cy="659.7" r="5.6"/><circle cx="574.8" cy="557.5" r="5.6"/><circle cx="527.6" cy="532.3" r="5.6"/><circle cx="580.9" cy="469.7" r="5.6"/><circle cx="570.6" cy="507.1" r="5.6"/><circle cx="460.9" cy="462.7" r="5.6"/><circle cx="392.8" cy="581.8" r="5.6"/><circle cx="679.1" cy="480.1" r="5.6"/><circle cx="610.7" cy="336.8" r="5.6"/><circle cx="321.2" cy="628.1" r="5.6"/><circle cx="503.5" cy="454.2" r="5.6"/><circle cx="405.3" cy="256.9" r="5.6"/><circle cx="251.4" cy="419.1" r="5.6"/><circle cx="569.1" cy="238.7" r="5.6"/><circle cx="510.3" cy="465.2" r="5.6"/><circle cx="481.3" cy="415.3" r="5.6"/><circle cx="532.9" cy="439.1" r="5.6"/><circle cx="616.1" cy="474" r="5.6"/><circle cx="529.2" cy="419.2" r="5.6"/><circle cx="449.5" cy="524.7" r="5.6"/><circle cx="426.1" cy="369.7" r="5.6"/><circle cx="497.6" cy="353.1" r="5.6"/><circle cx="572.2" cy="650.9" r="5.6"/><circle cx="376.6" cy="423.7" r="5.6"/><circle cx="481.5" cy="439.3" r="5.6"/><circle cx="673.5" cy="582.9" r="5.6"/><circle cx="514" cy="366.1" r="5.6"/><circle cx="441.8" cy="241.8" r="5.6"/><circle cx="457.9" cy="586.5" r="5.6"/><circle cx="667.2" cy="490.4" r="5.6"/><circle cx="629.2" cy="411" r="5.6"/><circle cx="682.8" cy="576.6" r="5.6"/><circle cx="508.4" cy="669.5" r="5.6"/><circle cx="578.6" cy="239.6" r="5.6"/><circle cx="473.8" cy="348.9" r="5.6"/><circle cx="629.2" cy="366.6" r="5.6"/><circle cx="452.4" cy="495.3" r="5.6"/><circle cx="333.3" cy="482.3" r="5.6"/><circle cx="537.2" cy="411.5" r="5.6"/><circle cx="820.9" cy="410.8" r="5.6"/><circle cx="601.7" cy="564" r="5.6"/><circle cx="681.5" cy="664.6" r="5.6"/><circle cx="589.6" cy="350.3" r="5.6"/><circle cx="461.1" cy="377.5" r="5.6"/><circle cx="520" cy="517.1" r="5.6"/><circle cx="503.6" cy="698.9" r="5.6"/><circle cx="429.2" cy="445.2" r="5.6"/><circle cx="633.9" cy="287.5" r="5.6"/><circle cx="371.2" cy="505.3" r="5.6"/><circle cx="651.6" cy="455" r="5.6"/><circle cx="669" cy="478.4" r="5.6"/><circle cx="344.5" cy="603.5" r="5.6"/><circle cx="641.2" cy="668" r="5.6"/><circle cx="854.8" cy="462.3" r="5.6"/><circle cx="419.9" cy="381.7" r="5.6"/><circle cx="643.6" cy="585.5" r="5.6"/><circle cx="385.7" cy="516.7" r="5.6"/><circle cx="675.5" cy="399" r="5.6"/><circle cx="547.9" cy="298.1" r="5.6"/><circle cx="773" cy="639.5" r="5.6"/><circle cx="320.6" cy="531.3" r="5.6"/><circle cx="509.1" cy="631.6" r="5.6"/><circle cx="423.9" cy="457.6" r="5.6"/><circle cx="489.9" cy="564.3" r="5.6"/><circle cx="412.5" cy="559" r="5.6"/><circle cx="389.9" cy="367.6" r="5.6"/><circle cx="626.3" cy="383.8" r="5.6"/><circle cx="363.9" cy="320.6" r="5.6"/><circle cx="721.4" cy="494.5" r="5.6"/><circle cx="352.2" cy="604.4" r="5.6"/><circle cx="557.4" cy="461.4" r="5.6"/><circle cx="558.5" cy="619.6" r="5.6"/><circle cx="587.4" cy="498.8" r="5.6"/><circle cx="447.6" cy="236" r="5.6"/><circle cx="553.6" cy="452.4" r="5.6"/><circle cx="651.2" cy="447.8" r="5.6"/><circle cx="318.8" cy="511" r="5.6"/><circle cx="403" cy="410.6" r="5.6"/><circle cx="560.7" cy="455.2" r="5.6"/><circle cx="429.8" cy="551.8" r="5.6"/><circle cx="676.6" cy="303.3" r="5.6"/><circle cx="578.9" cy="389" r="5.6"/><circle cx="499.1" cy="226.3" r="5.6"/><circle cx="299.4" cy="462.7" r="5.6"/><circle cx="541.8" cy="415.7" r="5.6"/><circle cx="492.7" cy="335.9" r="5.6"/><circle cx="476.2" cy="373.6" r="5.6"/><circle cx="387.9" cy="592.2" r="5.6"/><circle cx="563.2" cy="638.7" r="5.6"/><circle cx="373.5" cy="517.2" r="5.6"/><circle cx="492.5" cy="202.5" r="5.6"/><circle cx="603.5" cy="328" r="5.6"/><circle cx="433.2" cy="566.9" r="5.6"/><circle cx="603" cy="408.6" r="5.6"/><circle cx="327.7" cy="405.7" r="5.6"/><circle cx="131.2" cy="401" r="5.6"/><circle cx="605.4" cy="577.1" r="5.6"/><circle cx="645.6" cy="380.5" r="5.6"/><circle cx="451.1" cy="493.2" r="5.6"/><circle cx="567.5" cy="558.7" r="5.6"/><circle cx="382.9" cy="421.4" r="5.6"/><circle cx="500.2" cy="386.9" r="5.6"/><circle cx="268.8" cy="573" r="5.6"/><circle cx="706.7" cy="420.3" r="5.6"/><circle cx="763.9" cy="518.1" r="5.6"/><circle cx="649.4" cy="606.6" r="5.6"/><circle cx="524.2" cy="512" r="5.6"/><circle cx="505.7" cy="416.2" r="5.6"/><circle cx="335.9" cy="546.6" r="5.6"/><circle cx="602.6" cy="471.7" r="5.6"/><circle cx="465.5" cy="360.7" r="5.6"/><circle cx="437.8" cy="534.8" r="5.6"/><circle cx="300.1" cy="487" r="5.6"/><circle cx="489.4" cy="582.2" r="5.6"/><circle cx="401.9" cy="531.8" r="5.6"/><circle cx="481.4" cy="581.6" r="5.6"/><circle cx="338" cy="413.2" r="5.6"/><circle cx="726.6" cy="417.7" r="5.6"/><circle cx="510.1" cy="538.2" r="5.6"/><circle cx="672.2" cy="317" r="5.6"/><circle cx="174.2" cy="388" r="5.6"/><circle cx="432.7" cy="511.1" r="5.6"/><circle cx="431.5" cy="539" r="5.6"/><circle cx="349" cy="452.4" r="5.6"/><circle cx="766.1" cy="578.6" r="5.6"/><circle cx="351.6" cy="582.2" r="5.6"/><circle cx="538.8" cy="431.6" r="5.6"/><circle cx="623.5" cy="398.8" r="5.6"/><circle cx="558.4" cy="409.6" r="5.6"/><circle cx="416.3" cy="389.6" r="5.6"/><circle cx="651.2" cy="330.5" r="5.6"/><circle cx="523.5" cy="487.7" r="5.6"/><circle cx="347.2" cy="481.7" r="5.6"/><circle cx="312.8" cy="568.8" r="5.6"/><circle cx="777.4" cy="417.9" r="5.6"/><circle cx="437" cy="507.7" r="5.6"/><circle cx="278.5" cy="468.2" r="5.6"/><circle cx="575.6" cy="465.8" r="5.6"/><circle cx="560.2" cy="304.8" r="5.6"/><circle cx="298.1" cy="179.6" r="5.6"/><circle cx="219.9" cy="552.9" r="5.6"/><circle cx="531.6" cy="702.5" r="5.6"/><circle cx="686.3" cy="380.9" r="5.6"/><circle cx="618.1" cy="502.7" r="5.6"/><circle cx="447.9" cy="242.4" r="5.6"/><circle cx="387.4" cy="393.8" r="5.6"/><circle cx="589" cy="280.2" r="5.6"/><circle cx="507.1" cy="223.5" r="5.6"/><circle cx="583.9" cy="437.3" r="5.6"/><circle cx="498" cy="613.5" r="5.6"/><circle cx="666.2" cy="452.2" r="5.6"/><circle cx="439.5" cy="446.6" r="5.6"/><circle cx="456.2" cy="523.3" r="5.6"/><circle cx="628.5" cy="377.7" r="5.6"/><circle cx="626.6" cy="683.3" r="5.6"/><circle cx="271" cy="516.5" r="5.6"/><circle cx="561.6" cy="290.6" r="5.6"/><circle cx="632.1" cy="484.9" r="5.6"/><circle cx="282.2" cy="281.3" r="5.6"/><circle cx="567.8" cy="479.1" r="5.6"/><circle cx="411.7" cy="637.3" r="5.6"/><circle cx="651.6" cy="219.7" r="5.6"/><circle cx="609.4" cy="347.5" r="5.6"/><circle cx="593.6" cy="556.8" r="5.6"/><circle cx="547.5" cy="435.3" r="5.6"/><circle cx="620.4" cy="551.6" r="5.6"/><circle cx="695.4" cy="447.7" r="5.6"/><circle cx="810" cy="386.3" r="5.6"/><circle cx="492.3" cy="552.1" r="5.6"/><circle cx="197.9" cy="613.4" r="5.6"/><circle cx="537" cy="513.2" r="5.6"/><circle cx="541.9" cy="595.9" r="5.6"/><circle cx="500.7" cy="440.4" r="5.6"/><circle cx="595.3" cy="502.3" r="5.6"/><circle cx="633.4" cy="681.7" r="5.6"/><circle cx="413.6" cy="657.8" r="5.6"/><circle cx="454.4" cy="249.1" r="5.6"/><circle cx="596.2" cy="441.6" r="5.6"/><circle cx="417.1" cy="306.9" r="5.6"/><circle cx="501.6" cy="296.9" r="5.6"/><circle cx="212.3" cy="465.3" r="5.6"/><circle cx="357.4" cy="562.2" r="5.6"/><circle cx="359.8" cy="577.5" r="5.6"/><circle cx="388.3" cy="371.6" r="5.6"/><circle cx="418.8" cy="502.9" r="5.6"/><circle cx="566.4" cy="374.1" r="5.6"/><circle cx="645.5" cy="491.6" r="5.6"/><circle cx="448.7" cy="509.2" r="5.6"/><circle cx="411.4" cy="382.8" r="5.6"/><circle cx="358.5" cy="653.8" r="5.6"/><circle cx="478.1" cy="275.6" r="5.6"/><circle cx="465.8" cy="410.8" r="5.6"/><circle cx="618.3" cy="381.6" r="5.6"/><circle cx="443.3" cy="460" r="5.6"/><circle cx="264.9" cy="579.7" r="5.6"/><circle cx="485.8" cy="655" r="5.6"/><circle cx="671.7" cy="503.1" r="5.6"/><circle cx="658.2" cy="551.8" r="5.6"/><circle cx="415.5" cy="522.4" r="5.6"/><circle cx="315.1" cy="608.9" r="5.6"/><circle cx="897.4" cy="328.1" r="5.6"/><circle cx="474.8" cy="576.1" r="5.6"/><circle cx="528.5" cy="388.9" r="5.6"/><circle cx="586.5" cy="575.7" r="5.6"/><circle cx="329.4" cy="464" r="5.6"/><circle cx="413.7" cy="212.6" r="5.6"/><circle cx="320.9" cy="463.8" r="5.6"/><circle cx="392.4" cy="526.2" r="5.6"/><circle cx="545.3" cy="402.5" r="5.6"/><circle cx="308.8" cy="344.4" r="5.6"/><circle cx="631.6" cy="444.6" r="5.6"/><circle cx="582" cy="445.9" r="5.6"/><circle cx="418.9" cy="447.3" r="5.6"/><circle cx="573.6" cy="385.5" r="5.6"/><circle cx="617.6" cy="441.6" r="5.6"/><circle cx="701.4" cy="599.2" r="5.6"/><circle cx="489.7" cy="511.6" r="5.6"/><circle cx="506.2" cy="461.2" r="5.6"/><circle cx="496.1" cy="265.2" r="5.6"/><circle cx="689.1" cy="418.9" r="5.6"/><circle cx="705.3" cy="521.1" r="5.6"/><circle cx="615.6" cy="421.3" r="5.6"/><circle cx="464.8" cy="347.4" r="5.6"/><circle cx="582.7" cy="598.3" r="5.6"/><circle cx="580.3" cy="316.3" r="5.6"/><circle cx="408.1" cy="537.4" r="5.6"/><circle cx="250.3" cy="408" r="5.6"/><circle cx="611.9" cy="573.4" r="5.6"/><circle cx="336.1" cy="192.6" r="5.6"/><circle cx="546.4" cy="396.5" r="5.6"/><circle cx="583.2" cy="567.4" r="5.6"/><circle cx="617.9" cy="311.5" r="5.6"/><circle cx="521.9" cy="468.6" r="5.6"/><circle cx="390.1" cy="544.2" r="5.6"/><circle cx="629.4" cy="403.7" r="5.6"/><circle cx="756.7" cy="397.1" r="5.6"/><circle cx="662" cy="426.7" r="5.6"/><circle cx="277.6" cy="345.3" r="5.6"/><circle cx="709.1" cy="376.3" r="5.6"/><circle cx="533.8" cy="465.6" r="5.6"/><circle cx="590.2" cy="356.9" r="5.6"/><circle cx="618.8" cy="505" r="5.6"/><circle cx="524.5" cy="430.2" r="5.6"/><circle cx="522" cy="572.1" r="5.6"/><circle cx="686.3" cy="378" r="5.6"/><circle cx="605" cy="422.6" r="5.6"/><circle cx="634.6" cy="594.2" r="5.6"/><circle cx="822.2" cy="510.3" r="5.6"/><circle cx="577.1" cy="554.7" r="5.6"/><circle cx="577.1" cy="378.1" r="5.6"/><circle cx="232.7" cy="212.2" r="5.6"/><circle cx="864" cy="452.6" r="5.6"/><circle cx="423.6" cy="538.7" r="5.6"/><circle cx="826.8" cy="432.6" r="5.6"/><circle cx="573.6" cy="302" r="5.6"/><circle cx="750.6" cy="351.4" r="5.6"/><circle cx="476.7" cy="622.9" r="5.6"/><circle cx="562.2" cy="327.1" r="5.6"/><circle cx="552.9" cy="244.5" r="5.6"/><circle cx="478.4" cy="418.4" r="5.6"/><circle cx="498.3" cy="398.7" r="5.6"/><circle cx="633.1" cy="392.3" r="5.6"/><circle cx="521.5" cy="528.3" r="5.6"/><circle cx="252.2" cy="337.8" r="5.6"/><circle cx="489.3" cy="531.3" r="5.6"/><circle cx="606.9" cy="682.3" r="5.6"/><circle cx="590.1" cy="414.6" r="5.6"/><circle cx="617" cy="426.4" r="5.6"/><circle cx="274.7" cy="357.1" r="5.6"/><circle cx="583" cy="494.3" r="5.6"/><circle cx="647.9" cy="449.8" r="5.6"/><circle cx="712.4" cy="497" r="5.6"/><circle cx="472.3" cy="410.6" r="5.6"/><circle cx="491.6" cy="262.7" r="5.6"/><circle cx="732" cy="454.9" r="5.6"/><circle cx="252.9" cy="557.4" r="5.6"/><circle cx="448.7" cy="643.5" r="5.6"/><circle cx="578.8" cy="370.5" r="5.6"/><circle cx="287.1" cy="385.1" r="5.6"/><circle cx="561.5" cy="355.7" r="5.6"/><circle cx="807" cy="523.6" r="5.6"/><circle cx="537.9" cy="429.5" r="5.6"/><circle cx="449.4" cy="575.6" r="5.6"/><circle cx="558.1" cy="491.8" r="5.6"/><circle cx="466.8" cy="566.6" r="5.6"/><circle cx="619" cy="410.6" r="5.6"/><circle cx="662" cy="551" r="5.6"/><circle cx="494" cy="183.8" r="5.6"/><circle cx="389.7" cy="453.5" r="5.6"/><circle cx="361.2" cy="519.6" r="5.6"/><circle cx="442.8" cy="564.8" r="5.6"/><circle cx="659.1" cy="436.5" r="5.6"/><circle cx="211.4" cy="500.6" r="5.6"/><circle cx="277" cy="477.3" r="5.6"/><circle cx="457.5" cy="461.2" r="5.6"/><circle cx="546.4" cy="281.2" r="5.6"/><circle cx="389.6" cy="648.6" r="5.6"/><circle cx="655.4" cy="282.8" r="5.6"/><circle cx="563.3" cy="491.2" r="5.6"/><circle cx="522.5" cy="502.8" r="5.6"/><circle cx="626.3" cy="567.9" r="5.6"/><circle cx="578.2" cy="463.2" r="5.6"/><circle cx="468.3" cy="531.3" r="5.6"/><circle cx="536.2" cy="454.6" r="5.6"/><circle cx="637.7" cy="626.5" r="5.6"/><circle cx="543.1" cy="546.3" r="5.6"/><circle cx="431.8" cy="558.5" r="5.6"/><circle cx="620.8" cy="610.2" r="5.6"/><circle cx="649.4" cy="476" r="5.6"/><circle cx="576.7" cy="420.5" r="5.6"/><circle cx="547.1" cy="358.5" r="5.6"/><circle cx="496.8" cy="216.5" r="5.6"/><circle cx="849.8" cy="295.5" r="5.6"/><circle cx="564.3" cy="494.1" r="5.6"/><circle cx="529.3" cy="256.8" r="5.6"/><circle cx="198.9" cy="599.5" r="5.6"/><circle cx="293.2" cy="416.7" r="5.6"/><circle cx="524.2" cy="425.6" r="5.6"/><circle cx="571.6" cy="342.1" r="5.6"/><circle cx="587.6" cy="359.5" r="5.6"/><circle cx="607.3" cy="562.4" r="5.6"/><circle cx="459.6" cy="445.3" r="5.6"/><circle cx="723.6" cy="398.3" r="5.6"/><circle cx="383.1" cy="422" r="5.6"/><circle cx="366.2" cy="372" r="5.6"/><circle cx="350" cy="321.5" r="5.6"/><circle cx="614.7" cy="246.3" r="5.6"/><circle cx="523.5" cy="484.8" r="5.6"/><circle cx="656.7" cy="409.3" r="5.6"/><circle cx="454.9" cy="517.8" r="5.6"/><circle cx="427.4" cy="368.1" r="5.6"/><circle cx="488.8" cy="302.3" r="5.6"/><circle cx="240.9" cy="492.4" r="5.6"/><circle cx="365.1" cy="278.2" r="5.6"/><circle cx="309.7" cy="485.1" r="5.6"/><circle cx="673.7" cy="342.4" r="5.6"/><circle cx="440.8" cy="537" r="5.6"/><circle cx="643.3" cy="656.6" r="5.6"/><circle cx="753.2" cy="389.5" r="5.6"/><circle cx="489.3" cy="465.7" r="5.6"/><circle cx="549.6" cy="675.1" r="5.6"/><circle cx="298.6" cy="587.2" r="5.6"/><circle cx="406.2" cy="623.9" r="5.6"/><circle cx="544.5" cy="570.4" r="5.6"/><circle cx="586.1" cy="579.7" r="5.6"/><circle cx="409.3" cy="466.2" r="5.6"/><circle cx="886.6" cy="513.5" r="5.6"/><circle cx="480.7" cy="303.6" r="5.6"/><circle cx="544.6" cy="411.3" r="5.6"/><circle cx="618.1" cy="626.5" r="5.6"/><circle cx="530.1" cy="611.9" r="5.6"/><circle cx="447.5" cy="417.3" r="5.6"/><circle cx="647.9" cy="582.6" r="5.6"/><circle cx="728.4" cy="386.1" r="5.6"/><circle cx="493.7" cy="377.6" r="5.6"/><circle cx="629.5" cy="250.2" r="5.6"/><circle cx="489.4" cy="381.7" r="5.6"/><circle cx="660.8" cy="573.5" r="5.6"/><circle cx="325.1" cy="358.1" r="5.6"/><circle cx="864.3" cy="337.5" r="5.6"/><circle cx="428.5" cy="457.7" r="5.6"/><circle cx="313.3" cy="444.1" r="5.6"/><circle cx="501.4" cy="539.6" r="5.6"/><circle cx="531.9" cy="505" r="5.6"/><circle cx="763.2" cy="666.8" r="5.6"/><circle cx="666.6" cy="496.9" r="5.6"/><circle cx="518.2" cy="410.3" r="5.6"/><circle cx="294" cy="298.1" r="5.6"/><circle cx="386.6" cy="470.5" r="5.6"/><circle cx="509.8" cy="374.7" r="5.6"/><circle cx="894.2" cy="558.4" r="5.6"/><circle cx="271.2" cy="142.9" r="5.6"/><circle cx="708" cy="505.5" r="5.6"/><circle cx="410.3" cy="354.9" r="5.6"/><circle cx="742.7" cy="595.8" r="5.6"/><circle cx="371" cy="467.4" r="5.6"/><circle cx="510.6" cy="443.8" r="5.6"/><circle cx="331.4" cy="557.4" r="5.6"/><circle cx="620" cy="274.9" r="5.6"/><circle cx="743.7" cy="514.5" r="5.6"/><circle cx="816.4" cy="463.9" r="5.6"/><circle cx="617.9" cy="398.3" r="5.6"/><circle cx="759.4" cy="217.4" r="5.6"/><circle cx="674.6" cy="403.6" r="5.6"/><circle cx="533.7" cy="308.8" r="5.6"/><circle cx="585.6" cy="380.8" r="5.6"/><circle cx="397.9" cy="283.5" r="5.6"/><circle cx="523.3" cy="143.9" r="5.6"/><circle cx="697.3" cy="326.1" r="5.6"/><circle cx="577.7" cy="495.4" r="5.6"/><circle cx="613.1" cy="509.6" r="5.6"/><circle cx="389.9" cy="364.1" r="5.6"/><circle cx="402.4" cy="479.3" r="5.6"/><circle cx="422.4" cy="572.4" r="5.6"/><circle cx="599.7" cy="521.5" r="5.6"/><circle cx="354.1" cy="566.7" r="5.6"/><circle cx="630.1" cy="420.6" r="5.6"/><circle cx="330.9" cy="434.7" r="5.6"/><circle cx="750.5" cy="439.9" r="5.6"/><circle cx="549.3" cy="561.9" r="5.6"/><circle cx="413.8" cy="341.2" r="5.6"/><circle cx="568" cy="451.2" r="5.6"/><circle cx="481.4" cy="320.2" r="5.6"/><circle cx="570.1" cy="318.8" r="5.6"/><circle cx="523.2" cy="394" r="5.6"/><circle cx="411.7" cy="461.3" r="5.6"/><circle cx="413.5" cy="461.8" r="5.6"/><circle cx="576.7" cy="460.2" r="5.6"/><circle cx="732.2" cy="535.6" r="5.6"/><circle cx="692.1" cy="427.3" r="5.6"/><circle cx="441.6" cy="564.6" r="5.6"/><circle cx="663.8" cy="260.1" r="5.6"/><circle cx="505.1" cy="259.3" r="5.6"/><circle cx="547.6" cy="680.5" r="5.6"/><circle cx="572.3" cy="590.5" r="5.6"/><circle cx="892.1" cy="220.1" r="5.6"/><circle cx="349.6" cy="402.7" r="5.6"/><circle cx="555.5" cy="690.6" r="5.6"/><circle cx="257.5" cy="322.3" r="5.6"/><circle cx="631.3" cy="239.4" r="5.6"/><circle cx="681.4" cy="348.7" r="5.6"/><circle cx="740.6" cy="377.9" r="5.6"/><circle cx="266.8" cy="647.2" r="5.6"/><circle cx="588.6" cy="522" r="5.6"/><circle cx="755.9" cy="552.2" r="5.6"/><circle cx="439.6" cy="290.8" r="5.6"/><circle cx="496.8" cy="447" r="5.6"/><circle cx="533.4" cy="460.9" r="5.6"/><circle cx="551.3" cy="586" r="5.6"/><circle cx="625.8" cy="285.7" r="5.6"/><circle cx="673.7" cy="465.9" r="5.6"/><circle cx="523.1" cy="643.3" r="5.6"/><circle cx="578.6" cy="430.1" r="5.6"/><circle cx="877.7" cy="362.9" r="5.6"/><circle cx="591.4" cy="447.5" r="5.6"/><circle cx="539.9" cy="376.3" r="5.6"/><circle cx="306.4" cy="164.3" r="5.6"/><circle cx="517.6" cy="614.3" r="5.6"/><circle cx="459.4" cy="620.8" r="5.6"/><circle cx="536.1" cy="619.1" r="5.6"/><circle cx="429.6" cy="262.8" r="5.6"/><circle cx="428.6" cy="453.4" r="5.6"/><circle cx="410.6" cy="540.5" r="5.6"/><circle cx="468.2" cy="356.8" r="5.6"/><circle cx="712.5" cy="388" r="5.6"/><circle cx="657.3" cy="434.1" r="5.6"/><circle cx="495.2" cy="354.7" r="5.6"/><circle cx="255.4" cy="550.8" r="5.6"/><circle cx="370.4" cy="423.6" r="5.6"/><circle cx="431.7" cy="417.6" r="5.6"/><circle cx="565.1" cy="331.8" r="5.6"/><circle cx="422.9" cy="431.4" r="5.6"/><circle cx="811.4" cy="521.5" r="5.6"/><circle cx="448.2" cy="513.1" r="5.6"/><circle cx="348" cy="629.7" r="5.6"/><circle cx="467.1" cy="495.1" r="5.6"/><circle cx="387.9" cy="285.5" r="5.6"/><circle cx="567.3" cy="622.5" r="5.6"/><circle cx="530.1" cy="554.6" r="5.6"/><circle cx="553.3" cy="474.1" r="5.6"/><circle cx="319.6" cy="578.2" r="5.6"/><circle cx="516.5" cy="439.7" r="5.6"/><circle cx="582.9" cy="557.5" r="5.6"/><circle cx="318.2" cy="514.8" r="5.6"/><circle cx="622.3" cy="309.4" r="5.6"/><circle cx="657.8" cy="666.8" r="5.6"/><circle cx="817.4" cy="518.3" r="5.6"/><circle cx="558.8" cy="348.8" r="5.6"/><circle cx="521" cy="505.1" r="5.6"/><circle cx="545.1" cy="515.6" r="5.6"/><circle cx="506.7" cy="599.6" r="5.6"/><circle cx="289.2" cy="467.7" r="5.6"/><circle cx="254.2" cy="400.9" r="5.6"/><circle cx="488.5" cy="407.7" r="5.6"/><circle cx="421.3" cy="523.8" r="5.6"/><circle cx="546.2" cy="327" r="5.6"/><circle cx="217.1" cy="508" r="5.6"/><circle cx="294.7" cy="364" r="5.6"/><circle cx="335.6" cy="590.4" r="5.6"/><circle cx="656.7" cy="294.6" r="5.6"/><circle cx="362.9" cy="496.9" r="5.6"/><circle cx="442.9" cy="570.8" r="5.6"/><circle cx="504.8" cy="516" r="5.6"/><circle cx="498.4" cy="599.5" r="5.6"/><circle cx="506" cy="316.1" r="5.6"/><circle cx="860.5" cy="317.5" r="5.6"/><circle cx="343.2" cy="481.5" r="5.6"/><circle cx="450.5" cy="663.7" r="5.6"/><circle cx="425.2" cy="311.6" r="5.6"/><circle cx="709.7" cy="454.7" r="5.6"/><circle cx="443.3" cy="249.9" r="5.6"/><circle cx="543" cy="312" r="5.6"/><circle cx="615.4" cy="582.3" r="5.6"/><circle cx="345.9" cy="432.6" r="5.6"/><circle cx="761.5" cy="336.2" r="5.6"/><circle cx="619.6" cy="222.6" r="5.6"/><circle cx="358.5" cy="631.5" r="5.6"/><circle cx="605.2" cy="458.9" r="5.6"/><circle cx="474.1" cy="367" r="5.6"/><circle cx="587.8" cy="363.1" r="5.6"/><circle cx="480.8" cy="425.6" r="5.6"/><circle cx="694.5" cy="309" r="5.6"/><circle cx="300.1" cy="551.1" r="5.6"/><circle cx="441.9" cy="315.4" r="5.6"/><circle cx="497.6" cy="454.9" r="5.6"/></g><path d="M122.5,466 L198.9,464.7 L227.3,463.8 L252.2,462.9 L266.5,462.2 L274.7,461.8 L282.9,461.4 L297.2,460.6 L301.8,460.3 L313.9,459.5 L320.9,459 L329.4,458.3 L335.9,457.8 L344.5,457.1 L349.6,456.6 L354.1,456.2 L357.4,456 L362.5,455.6 L370.4,454.9 L380.8,454.1 L386.6,453.7 L389.9,453.5 L394.4,453.2 L397.3,453 L401.6,452.6 L406.2,452.3 L411.2,451.7 L413.4,451.4 L416.7,450.9 L419.1,450.5 L423.9,449.6 L427.3,448.9 L429.6,448.4 L432.7,447.7 L435.4,447 L439.1,446.2 L442.8,445.3 L444.6,444.8 L448.7,443.8 L451.4,443.2 L456.7,442.1 L460.1,441.5 L461.8,441.2 L467.1,440.5 L470,440.1 L474.6,439.7 L476.7,439.5 L478.4,439.3 L481.4,439.1 L484.6,439 L488.1,438.9 L489.4,438.8 L491.8,438.8 L493.4,438.8 L496.1,438.7 L498.3,438.7 L501.4,438.7 L504,438.8 L506.7,438.8 L510.1,438.8 L514,438.9 L518.7,439.1 L522.6,439.3 L523.5,439.3 L525.6,439.5 L528.8,439.7 L531.6,439.9 L534.8,440.2 L537.8,440.4 L541.2,440.7 L543.5,441 L545.3,441.1 L547.1,441.3 L549.3,441.6 L552.9,441.9 L557.4,442.3 L560.5,442.6 L561.8,442.7 L564.4,442.9 L567.3,443.1 L570.6,443.4 L574.5,443.6 L576.7,443.7 L578.2,443.8 L580.9,443.9 L582.9,443.9 L586.1,444 L587.6,444.1 L590.1,444.2 L594.8,444.3 L599.7,444.5 L604.7,444.6 L607.3,444.7 L614,444.9 L616.6,444.9 L618.3,445 L620.5,445 L625.6,445.1 L628.3,445.2 L631.6,445.3 L633.4,445.3 L640,445.4 L645.5,445.5 L650.4,445.6 L655.1,445.7 L659.1,445.8 L666.2,446 L669,446 L673.7,446.1 L679.1,446 L685.1,445.9 L690.5,445.7 L697.3,445.3 L703.9,444.8 L709.7,444.4 L717.7,443.7 L726.6,443 L732.6,442.4 L750.5,440.7 L761.5,439.6 L773,438.4 L810.6,434.3 L820.9,433.2 L848.6,430.2 L872,427.6 L985.5,413.2" fill="none" stroke="#df536b" stroke-width="3" opacity="0.65"/><rect x="88" y="88" width="932" height="656" fill="none" stroke="#777" stroke-width="3"/><path d="M168.6,744V756M344,744V756M519.4,744V756M694.8,744V756M870.2,744V756M88,719.7H76M88,552H76M88,384.3H76M88,216.6H76" stroke="#777" stroke-width="3"/><text x="168.6" y="782" font-family="Liberation Sans" fill="#111" stroke="#111" stroke-width="0.5" font-size="18" text-anchor="middle">-10</text><text x="344" y="782" font-family="Liberation Sans" fill="#111" stroke="#111" stroke-width="0.5" font-size="18" text-anchor="middle">-5</text><text x="519.4" y="782" font-family="Liberation Sans" fill="#111" stroke="#111" stroke-width="0.5" font-size="18" text-anchor="middle">0</text><text x="694.8" y="782" font-family="Liberation Sans" fill="#111" stroke="#111" stroke-width="0.5" font-size="18" text-anchor="middle">5</text><text x="870.2" y="782" font-family="Liberation Sans" fill="#111" stroke="#111" stroke-width="0.5" font-size="18" text-anchor="middle">10</text><text transform="translate(58,719.7) rotate(-90)" font-family="Liberation Sans" fill="#111" stroke="#111" stroke-width="0.5" font-size="18" text-anchor="middle">0.0</text><text transform="translate(58,552) rotate(-90)" font-family="Liberation Sans" fill="#111" stroke="#111" stroke-width="0.5" font-size="18" text-anchor="middle">0.5</text><text transform="translate(58,384.3) rotate(-90)" font-family="Liberation Sans" fill="#111" stroke="#111" stroke-width="0.5" font-size="18" text-anchor="middle">1.0</text><text transform="translate(58,216.6) rotate(-90)" font-family="Liberation Sans" fill="#111" stroke="#111" stroke-width="0.5" font-size="18" text-anchor="middle">1.5</text><text x="554" y="80" font-family="Liberation Sans" fill="#111" stroke="#111" stroke-width="0.5" font-size="18" text-anchor="middle">Scale-Location</text><text x="554" y="826" font-family="Liberation Sans" fill="#111" stroke="#111" stroke-width="0.5" font-size="18" text-anchor="middle">Fitted values</text><text x="554" y="844" font-family="Liberation Sans" fill="#111" stroke="#111" stroke-width="0.5" font-size="18" text-anchor="middle">lm(y ~ x1 + x2)</text><text transform="translate(14,416) rotate(-90)" font-family="Liberation Sans" fill="#111" stroke="#111" stroke-width="0.5" font-size="18" text-anchor="middle">√|Standardized residuals|</text><text x="405.6" y="117.5" font-family="Liberation Sans" fill="#111" stroke="#111" stroke-width="0.5" font-size="15">122</text><text x="509.7" y="130.4" font-family="Liberation Sans" fill="#111" stroke="#111" stroke-width="0.5" font-size="15">203</text><text x="277.8" y="148.2" font-family="Liberation Sans" fill="#111" stroke="#111" stroke-width="0.5" font-size="15">867</text></svg>
<div class="a" style="left:665px;top:1876px;width:1599px;height:8px;background:#565d66;"></div>
<div class="a" style="left:2266px;top:960px;width:20px;height:606px;background:#33383f;"></div><svg style="left:2313px;top:82px" width="30" height="28" viewBox="0 0 30 28"><g fill="none" stroke="#8b949e" stroke-width="2"><path d="M15,2 L28,26 H2 Z"/><path d="M15,10 V18"/></g><circle cx="15" cy="22" r="1.5" fill="#8b949e"/></svg>
<svg style="left:2359px;top:81px" width="33" height="32" viewBox="0 0 33 32"><g fill="none" stroke="#8b949e" stroke-width="2"><path d="M10,11 V2 H31 V22 H22"/><path d="M18,8 l4,4 l-4,4" stroke-width="1.6"/><ellipse cx="11" cy="24" rx="5" ry="6"/><path d="M6,19 h10 M11,18 v12 M2,19 l3,2 M20,19 l-3,2 M1,25 h4 M17,25 h4 M2,31 l3,-2 M20,31 l-3,-2" stroke-width="1.6"/></g></svg>
<svg style="left:2410px;top:81px" width="28" height="30" viewBox="0 0 28 30"><g fill="none" stroke="#e1e4e8" stroke-width="2.2"><rect x="1" y="1" width="26" height="28" rx="2"/><path d="M9,9 l7,6 l-7,6"/></g></svg>
<div class="a" style="left:2404px;top:116px;width:40px;height:2px;background:#f9826c;"></div>
<svg style="left:2460px;top:79px" width="25" height="33" viewBox="0 0 25 33"><g fill="none" stroke="#8b949e" stroke-width="2"><rect x="1" y="4" width="23" height="28" rx="2"/><path d="M6,12 H19 M6,18 H19 M6,24 H19 M5,1 v4 M10,1 v4 M15,1 v4 M20,1 v4"/></g></svg>
<svg style="left:3216px;top:82px" width="28" height="28" viewBox="0 0 28 28"><g fill="none" stroke="#d1d5da" stroke-width="2"><rect x="1" y="1" width="26" height="26" rx="2"/><path d="M10,8 l6,6 l-6,6"/></g></svg>
<div class="a" style="left:3255px;top:73px;height:44px;line-height:44px;font-size:24px;color:#d1d5da;white-space:pre;">Python</div>
<svg style="left:3350px;top:82px" width="27" height="27" viewBox="0 0 27 27"><path d="M13.5,0 V27 M0,13.5 H27" stroke="#d1d5da" stroke-width="2"/></svg>
<svg style="left:3388px;top:91px" width="16" height="10" viewBox="0 0 16 10"><path d="M1,1 L8,8 L15,1" fill="none" stroke="#d1d5da" stroke-width="2"/></svg>
<svg style="left:3428px;top:82px" width="27" height="27" viewBox="0 0 27 27"><g fill="none" stroke="#d1d5da" stroke-width="2"><rect x="1" y="1" width="25" height="25" rx="2.5"/><path d="M1,13.5 H26"/></g></svg>
<svg style="left:3481px;top:82px" width="24" height="28" viewBox="0 0 24 28"><g fill="none" stroke="#d1d5da" stroke-width="2"><path d="M1,5 H23 M8,5 V1 H16 V5 M3,5 L4.5,27 H19.5 L21,5 M8.5,10 V22 M12,10 V22 M15.5,10 V22"/></g></svg>
<svg style="left:3537px;top:87px" width="18" height="18" viewBox="0 0 18 18"><path d="M1,1 L17,17 M17,1 L1,17" stroke="#d1d5da" stroke-width="2.2"/></svg>
<div class="t" style="top:131.8px"><span class="tp">&gt;</span> <span class="tg">q</span>()</div>
<div class="t" style="top:161.8px"><span style="color:#85e89d;font-weight:700">➜</span>  <span style="color:#56d4dd;font-weight:700">rdemo</span> r</div>
<div class="t" style="top:191.8px">R version 4.1.3 (2022-03-10) -- "One Push-Up"</div>
<div class="t" style="top:221.8px">Platform: x86_64-apple-darwin17.0 (64-bit)</div>
<div class="t" style="top:281.8px"><span class="tp">&gt;</span> <span class="tg" style="font-weight:700">library</span>(data.table)</div>
<div class="t" style="top:341.8px"><span class="tp">&gt;</span> <span class="tg">set.seed</span>(<span class="tn">123</span>)</div>
<div class="t" style="top:401.8px"><span class="tp">&gt;</span> n <span class="to">&lt;-</span> <span class="tn">1000</span></div>
<div class="t" style="top:461.8px"><span class="tp">&gt;</span> dt <span class="to">&lt;-</span> <span class="tg">data.table</span>(id <span class="to">=</span> <span class="tn">1</span><span class="to">:</span>n)</div>
<div class="t" style="top:521.8px"><span class="tp">&gt;</span> dt[, x1 <span class="to">:=</span> <span class="tg">rnorm</span>(.N, mean <span class="to">=</span> <span class="tn">0</span>, sd <span class="to">=</span> <span class="tn">2</span>)]</div>
<div class="t" style="top:581.8px"><span class="tp">&gt;</span> dt[, x2 <span class="to">:=</span> <span class="tg">runif</span>(.N, min <span class="to">=</span> <span class="tn">-1</span>, max <span class="to">=</span> <span class="tn">1</span>)]</div>
<div class="t" style="top:641.8px"><span class="tp">&gt;</span> dt[, y <span class="to">:=</span> <span class="tn">2</span> <span class="to">*</span> x1 <span class="to">+</span> x2 <span class="to">+</span> <span class="tn">0.5</span> <span class="to">*</span> <span class="tg">rnorm</span>(.N)]</div>
<div class="t" style="top:701.8px"><span class="tp">&gt;</span> model <span class="to">&lt;-</span> <span class="tg">lm</span>(y <span class="to">~</span> x1 <span class="to">+</span> x2, data <span class="to">=</span> dt)</div>
<div class="t" style="top:761.8px"><span class="tp">&gt;</span> <span class="tg">summary</span>(model)</div>
<div class="t" style="top:821.8px">Call:</div>
<div class="t" style="top:851.8px">lm(formula = y ~ x1 + x2, data = dt)</div>
<div class="t" style="top:911.8px">Residuals:</div>
<div class="t" style="top:941.8px">     Min       1Q   Median       3Q      Max </div>
<div class="t" style="top:971.8px">-1.54376 -0.31646 -0.01093  0.34316  1.61131 </div>
<div class="t" style="top:1031.8px">Coefficients:</div>
<div class="t" style="top:1061.8px">              Estimate Std. Error t value Pr(&gt;|t|)    </div>
<div class="t" style="top:1091.8px">(Intercept) -0.0007977  0.0155577  -0.051    0.959    </div>
<div class="t" style="top:1121.8px">x1           1.9855040  0.0078490 252.963   &lt;2e-16 ***</div>
<div class="t" style="top:1151.8px">x2           1.0224384  0.0266384  38.382   &lt;2e-16 ***</div>
<div class="t" style="top:1181.8px">---</div>
<div class="t" style="top:1211.8px">Signif. codes:  0 '***' 0.001 '**' 0.01 '*' 0.05 '.' 0.1 ' ' 1</div>
<div class="t" style="top:1271.8px">Residual standard error: 0.4919 on 997 degrees of freedom</div>
<div class="t" style="top:1301.8px">Multiple R-squared:  0.9851,    Adjusted R-squared:  0.9851 </div>
<div class="t" style="top:1331.8px">F-statistic: 3.298e+04 on 2 and 997 DF,  p-value: &lt; 2.2e-16</div>
<div class="t" style="top:1421.8px"><span class="tp">&gt;</span> <span class="tg">plot</span>(model)</div>
<div class="t" style="top:1481.8px"><span class="tp">&gt;</span> </div>
<div class="a" style="left:2336px;top:1480px;width:14px;height:30px;border:2px solid #79b8ff;"></div><svg style="left:18px;top:2156px" width="34" height="34" viewBox="0 0 34 34"><path d="M6,30 L16,20 L6,10 M28,4 L19,12 L28,20" fill="none" stroke="#fff" stroke-width="2.4"/></svg>
<svg style="left:84px;top:2159px" width="26" height="26" viewBox="0 0 26 26"><g fill="none" stroke="#d1d5da" stroke-width="2"><circle cx="13" cy="13" r="11.5"/><path d="M8,8 L18,18 M18,8 L8,18"/></g></svg>
<div class="a" style="left:118px;top:2151px;height:42px;line-height:42px;font-size:24px;color:#d1d5da">0</div>
<svg style="left:142px;top:2158px" width="26" height="24" viewBox="0 0 26 24"><g fill="none" stroke="#d1d5da" stroke-width="2"><path d="M13,1.5 L25,22.5 H1 Z"/><path d="M13,8 V16"/></g><circle cx="13" cy="19" r="1.4" fill="#d1d5da"/></svg>
<div class="a" style="left:175px;top:2151px;height:42px;line-height:42px;font-size:24px;color:#d1d5da">0</div>
<div class="a" style="left:2757px;top:2151px;height:42px;line-height:42px;font-size:24px;color:#d1d5da;white-space:pre">R 4.1.3: 25159</div>
<div class="a" style="left:2949px;top:2151px;height:42px;line-height:42px;font-size:24px;color:#d1d5da;white-space:pre">Ln 14, Col 1</div>
<div class="a" style="left:3111px;top:2151px;height:42px;line-height:42px;font-size:24px;color:#d1d5da;white-space:pre">Spaces: 2</div>
<div class="a" style="left:3254px;top:2151px;height:42px;line-height:42px;font-size:24px;color:#d1d5da;white-space:pre">UTF-8</div>
<div class="a" style="left:3359px;top:2151px;height:42px;line-height:42px;font-size:24px;color:#d1d5da;white-space:pre">LF</div>
<div class="a" style="left:3418px;top:2151px;height:42px;line-height:42px;font-size:24px;color:#d1d5da;white-space:pre">R</div>
<svg style="left:3466px;top:2158px" width="26" height="28" viewBox="0 0 26 28"><g fill="none" stroke="#d1d5da" stroke-width="2"><circle cx="9" cy="12" r="5"/><path d="M1,27 c0,-6 3,-9 8,-9 c3,0 5,1 6,3"/><path d="M11,2 H25 V14 H20 L16,18 V14"/></g></svg>
<svg style="left:3529px;top:2156px" width="22" height="30" viewBox="0 0 22 30"><g fill="none" stroke="#d1d5da" stroke-width="2"><path d="M11,2 c-5,0 -8,4 -8,9 v8 l-2,4 H21 l-2,-4 v-8 c0,-5 -3,-9 -8,-9 z"/><path d="M8,26 c1,2 5,2 6,0"/></g></svg></div>
<svg style="left:0;top:0;z-index:60" width="3584" height="2194" viewBox="0 0 3584 2194">
<defs><linearGradient id="pg" x1="0" x2="1" y1="0" y2="0"><stop offset="0" stop-color="#4a1b91"/><stop offset="0.5" stop-color="#2e18ab"/><stop offset="1" stop-color="#2914a0"/></linearGradient></defs><path fill="url(#pg)" d="M0,0H3584V3H0Z M0,3H22A19,19 0 0 0 0,25Z M3584,3H3562A19,19 0 0 1 3584,25Z"/>
<path fill="none" stroke="#000" stroke-width="1" d="M0.5,2194V25A21.5,21.5 0 0 1 22,3.5H3562A21.5,21.5 0 0 1 3583.5,25V2194"/>
<path fill="none" stroke="#75797d" stroke-width="2" d="M1,2194V25A20,20 0 0 1 22,5H3562A20,20 0 0 1 3583,25V2194"/>
<path fill="#000" d="M0,2194V2172A22,22 0 0 0 22,2194Z M3584,2194V2172A22,22 0 0 1 3562,2194Z"/>
<path fill="none" stroke="#55595e" stroke-width="1.5" d="M1,2150V2172A21,21 0 0 0 22,2193.2H3562A21,21 0 0 0 3583,2172V2150"/>
</svg>
<div class="a" style="left:0;top:923px;width:4px;height:96px;background:#f9826c;z-index:70"></div>
</body></html>
